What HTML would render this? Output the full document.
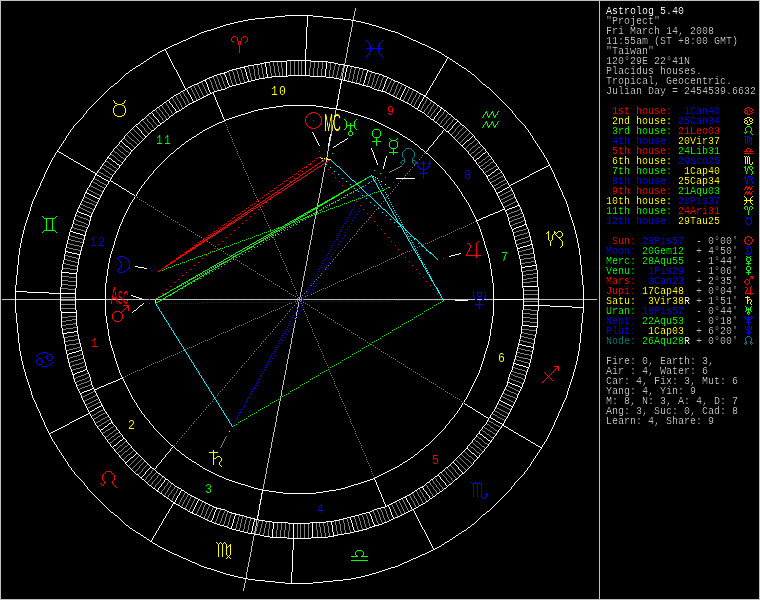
<!DOCTYPE html>
<html><head><meta charset="utf-8"><title>Astrolog 5.40</title>
<style>
html,body{margin:0;padding:0;background:#000;overflow:hidden}
svg{display:block}
text{font-family:"Liberation Mono",monospace;font-size:10px;white-space:pre}
.h{font-size:13.5px;text-anchor:middle;letter-spacing:1.3px}
.o{font-family:"Liberation Sans",sans-serif;font-size:24px;text-anchor:middle}
</style></head><body>
<svg width="760" height="600" viewBox="0 0 760 600">
<defs><filter id="t" x="0" y="0" width="760" height="600" filterUnits="userSpaceOnUse" color-interpolation-filters="sRGB"><feComponentTransfer><feFuncA type="gamma" amplitude="1.2" exponent="1.7" offset="0"/></feComponentTransfer></filter><filter id="t2" x="0" y="0" width="760" height="600" filterUnits="userSpaceOnUse" color-interpolation-filters="sRGB"><feComponentTransfer><feFuncA type="gamma" amplitude="1.4" exponent="2.2" offset="0"/></feComponentTransfer></filter></defs>
<rect width="760" height="600" fill="#000"/>
<g shape-rendering="crispEdges">
<path fill="#c0c0c0" d="m0 0h760v1h-760zm0 1h1v599h-1zm599 0h1v599h-1zm160 0h1v599h-1zm-404 7h1v3h-1zm-1 3h1v5h-1zm-1 5h1v4h-1zm-1 5h1v6h-1zm-1 6h1v5h-1zm-1 5h1v5h-1zm-1 5h1v5h-1zm-1 5h1v5h-1zm-1 5h1v6h-1zm-1 6h1v5h-1zm-1 5h1v5h-1zm-1 5h1v2h-1zm0 3h1v2h-1zm-1 2h1v5h-1zm-1 5h1v6h-1zm-1 10h1v1h-1zm-4 16h1v1h-1zm-1 6h1v1h-1zm-1 5h1v5h-1zm-1 5h1v5h-1zm-1 5h1v5h-1zm-1 5h1v6h-1zm-1 6h1v5h-1zm-1 6h1v4h-1zm-1 6h1v3h-1zm-1 4h1v4h-1zm-1 4h1v1h-1zm0 2h1v4h-1zm-1 4h1v1h-1zm0 2h1v3h-1zm-1 4h1v2h-1zm0 3h1v1h-1zm-1 1h1v5h-1zm-1 5h1v5h-1zm-1 5h1v6h-1zm-1 6h1v5h-1zm-1 5h1v5h-1zm-1 5h1v5h-1zm-1 5h1v5h-1zm-1 5h1v3h-1zm0 5h1v1h-1zm-1 1h1v5h-1zm-1 5h1v5h-1zm-1 5h1v5h-1zm-1 5h1v5h-1zm-1 5h1v6h-1zm-1 6h1v5h-1zm-1 5h1v5h-1zm-1 5h1v5h-1zm-1 5h1v5h-1zm-1 5h1v6h-1zm-1 6h1v5h-1zm-1 5h1v5h-1zm-1 5h1v5h-1zm-1 5h1v5h-1zm-1 5h1v6h-1zm-1 6h1v5h-1zm-1 5h1v5h-1zm-1 5h1v2h-1zm-297 2h13v1h-13zm14 0h44v1h-44zm45 0h14v1h-14zm45 0h36v1h-36zm38 0h5v1h-5zm6 0h5v1h-5zm6 0h5v1h-5zm7 0h136v1h-136zm137 0h2v1h-2zm3 0h139v1h-139zm140 0h32v1h-32zm34 0h5v1h-5zm7 0h9v1h-9zm40 0h14v1h-14zm15 0h44v1h-44zm45 0h13v1h-13zm-285 1h1v1h-1zm-1 2h1v5h-1zm-1 5h1v2h-1zm0 3h1v2h-1zm-1 2h1v4h-1zm0 5h1v1h-1zm-1 1h1v1h-1zm0 2h1v3h-1zm-1 3h1v5h-1zm-1 5h1v5h-1zm-1 5h1v5h-1zm-1 5h1v6h-1zm-1 6h1v5h-1zm-1 5h1v5h-1zm-1 5h1v5h-1zm-1 5h1v5h-1zm-1 5h1v6h-1zm-1 6h1v5h-1zm-1 5h1v5h-1zm-1 5h1v5h-1zm-1 5h1v5h-1zm-1 5h1v6h-1zm-1 6h1v1h-1zm0 2h1v3h-1zm-1 3h1v5h-1zm-1 5h1v5h-1zm-1 5h1v5h-1zm-1 5h1v6h-1zm-1 6h1v5h-1zm-1 5h1v5h-1zm-1 5h1v5h-1zm-1 5h1v5h-1zm-1 5h1v6h-1zm-1 6h1v5h-1zm-1 5h1v5h-1zm-1 5h1v5h-1zm-1 5h1v5h-1zm-1 5h1v6h-1zm-1 6h1v5h-1zm-1 5h1v5h-1zm-1 5h1v5h-1zm-1 9h1v1h-1zm-1 6h1v1h-1zm-1 5h1v1h-1zm-3 11h1v1h-1zm-1 5h1v6h-1zm-1 6h1v5h-1zm-1 5h1v3h-1zm0 4h1v1h-1zm-1 1h1v5h-1zm-1 5h1v5h-1zm-1 5h1v6h-1zm-1 6h1v5h-1zm-1 5h1v5h-1zm-1 5h1v5h-1zm-1 5h1v5h-1zm-1 5h1v6h-1zm-1 7h1v4h-1zm-1 4h1v5h-1zm-1 5h1v3h-1zm-242 11h598v1h-598zm599 0h159v1h-159z"/>
<path fill="#fff" d="m285 15h28v1h-28zm-10 1h10v1h-10zm32 0h1v11h-1zm6 0h10v1h-10zm-48 1h10v1h-10zm58 0h10v1h-10zm-68 1h10v1h-10zm78 0h10v1h-10zm-85 1h7v1h-7zm95 0h8v1h-8zm-100 1h5v1h-5zm108 0h5v1h-5zm-113 1h5v1h-5zm118 0h5v1h-5zm-122 1h4v1h-4zm127 0h4v1h-4zm-131 1h4v1h-4zm135 0h4v1h-4zm-139 1h4v1h-4zm143 0h3v1h-3zm-146 1h3v1h-3zm149 0h4v1h-4zm-152 1h3v1h-3zm156 0h3v1h-3zm-159 1h3v1h-3zm89 0h1v22h-1zm73 0h3v1h-3zm-165 1h3v1h-3zm168 0h3v1h-3zm-171 1h3v1h-3zm174 0h3v1h-3zm-178 1h4v1h-4zm181 0h3v1h-3zm-184 1h3v1h-3zm187 0h4v1h-4zm-190 1h3v1h-3zm194 0h3v1h-3zm-196 1h2v1h-2zm199 0h2v1h-2zm-201 1h2v1h-2zm203 0h2v1h-2zm-205 1h2v1h-2zm207 0h2v1h-2zm-210 1h3v1h-3zm212 0h3v1h-3zm-214 1h2v1h-2zm217 0h2v1h-2zm-219 1h2v1h-2zm221 0h2v1h-2zm-223 1h2v1h-2zm225 0h2v1h-2zm-228 1h3v1h-3zm230 0h3v1h-3zm-232 1h2v1h-2zm235 0h2v1h-2zm-237 1h2v1h-2zm239 0h2v1h-2zm-241 1h2v1h-2zm243 0h2v1h-2zm-246 1h3v1h-3zm248 0h3v1h-3zm-250 1h2v1h-2zm253 0h2v1h-2zm-255 1h2v1h-2zm257 0h2v1h-2zm-259 1h2v1h-2zm261 0h2v1h-2zm-263 1h2v1h-2zm265 0h2v1h-2zm-267 1h2v1h-2zm141 0h1v27h-1zm128 0h2v1h-2zm-271 1h2v1h-2zm3 0h1v1h-1zm270 0h2v1h-2zm-275 1h2v1h-2zm6 0h1v2h-1zm271 0h2v1h-2zm-279 1h2v1h-2zm281 0h2v1h-2zm-282 1h1v1h-1zm10 0h1v2h-1zm274 0h1v1h-1zm-286 1h2v1h-2zm287 0h2v1h-2zm-289 1h2v1h-2zm15 0h1v2h-1zm276 0h1v1h-1zm-292 1h1v1h-1zm293 0h2v1h-2zm-295 1h2v1h-2zm19 0h1v2h-1zm278 0h2v1h-2zm-298 1h1v1h-1zm298 0h1v1h-1zm2 0h1v1h-1zm-302 1h2v1h-2zm23 0h1v2h-1zm276 0h1v2h-1zm4 0h2v1h-2zm-304 1h1v1h-1zm141 0h18v1h-18zm19 0h5v1h-5zm146 0h1v1h-1zm-308 1h2v1h-2zm27 0h1v2h-1zm99 0h17v1h-17zm41 0h17v1h-17zm134 0h1v2h-1zm8 0h2v1h-2zm-310 1h1v1h-1zm121 0h6v1h-6zm22 0h1v15h-1zm40 0h1v7h-1zm2 0h6v1h-6zm127 0h1v1h-1zm-314 1h2v1h-2zm31 0h1v2h-1zm88 0h4v1h-4zm5 0h1v4h-1zm69 0h4v1h-4zm110 0h1v1h-1zm12 0h2v1h-2zm-316 1h1v1h-1zm114 0h6v1h-6zm84 0h6v1h-6zm105 0h1v2h-1zm15 0h1v1h-1zm-320 1h2v1h-2zm35 0h1v2h-1zm75 0h6v1h-6zm96 0h6v1h-6zm115 0h2v1h-2zm-323 1h2v1h-2zm108 0h4v1h-4zm103 0h1v2h-1zm3 0h4v1h-4zm92 0h1v2h-1zm19 0h1v1h-1zm-326 1h1v1h-1zm39 0h1v2h-1zm66 0h5v1h-5zm26 0h1v7h-1zm88 0h5v1h-5zm108 0h2v1h-2zm-329 1h2v1h-2zm103 0h4v1h-4zm8 0h1v1h-1zm102 0h1v4h-1zm13 0h4v1h-4zm82 0h1v1h-1zm23 0h2v1h-2zm-332 1h1v1h-1zm43 0h1v1h-1zm57 0h4v1h-4zm13 0h1v3h-1zm80 0h1v8h-1zm38 0h4v1h-4zm77 0h1v2h-1zm26 0h1v1h-1zm-336 1h2v1h-2zm46 0h1v2h-1zm53 0h3v1h-3zm138 0h1v3h-1zm1 0h1v1h-1zm99 0h1v1h-1zm-338 1h1v1h-1zm98 0h2v1h-2zm142 0h3v1h-3zm70 0h1v2h-1zm29 0h2v1h-2zm-340 1h1v1h-1zm49 0h1v2h-1zm47 0h3v1h-3zm22 0h1v4h-1zm99 0h1v5h-1zm27 0h3v1h-3zm98 0h1v1h-1zm-344 1h2v1h-2zm94 0h5v1h-5zm146 0h1v3h-1zm9 0h4v1h-4zm63 0h1v1h-1zm33 0h1v1h-1zm-346 1h1v1h-1zm53 0h1v2h-1zm39 0h3v1h-3zm7 0h1v1h-1zm43 0h1v4h-1zm112 0h3v1h-3zm58 0h1v2h-1zm35 0h2v1h-2zm-348 1h1v1h-1zm90 0h3v1h-3zm11 0h1v2h-1zm63 0h17v1h-17zm18 0h4v1h-4zm76 0h2v1h-2zm92 0h1v1h-1zm-351 1h1v1h-1zm56 0h1v2h-1zm33 0h2v1h-2zm35 0h1v3h-1zm25 0h14v1h-14zm15 0h1v1h-1zm23 0h15v1h-15zm55 0h1v4h-1zm19 0h3v1h-3zm52 0h1v2h-1zm39 0h1v1h-1zm-353 1h1v1h-1zm87 0h3v1h-3zm17 0h1v3h-1zm39 0h2v1h-2zm3 0h4v1h-4zm58 0h8v1h-8zm18 0h1v4h-1zm43 0h2v1h-2zm89 0h1v1h-1zm-355 1h1v1h-1zm59 0h1v2h-1zm27 0h2v1h-2zm52 0h6v1h-6zm75 0h5v1h-5zm53 0h1v1h-1zm2 0h2v1h-2zm46 0h1v2h-1zm42 0h1v1h-1zm-357 1h1v1h-1zm85 0h1v3h-1zm1 0h1v1h-1zm42 0h1v3h-1zm7 0h4v1h-4zm84 0h4v1h-4zm47 0h1v2h-1zm5 0h2v1h-2zm87 0h1v1h-1zm-359 1h1v1h-1zm62 0h1v2h-1zm22 0h2v1h-2zm24 0h1v3h-1zm24 0h4v1h-4zm90 0h1v3h-1zm2 0h1v1h-1zm2 0h2v1h-2zm19 0h1v3h-1zm29 0h2v1h-2zm41 0h1v1h-1zm45 0h1v1h-1zm-361 1h1v1h-1zm83 0h2v1h-2zm46 0h1v1h-1zm2 0h2v1h-2zm98 0h4v1h-4zm38 0h1v3h-1zm10 0h3v1h-3zm38 0h1v2h-1zm47 0h1v1h-1zm-363 1h1v1h-1zm65 0h1v2h-1zm17 0h2v1h-2zm7 0h1v2h-1zm38 0h3v1h-3zm107 0h4v1h-4zm47 0h2v1h-2zm83 0h1v1h-1zm-366 1h2v1h-2zm82 0h2v1h-2zm31 0h1v2h-1zm12 0h4v1h-4zm100 0h1v6h-1zm15 0h4v1h-4zm8 0h1v3h-1zm37 0h2v1h-2zm32 0h1v2h-1zm50 0h1v1h-1zm-368 1h1v1h-1zm69 0h1v2h-1zm11 0h3v1h-3zm13 0h1v3h-1zm29 0h4v1h-4zm123 0h3v1h-3zm25 0h1v3h-1zm18 0h2v1h-2zm81 0h2v1h-2zm-370 1h1v1h-1zm79 0h2v1h-2zm37 0h1v2h-1zm3 0h4v1h-4zm130 0h1v1h-1zm2 0h2v1h-2zm40 0h2v1h-2zm27 0h1v1h-1zm54 0h1v1h-1zm-374 1h2v1h-2zm73 0h1v2h-1zm6 0h2v1h-2zm40 0h2v1h-2zm136 0h4v1h-4zm40 0h2v1h-2zm24 0h1v2h-1zm56 0h1v1h-1zm-376 1h1v1h-1zm78 0h2v1h-2zm20 0h1v3h-1zm19 0h2v1h-2zm143 0h2v1h-2zm13 0h1v2h-1zm22 0h1v2h-1zm3 0h2v1h-2zm79 0h2v1h-2zm-378 1h1v1h-1zm76 0h1v2h-1zm2 0h1v1h-1zm38 0h2v1h-2zm147 0h2v1h-2zm38 0h2v1h-2zm19 0h1v2h-1zm60 0h1v1h-1zm-381 1h1v1h-1zm78 0h1v1h-1zm35 0h4v1h-4zm118 0h1v5h-1zm35 0h3v1h-3zm8 0h1v3h-1zm22 0h1v2h-1zm8 0h2v1h-2zm78 0h1v1h-1zm-383 1h1v1h-1zm76 0h2v1h-2zm4 0h1v2h-1zm22 0h1v2h-1zm8 0h4v1h-4zm160 0h4v1h-4zm37 0h2v1h-2zm14 0h1v1h-1zm63 0h1v1h-1zm-385 1h1v1h-1zm75 0h2v1h-2zm33 0h3v1h-3zm167 0h1v1h-1zm2 0h2v1h-2zm20 0h1v2h-1zm13 0h2v1h-2zm11 0h1v2h-1zm65 0h1v1h-1zm-387 1h1v1h-1zm75 0h1v1h-1zm8 0h1v2h-1zm22 0h1v2h-1zm2 0h2v1h-2zm173 0h2v1h-2zm33 0h1v1h-1zm75 0h1v1h-1zm-389 1h1v1h-1zm74 0h2v1h-2zm33 0h1v1h-1zm2 0h1v2h-1zm174 0h2v1h-2zm15 0h1v2h-1zm17 0h2v1h-2zm7 0h1v2h-1zm68 0h1v1h-1zm-391 1h1v1h-1zm73 0h2v1h-2zm13 0h1v1h-1zm19 0h2v1h-2zm130 0h1v6h-1zm51 0h2v1h-2zm32 0h2v1h-2zm74 0h1v1h-1zm-393 1h1v1h-1zm72 0h2v1h-2zm16 0h1v2h-1zm16 0h2v1h-2zm8 0h1v2h-1zm177 0h2v1h-2zm10 0h1v2h-1zm22 0h3v1h-3zm73 0h1v1h-1zm-395 1h1v1h-1zm72 0h1v1h-1zm31 0h2v1h-2zm189 0h2v1h-2zm31 0h2v1h-2zm73 0h1v1h-1zm-397 1h1v1h-1zm71 0h2v1h-2zm20 0h1v2h-1zm11 0h2v1h-2zm13 0h1v3h-1zm180 0h2v1h-2zm5 0h1v3h-1zm23 0h1v2h-1zm3 0h2v1h-2zm72 0h1v1h-1zm-399 1h1v1h-1zm71 0h1v1h-1zm30 0h2v1h-2zm197 0h2v1h-2zm31 0h1v1h-1zm71 0h1v1h-1zm-401 1h1v1h-1zm71 0h1v1h-1zm23 0h1v2h-1zm6 0h2v1h-2zm201 0h1v1h-1zm23 0h1v2h-1zm7 0h1v1h-1zm71 0h1v1h-1zm-403 1h1v1h-1zm70 0h2v1h-2zm29 0h2v1h-2zm20 0h1v2h-1zm121 0h1v6h-1zm64 0h2v1h-2zm29 0h2v1h-2zm71 0h1v1h-1zm-405 1h1v1h-1zm70 0h1v1h-1zm3 0h1v2h-1zm24 0h3v1h-3zm210 0h2v1h-2zm18 0h1v1h-1zm11 0h1v1h-1zm70 0h1v1h-1zm-407 1h1v1h-1zm69 0h2v1h-2zm28 0h2v1h-2zm25 0h1v3h-1zm188 0h2v1h-2zm15 0h1v2h-1zm13 0h2v1h-2zm70 0h1v1h-1zm-409 1h1v1h-1zm69 0h1v1h-1zm7 0h1v1h-1zm20 0h2v1h-2zm217 0h2v1h-2zm28 0h1v1h-1zm69 0h1v1h-1zm-411 1h1v1h-1zm69 0h1v1h-1zm9 0h1v1h-1zm17 0h2v1h-2zm221 0h2v1h-2zm10 0h1v2h-1zm17 0h1v1h-1zm69 0h1v1h-1zm-413 1h1v1h-1zm68 0h2v1h-2zm12 0h1v2h-1zm15 0h1v1h-1zm31 0h1v2h-1zm65 0h33v1h-33zm128 0h1v1h-1zm26 0h2v1h-2zm69 0h1v1h-1zm-415 1h1v1h-1zm68 0h1v1h-1zm26 0h2v1h-2zm91 0h7v1h-7zm40 0h7v1h-7zm20 0h1v4h-1zm76 0h2v1h-2zm6 0h1v2h-1zm21 0h1v1h-1zm68 0h1v1h-1zm-417 1h1v1h-1zm67 0h2v1h-2zm16 0h1v1h-1zm11 0h1v1h-1zm35 0h1v2h-1zm50 0h7v1h-7zm54 0h6v1h-6zm91 0h1v1h-1zm26 0h2v1h-2zm68 0h1v1h-1zm-419 1h1v1h-1zm67 0h1v1h-1zm18 0h1v1h-1zm8 0h2v1h-2zm81 0h6v1h-6zm66 0h7v1h-7zm86 0h3v1h-3zm26 0h2v1h-2zm68 0h1v1h-1zm-421 1h1v1h-1zm67 0h1v1h-1zm20 0h1v2h-1zm6 0h1v1h-1zm39 0h1v3h-1zm38 0h5v1h-5zm79 0h4v1h-4zm80 0h1v1h-1zm23 0h1v2h-1zm3 0h1v1h-1zm67 0h1v1h-1zm-423 1h1v1h-1zm66 0h2v1h-2zm26 0h2v1h-2zm75 0h4v1h-4zm87 0h4v1h-4zm77 0h2v1h-2zm26 0h2v1h-2zm67 0h1v1h-1zm-425 1h1v2h-1zm66 0h1v1h-1zm24 0h3v1h-3zm75 0h3v1h-3zm94 0h3v1h-3zm75 0h2v1h-2zm19 0h1v1h-1zm7 0h1v1h-1zm66 0h1v2h-1zm-361 1h1v1h-1zm24 0h2v1h-2zm46 0h1v2h-1zm27 0h3v1h-3zm100 0h3v1h-3zm74 0h2v1h-2zm16 0h1v1h-1zm9 0h1v1h-1zm-362 1h1v1h-1zm64 0h2v1h-2zm3 0h1v1h-1zm22 0h1v1h-1zm71 0h3v1h-3zm106 0h3v1h-3zm73 0h1v1h-1zm13 0h1v2h-1zm11 0h1v1h-1zm65 0h1v1h-1zm-429 1h1v1h-1zm64 0h1v1h-1zm5 0h1v2h-1zm20 0h1v1h-1zm49 0h1v3h-1zm19 0h4v1h-4zm113 0h4v1h-4zm71 0h1v1h-1zm24 0h2v1h-2zm65 0h1v1h-1zm-431 1h1v2h-1zm64 0h1v1h-1zm24 0h2v1h-2zm67 0h3v1h-3zm120 0h3v1h-3zm68 0h1v1h-1zm10 0h1v1h-1zm15 0h1v1h-1zm64 0h1v2h-1zm-369 1h1v1h-1zm8 0h1v1h-1zm16 0h1v1h-1zm65 0h3v1h-3zm126 0h3v1h-3zm66 0h2v1h-2zm8 0h1v1h-1zm17 0h1v1h-1zm-370 1h1v1h-1zm63 0h1v1h-1zm10 0h1v1h-1zm14 0h1v1h-1zm54 0h1v2h-1zm9 0h3v1h-3zm132 0h3v1h-3zm65 0h1v1h-1zm5 0h1v2h-1zm19 0h1v1h-1zm63 0h1v1h-1zm-435 1h1v1h-1zm63 0h1v1h-1zm12 0h1v1h-1zm12 0h1v1h-1zm61 0h3v1h-3zm138 0h3v1h-3zm63 0h1v1h-1zm24 0h1v1h-1zm63 0h1v1h-1zm-437 1h1v1h-1zm62 0h2v1h-2zm15 0h1v1h-1zm9 0h2v1h-2zm58 0h1v2h-1zm2 0h3v1h-3zm144 0h3v1h-3zm61 0h3v1h-3zm24 0h2v1h-2zm63 0h1v1h-1zm-439 1h1v1h-1zm62 0h1v1h-1zm17 0h1v2h-1zm7 0h1v1h-1zm60 0h1v1h-1zm148 0h2v1h-2zm60 0h1v1h-1zm24 0h1v2h-1zm62 0h1v1h-1zm-441 1h1v1h-1zm62 0h1v1h-1zm24 0h1v1h-1zm58 0h2v1h-2zm153 0h2v1h-2zm59 0h1v1h-1zm24 0h1v1h-1zm62 0h1v1h-1zm-443 1h1v1h-1zm62 0h1v1h-1zm20 0h1v1h-1zm3 0h2v1h-2zm57 0h3v1h-3zm158 0h2v1h-2zm58 0h2v1h-2zm21 0h1v1h-1zm3 0h1v1h-1zm62 0h1v1h-1zm-445 1h1v1h-1zm62 0h1v1h-1zm22 0h2v1h-2zm57 0h2v1h-2zm162 0h2v1h-2zm58 0h1v1h-1zm18 0h1v1h-1zm5 0h1v1h-1zm62 0h1v1h-1zm-447 1h1v1h-1zm61 0h2v1h-2zm24 0h1v1h-1zm55 0h2v1h-2zm166 0h2v1h-2zm57 0h1v1h-1zm16 0h1v1h-1zm7 0h1v1h-1zm62 0h1v1h-1zm-449 1h1v1h-1zm61 0h1v1h-1zm23 0h2v1h-2zm55 0h2v1h-2zm170 0h2v1h-2zm56 0h1v1h-1zm14 0h1v1h-1zm9 0h2v1h-2zm62 0h1v1h-1zm-451 1h1v2h-1zm61 0h1v1h-1zm2 0h1v1h-1zm21 0h1v1h-1zm54 0h2v1h-2zm174 0h2v1h-2zm55 0h2v1h-2zm12 0h1v2h-1zm12 0h1v1h-1zm61 0h1v2h-1zm-392 1h1v1h-1zm4 0h1v1h-1zm19 0h1v1h-1zm53 0h2v1h-2zm178 0h2v1h-2zm55 0h1v1h-1zm23 0h1v1h-1zm-393 1h1v1h-1zm60 0h1v1h-1zm6 0h1v1h-1zm17 0h1v1h-1zm52 0h2v1h-2zm182 0h2v1h-2zm54 0h1v1h-1zm8 0h1v1h-1zm15 0h1v1h-1zm60 0h1v1h-1zm-455 1h1v1h-1zm60 0h1v1h-1zm8 0h1v1h-1zm15 0h1v1h-1zm51 0h2v1h-2zm186 0h2v1h-2zm53 0h1v1h-1zm6 0h1v1h-1zm17 0h1v1h-1zm60 0h1v1h-1zm-457 1h1v2h-1zm60 0h1v1h-1zm10 0h1v1h-1zm12 0h2v1h-2zm51 0h2v1h-2zm190 0h2v1h-2zm50 0h1v1h-1zm2 0h1v1h-1zm4 0h1v1h-1zm19 0h1v1h-1zm60 0h1v2h-1zm-399 1h1v1h-1zm12 0h1v2h-1zm10 0h1v1h-1zm51 0h1v1h-1zm193 0h2v1h-2zm47 0h1v2h-1zm4 0h3v1h-3zm23 0h1v1h-1zm-400 1h1v1h-1zm59 0h1v1h-1zm22 0h1v1h-1zm50 0h2v1h-2zm112 0h1v1h-1zm85 0h2v1h-2zm51 0h1v1h-1zm22 0h1v1h-1zm59 0h1v1h-1zm-461 1h1v2h-1zm59 0h1v1h-1zm15 0h1v1h-1zm7 0h1v1h-1zm50 0h1v1h-1zm114 0h1v2h-1zm86 0h1v1h-1zm42 0h1v1h-1zm8 0h1v1h-1zm22 0h1v1h-1zm59 0h1v2h-1zm-404 1h1v1h-1zm17 0h1v1h-1zm5 0h1v1h-1zm49 0h2v1h-2zm133 0h1v3h-1zm70 0h2v1h-2zm40 0h1v1h-1zm10 0h1v1h-1zm22 0h1v1h-1zm-405 1h1v1h-1zm58 0h1v1h-1zm19 0h1v1h-1zm3 0h1v1h-1zm49 0h1v1h-1zm118 0h1v2h-1zm88 0h1v1h-1zm37 0h1v1h-1zm12 0h1v1h-1zm22 0h1v1h-1zm58 0h1v1h-1zm-465 1h1v2h-1zm58 0h1v2h-1zm21 0h2v1h-2zm49 0h2v1h-2zm209 0h2v1h-2zm35 0h1v1h-1zm14 0h1v1h-1zm20 0h1v1h-1zm2 0h1v2h-1zm58 0h1v2h-1zm-387 1h1v1h-1zm47 0h2v1h-2zm123 0h1v2h-1zm14 0h1v6h-1zm76 0h2v1h-2zm32 0h1v2h-1zm16 0h1v1h-1zm18 0h1v1h-1zm-406 1h1v2h-1zm58 0h1v1h-1zm21 0h1v1h-1zm47 0h1v1h-1zm156 0h1v1h-1zm60 0h1v1h-1zm47 0h1v1h-1zm16 0h1v1h-1zm5 0h1v1h-1zm58 0h1v2h-1zm-411 1h1v1h-1zm21 0h1v1h-1zm46 0h2v1h-2zm127 0h1v2h-1zm29 0h2v1h-2zm63 0h2v1h-2zm28 0h1v1h-1zm19 0h1v1h-1zm14 0h1v1h-1zm7 0h1v1h-1zm-412 1h1v1h-1zm57 0h1v2h-1zm21 0h1v1h-1zm46 0h1v1h-1zm156 0h1v1h-1zm66 0h1v1h-1zm25 0h1v1h-1zm21 0h1v1h-1zm11 0h2v1h-2zm10 0h1v1h-1zm57 0h1v1h-1zm-471 1h1v2h-1zm57 0h1v1h-1zm21 0h1v1h-1zm45 0h2v1h-2zm131 0h1v2h-1zm25 0h2v1h-2zm69 0h2v1h-2zm23 0h1v1h-1zm23 0h1v1h-1zm9 0h1v1h-1zm12 0h1v1h-1zm57 0h1v2h-1zm-416 1h1v2h-1zm3 0h1v1h-1zm18 0h1v1h-1zm45 0h1v1h-1zm155 0h2v1h-2zm73 0h1v1h-1zm20 0h1v2h-1zm25 0h1v1h-1zm7 0h1v1h-1zm14 0h1v2h-1zm-417 1h1v1h-1zm61 0h1v1h-1zm16 0h1v1h-1zm45 0h1v1h-1zm134 0h1v2h-1zm10 0h1v4h-1zm11 0h1v1h-1zm75 0h1v1h-1zm45 0h1v1h-1zm5 0h1v1h-1zm72 0h1v1h-1zm-475 1h1v2h-1zm57 0h1v1h-1zm6 0h1v1h-1zm14 0h1v1h-1zm44 0h2v1h-2zm155 0h2v1h-2zm78 0h2v1h-2zm17 0h1v1h-1zm28 0h1v1h-1zm3 0h1v1h-1zm17 0h1v1h-1zm57 0h1v2h-1zm-420 1h1v1h-1zm8 0h1v1h-1zm12 0h1v1h-1zm44 0h1v1h-1zm138 0h1v1h-1zm17 0h1v1h-1zm81 0h1v1h-1zm14 0h1v1h-1zm30 0h2v1h-2zm20 0h1v1h-1zm-421 1h1v1h-1zm56 0h1v1h-1zm10 0h2v1h-2zm10 0h1v1h-1zm44 0h1v1h-1zm154 0h2v1h-2zm84 0h1v1h-1zm12 0h1v1h-1zm32 0h1v1h-1zm20 0h1v1h-1zm56 0h1v1h-1zm-479 1h1v2h-1zm56 0h1v1h-1zm13 0h1v1h-1zm7 0h1v1h-1zm44 0h1v1h-1zm154 0h1v1h-1zm86 0h1v1h-1zm10 0h1v1h-1zm34 0h1v1h-1zm20 0h1v1h-1zm56 0h1v2h-1zm-425 1h1v1h-1zm15 0h1v1h-1zm5 0h1v1h-1zm43 0h2v1h-2zm194 0h1v2h-1zm49 0h1v1h-1zm8 0h1v2h-1zm36 0h1v1h-1zm20 0h1v1h-1zm-426 1h1v1h-1zm55 0h1v2h-1zm17 0h1v1h-1zm3 0h1v1h-1zm43 0h1v1h-1zm245 0h2v1h-2zm44 0h1v1h-1zm20 0h1v2h-1zm55 0h1v1h-1zm-483 1h1v2h-1zm74 0h2v1h-2zm44 0h1v1h-1zm197 0h1v2h-1zm51 0h1v1h-1zm4 0h1v1h-1zm39 0h1v1h-1zm75 0h1v2h-1zm-483 1h1v1h-1zm54 0h1v1h-1zm19 0h1v1h-1zm43 0h1v1h-1zm250 0h1v1h-1zm2 0h1v1h-1zm41 0h1v1h-1zm19 0h1v1h-1zm-430 1h1v1h-1zm3 0h2v1h-2zm52 0h1v1h-1zm19 0h1v2h-1zm43 0h1v1h-1zm200 0h1v3h-1zm52 0h1v1h-1zm43 0h1v2h-1zm17 0h1v1h-1zm2 0h1v1h-1zm55 0h1v1h-1zm-487 1h1v2h-1zm6 0h2v1h-2zm49 0h1v2h-1zm61 0h2v1h-2zm255 0h2v1h-2zm57 0h2v1h-2zm5 0h1v2h-1zm55 0h1v2h-1zm-480 1h1v1h-1zm66 0h1v1h-1zm41 0h1v1h-1zm258 0h1v1h-1zm41 0h1v1h-1zm13 0h1v1h-1zm-428 1h1v2h-1zm10 0h2v1h-2zm45 0h1v1h-1zm19 0h1v1h-1zm41 0h1v1h-1zm205 0h1v3h-1zm55 0h1v1h-1zm41 0h1v1h-1zm11 0h1v1h-1zm8 0h1v1h-1zm55 0h1v2h-1zm-478 1h2v1h-2zm42 0h1v2h-1zm19 0h1v1h-1zm41 0h1v1h-1zm218 0h1v2h-1zm44 0h1v1h-1zm41 0h1v1h-1zm9 0h1v1h-1zm10 0h1v1h-1zm-437 1h1v1h-1zm15 0h1v1h-1zm39 0h1v2h-1zm19 0h1v1h-1zm41 0h1v1h-1zm264 0h1v1h-1zm41 0h1v1h-1zm7 0h1v1h-1zm12 0h1v2h-1zm54 0h1v1h-1zm-493 1h1v2h-1zm17 0h2v1h-2zm40 0h2v1h-2zm16 0h1v2h-1zm41 0h1v1h-1zm209 0h1v2h-1zm10 0h1v4h-1zm47 0h1v1h-1zm41 0h1v2h-1zm4 0h2v1h-2zm69 0h1v2h-1zm-475 1h2v1h-2zm35 0h1v1h-1zm5 0h1v1h-1zm54 0h1v1h-1zm268 0h1v1h-1zm43 0h1v1h-1zm16 0h1v1h-1zm-441 1h1v2h-1zm22 0h1v1h-1zm32 0h1v2h-1zm7 0h1v1h-1zm12 0h1v1h-1zm40 0h1v1h-1zm212 0h1v3h-1zm58 0h1v1h-1zm40 0h2v1h-2zm19 0h1v2h-1zm54 0h1v2h-1zm-473 1h2v1h-2zm39 0h2v1h-2zm10 0h1v1h-1zm40 0h1v1h-1zm272 0h1v1h-1zm40 0h1v1h-1zm-425 1h1v2h-1zm26 0h2v1h-2zm28 0h1v1h-1zm11 0h1v1h-1zm7 0h1v2h-1zm40 0h1v1h-1zm222 0h1v4h-1zm52 0h1v1h-1zm40 0h1v2h-1zm18 0h1v1h-1zm54 0h1v2h-1zm-470 1h2v1h-2zm25 0h1v1h-1zm13 0h1v1h-1zm45 0h1v1h-1zm216 0h1v2h-1zm60 0h1v1h-1zm58 0h1v1h-1zm-446 1h1v2h-1zm31 0h1v1h-1zm22 0h1v2h-1zm15 0h2v1h-2zm4 0h1v1h-1zm39 0h1v1h-1zm278 0h1v1h-1zm39 0h1v1h-1zm19 0h1v2h-1zm53 0h1v2h-1zm-468 1h2v1h-2zm38 0h1v3h-1zm1 0h1v1h-1zm39 0h1v1h-1zm280 0h1v1h-1zm39 0h1v1h-1zm70 0h1v1h-1zm-500 1h1v2h-1zm35 0h2v1h-2zm18 0h1v1h-1zm57 0h1v1h-1zm225 0h1v3h-1zm57 0h1v1h-1zm39 0h1v2h-1zm18 0h1v1h-1zm49 0h2v1h-2zm4 0h1v2h-1zm-465 1h1v1h-1zm15 0h1v2h-1zm57 0h1v1h-1zm284 0h1v1h-1zm57 0h1v2h-1zm46 0h2v1h-2zm-497 1h1v2h-1zm39 0h2v1h-2zm32 0h1v1h-1zm38 0h1v1h-1zm286 0h1v1h-1zm38 0h1v1h-1zm62 0h2v1h-2zm9 0h1v2h-1zm-463 1h2v1h-2zm11 0h1v1h-1zm18 0h1v1h-1zm38 0h1v1h-1zm288 0h1v1h-1zm38 0h1v1h-1zm15 0h2v1h-2zm3 0h1v1h-1zm41 0h2v1h-2zm-494 1h1v2h-1zm44 0h1v1h-1zm8 0h1v1h-1zm18 0h1v1h-1zm38 0h1v1h-1zm290 0h1v1h-1zm38 0h1v1h-1zm13 0h1v1h-1zm5 0h1v1h-1zm38 0h2v1h-2zm14 0h1v2h-1zm-461 1h2v1h-2zm6 0h1v2h-1zm18 0h1v2h-1zm38 0h1v2h-1zm292 0h1v2h-1zm38 0h1v2h-1zm11 0h1v1h-1zm7 0h1v2h-1zm35 0h2v1h-2zm-491 1h1v2h-1zm48 0h2v1h-2zm399 0h2v1h-2zm42 0h2v1h-2zm19 0h1v2h-1zm-458 1h1v3h-1zm1 0h1v2h-1zm18 0h1v1h-1zm38 0h1v1h-1zm294 0h1v1h-1zm38 0h1v1h-1zm7 0h1v1h-1zm11 0h1v1h-1zm30 0h2v1h-2zm-488 1h1v3h-1zm69 0h1v1h-1zm38 0h1v1h-1zm296 0h1v1h-1zm38 0h1v1h-1zm5 0h1v1h-1zm13 0h1v2h-1zm27 0h2v1h-2zm24 0h1v3h-1zm-457 1h2v1h-2zm15 0h1v2h-1zm38 0h1v1h-1zm298 0h1v1h-1zm38 0h1v2h-1zm2 0h2v1h-2zm41 0h1v1h-1zm-435 1h1v2h-1zm5 0h2v1h-2zm50 0h1v1h-1zm300 0h1v1h-1zm38 0h1v3h-1zm17 0h1v2h-1zm23 0h2v1h-2zm-484 1h1v2h-1zm58 0h1v1h-1zm10 0h1v2h-1zm37 0h1v2h-1zm302 0h1v2h-1zm75 0h2v1h-2zm30 0h1v2h-1zm-462 1h1v2h-1zm9 0h2v1h-2zm294 0h19v1h-19zm109 0h1v2h-1zm18 0h2v1h-2zm-481 1h1v2h-1zm62 0h2v1h-2zm6 0h1v2h-1zm37 0h1v1h-1zm304 0h1v1h-1zm37 0h1v2h-1zm33 0h2v1h-2zm35 0h1v2h-1zm-464 1h1v1h-1zm14 0h2v1h-2zm40 0h1v1h-1zm306 0h1v1h-1zm54 0h1v1h-1zm13 0h2v1h-2zm-478 1h1v2h-1zm50 0h1v2h-1zm17 0h1v3h-1zm1 0h1v1h-1zm2 0h2v1h-2zm34 0h1v1h-1zm308 0h1v1h-1zm36 0h1v1h-1zm18 0h1v2h-1zm10 0h2v1h-2zm40 0h1v2h-1zm-444 1h1v1h-1zm31 0h1v2h-1zm310 0h1v2h-1zm36 0h1v2h-1zm25 0h2v1h-2zm-475 1h1v3h-1zm50 0h1v2h-1zm24 0h2v1h-2zm394 0h1v2h-1zm5 0h2v1h-2zm45 0h1v3h-1zm-451 1h1v1h-1zm9 0h2v1h-2zm27 0h1v1h-1zm312 0h1v1h-1zm36 0h1v1h-1zm20 0h2v1h-2zm-422 1h1v2h-1zm17 0h1v2h-1zm12 0h1v1h-1zm24 0h1v1h-1zm314 0h1v1h-1zm36 0h1v2h-1zm17 0h2v1h-2zm-470 1h1v2h-1zm80 0h2v1h-2zm22 0h1v2h-1zm316 0h1v2h-1zm52 0h1v1h-1zm50 0h1v2h-1zm-471 1h1v1h-1zm17 0h1v1h-1zm16 0h1v1h-1zm372 0h1v1h-1zm14 0h2v1h-2zm3 0h1v1h-1zm-472 1h1v2h-1zm49 0h1v2h-1zm17 0h1v2h-1zm18 0h2v1h-2zm18 0h1v1h-1zm318 0h1v1h-1zm36 0h1v2h-1zm11 0h2v1h-2zm6 0h1v2h-1zm49 0h1v2h-1zm-436 1h2v1h-2zm15 0h1v2h-1zm320 0h1v2h-1zm44 0h2v1h-2zm-466 1h1v2h-1zm49 0h1v3h-1zm17 0h1v2h-1zm23 0h1v1h-1zm369 0h1v2h-1zm7 0h1v1h-1zm10 0h1v2h-1zm49 0h1v2h-1zm-434 1h2v1h-2zm11 0h1v1h-1zm322 0h1v1h-1zm40 0h2v1h-2zm-464 1h1v3h-1zm49 0h1v2h-1zm17 0h1v2h-1zm27 0h1v1h-1zm8 0h1v2h-1zm324 0h1v2h-1zm35 0h1v2h-1zm2 0h2v1h-2zm15 0h1v2h-1zm49 0h1v3h-1zm-475 1h2v1h-2zm43 0h2v1h-2zm367 0h1v3h-1zm-413 1h1v3h-1zm5 0h2v1h-2zm12 0h1v2h-1zm31 0h2v1h-2zm4 0h1v2h-1zm326 0h1v2h-1zm52 0h1v3h-1zm-479 1h1v2h-1zm56 0h2v1h-2zm43 0h1v1h-1zm429 0h1v2h-1zm-470 1h2v1h-2zm7 0h1v2h-1zm363 0h1v1h-1zm35 0h1v2h-1zm-464 1h1v2h-1zm49 0h1v2h-1zm12 0h2v1h-2zm39 0h1v2h-1zm330 0h1v2h-1zm51 0h1v2h-1zm49 0h1v2h-1zm-467 1h3v1h-3zm402 0h1v2h-1zm-466 1h1v2h-1zm49 0h1v2h-1zm17 0h1v1h-1zm34 0h1v1h-1zm332 0h1v1h-1zm51 0h1v2h-1zm49 0h1v2h-1zm-467 1h1v2h-1zm34 0h1v2h-1zm334 0h1v2h-1zm34 0h1v2h-1zm-468 1h1v3h-1zm49 0h1v2h-1zm436 0h1v2h-1zm49 0h1v3h-1zm-469 1h1v2h-1zm34 0h1v1h-1zm336 0h1v1h-1zm34 0h1v2h-1zm-421 1h1v2h-1zm50 0h1v2h-1zm338 0h1v2h-1zm50 0h1v3h-1zm-487 1h1v3h-1zm65 0h1v2h-1zm406 0h1v2h-1zm65 0h1v3h-1zm-488 1h1v2h-1zm50 0h1v2h-1zm340 0h1v2h-1zm48 0h1v1h-1zm2 0h1v2h-1zm-424 1h1v2h-1zm408 0h1v2h-1zm12 0h2v1h-2zm-485 1h1v4h-1zm48 0h1v2h-1zm50 0h1v2h-1zm342 0h1v2h-1zm42 0h3v1h-3zm8 0h1v2h-1zm48 0h1v4h-1zm-474 1h1v2h-1zm410 0h1v2h-1zm5 0h3v1h-3zm-432 1h1v3h-1zm50 0h1v2h-1zm344 0h1v2h-1zm31 0h2v1h-2zm5 0h2v1h-2zm14 0h1v3h-1zm-428 1h1v2h-1zm407 0h2v1h-2zm5 0h2v1h-2zm-476 1h1v3h-1zm49 0h1v1h-1zm48 0h1v2h-1zm346 0h1v2h-1zm26 0h2v1h-2zm7 0h1v1h-1zm64 0h1v3h-1zm-493 1h1v2h-1zm3 0h2v1h-2zm13 0h1v2h-1zm403 0h3v1h-3zm11 0h1v2h-1zm16 0h1v2h-1zm-441 1h3v1h-3zm44 0h1v2h-1zm348 0h1v2h-1zm20 0h2v1h-2zm-465 1h1v3h-1zm47 0h1v3h-1zm9 0h3v1h-3zm7 0h1v3h-1zm399 0h3v1h-3zm17 0h1v3h-1zm16 0h1v3h-1zm47 0h1v3h-1zm-483 1h2v1h-2zm37 0h1v2h-1zm350 0h1v2h-1zm14 0h2v1h-2zm-399 1h2v1h-2zm397 0h2v1h-2zm-459 1h1v3h-1zm47 0h1v3h-1zm16 0h1v4h-1zm33 0h1v2h-1zm352 0h1v2h-1zm8 0h3v1h-3zm25 0h1v4h-1zm16 0h1v3h-1zm47 0h1v3h-1zm-90 1h2v1h-2zm-359 1h1v3h-1zm354 0h1v3h-1zm3 0h2v1h-2zm-453 1h1v3h-1zm47 0h1v4h-1zm404 0h2v1h-2zm48 0h1v5h-1zm47 0h1v3h-1zm-483 1h1v4h-1zm420 0h1v4h-1zm-388 1h1v2h-1zm356 0h1v2h-1zm-452 1h1v3h-1zm548 0h1v3h-1zm-501 1h1v3h-1zm48 0h1v2h-1zm358 0h1v2h-1zm46 0h1v1h-1zm2 0h1v3h-1zm-438 1h1v2h-1zm422 0h1v2h-1zm12 0h2v1h-2zm-498 1h1v4h-1zm95 0h1v3h-1zm360 0h1v3h-1zm40 0h3v1h-3zm55 0h1v4h-1zm-503 1h1v2h-1zm16 0h1v2h-1zm424 0h1v2h-1zm5 0h3v1h-3zm11 0h1v2h-1zm-13 1h2v1h-2zm-444 1h1v3h-1zm16 0h1v3h-1zm32 0h1v3h-1zm362 0h1v3h-1zm32 0h1v3h-1zm1 0h1v1h-1zm15 0h1v3h-1zm-505 1h1v4h-1zm552 0h1v4h-1zm-504 1h2v1h-2zm-2 1h1v4h-1zm4 0h3v1h-3zm12 0h1v4h-1zm32 0h1v3h-1zm364 0h1v3h-1zm32 0h1v4h-1zm16 0h1v4h-1zm-453 1h4v1h-4zm-54 1h1v4h-1zm58 0h3v1h-3zm496 0h1v4h-1zm-493 1h2v1h-2zm33 0h1v3h-1zm366 0h1v3h-1zm-414 1h1v4h-1zm16 0h1v4h-1zm430 0h1v4h-1zm16 0h1v4h-1zm-509 2h1v5h-1zm94 0h1v3h-1zm368 0h1v3h-1zm94 0h1v5h-1zm-510 2h1v4h-1zm16 0h1v4h-1zm432 0h1v4h-1zm16 0h1v5h-1zm-417 1h1v4h-1zm370 0h1v4h-1zm-464 2h1v5h-1zm558 0h1v5h-1zm-512 1h1v4h-1zm16 0h1v3h-1zm434 0h1v3h-1zm14 0h1v1h-1zm2 0h1v4h-1zm-419 1h1v3h-1zm372 0h1v3h-1zm42 0h3v1h-3zm-4 1h4v1h-4zm-442 1h1v4h-1zm436 0h1v4h-1zm3 0h3v1h-3zm-501 1h1v7h-1zm46 0h1v6h-1zm47 0h1v3h-1zm374 0h1v3h-1zm32 0h2v1h-2zm15 0h1v6h-1zm46 0h1v7h-1zm-513 3h2v1h-2zm14 0h1v4h-1zm31 0h1v3h-1zm376 0h1v3h-1zm31 0h1v4h-1zm-450 1h4v1h-4zm4 1h5v1h-5zm387 0h2v1h-2zm-395 1h1v6h-1zm13 0h3v1h-3zm33 0h1v4h-1zm345 0h4v1h-4zm33 0h1v4h-1zm46 0h1v6h-1zm-516 1h1v10h-1zm61 0h1v4h-1zm372 0h4v1h-4zm68 0h1v4h-1zm61 0h1v10h-1zm-131 1h2v1h-2zm-340 2h1v5h-1zm380 0h1v5h-1zm-411 1h1v6h-1zm442 0h1v6h-1zm-457 1h1v4h-1zm472 0h1v4h-1zm-427 3h1v6h-1zm382 0h1v6h-1zm-428 1h1v6h-1zm474 0h1v6h-1zm-519 1h1v10h-1zm60 0h1v7h-1zm444 0h1v7h-1zm11 0h4v1h-4zm49 0h1v10h-1zm-446 1h3v1h-3zm390 0h7v1h-7zm-387 1h6v1h-6zm384 0h3v1h-3zm-378 1h3v1h-3zm-37 1h1v7h-1zm384 0h1v7h-1zm-430 1h1v17h-1zm476 0h1v17h-1zm-475 2h7v1h-7zm14 0h1v16h-1zm446 0h1v16h-1zm-453 1h7v1h-7zm-53 2h1v10h-1zm566 0h1v10h-1zm-476 1h1v7h-1zm386 0h1v7h-1zm-387 7h1v33h-1zm388 0h1v33h-1zm-478 2h1v28h-1zm568 0h1v28h-1zm-60 1h14v1h-14zm-463 1h1v24h-1zm478 0h1v24h-1zm-463 1h1v22h-1zm448 0h1v22h-1zm-507 3h11v1h-11zm11 1h22v1h-22zm22 1h11v1h-11zm12 0h14v1h-14zm70 2h2v1h-2zm2 1h3v1h-3zm3 1h3v1h-3zm3 1h3v1h-3zm-63 1h29v1h-29zm66 0h2v1h-2zm352 0h29v1h-29zm-39 1h13v1h-13zm-312 3h1v1h-1zm-1 1h1v1h-1zm-2 1h2v1h-2zm384 0h14v1h-14zm15 0h11v1h-11zm-400 1h1v1h-1zm411 0h22v1h-22zm-412 1h1v1h-1zm434 0h11v1h-11zm-435 1h1v1h-1zm-1 1h1v1h-1zm-60 1h1v16h-1zm58 0h2v1h-2zm388 0h1v16h-1zm-461 1h1v17h-1zm72 0h1v1h-1zm404 0h1v17h-1zm-475 1h14v1h-14zm70 0h1v1h-1zm-116 1h1v10h-1zm566 0h1v10h-1zm-476 3h1v7h-1zm386 0h1v7h-1zm-475 7h1v10h-1zm90 0h1v6h-1zm384 0h1v6h-1zm90 0h1v10h-1zm-58 2h6v1h-6zm-446 1h1v8h-1zm444 0h1v8h-1zm8 0h8v1h-8zm-467 2h1v6h-1zm474 0h1v6h-1zm-428 1h1v7h-1zm382 0h1v7h-1zm-416 2h3v1h-3zm-7 1h7v1h-7zm-49 1h1v10h-1zm45 0h1v5h-1zm1 0h3v1h-3zm516 0h1v10h-1zm-502 1h1v5h-1zm442 0h1v5h-1zm15 0h1v4h-1zm-426 2h1v5h-1zm380 0h1v5h-1zm-425 2h1v6h-1zm470 0h1v6h-1zm-455 1h1v4h-1zm440 0h1v4h-1zm-409 2h1v4h-1zm378 0h1v4h-1zm-469 2h1v8h-1zm61 0h1v4h-1zm438 0h1v4h-1zm61 0h1v8h-1zm-514 1h1v6h-1zm454 0h3v1h-3zm14 0h1v6h-1zm-422 1h1v3h-1zm376 0h1v3h-1zm35 0h4v1h-4zm4 1h5v1h-5zm-445 1h1v4h-1zm436 0h1v4h-1zm14 0h2v1h-2zm-419 1h1v3h-1zm374 0h1v3h-1zm-420 2h1v4h-1zm13 0h2v1h-2zm453 0h1v4h-1zm-512 1h1v5h-1zm56 0h3v1h-3zm6 0h1v4h-1zm31 0h1v3h-1zm372 0h1v3h-1zm31 0h1v4h-1zm62 0h1v5h-1zm-506 1h4v1h-4zm-3 1h3v1h-3zm-2 1h1v5h-1zm1 0h1v1h-1zm46 0h1v4h-1zm370 0h1v4h-1zm47 0h1v5h-1zm-448 1h1v4h-1zm432 0h1v4h-1zm-494 1h1v5h-1zm556 0h1v5h-1zm-462 2h1v3h-1zm368 0h1v3h-1zm-415 1h1v4h-1zm16 0h1v3h-1zm430 0h1v3h-1zm16 0h1v4h-1zm-508 2h1v4h-1zm94 0h1v3h-1zm366 0h1v3h-1zm94 0h1v4h-1zm-491 1h1v4h-1zm428 0h1v4h-1zm-444 1h1v4h-1zm445 0h2v1h-2zm15 0h1v4h-1zm-412 1h1v3h-1zm364 0h1v3h-1zm35 0h3v1h-3zm-493 1h1v4h-1zm496 0h4v1h-4zm56 0h1v4h-1zm-489 1h1v4h-1zm426 0h1v4h-1zm11 0h3v1h-3zm-453 1h1v2h-1zm48 0h1v3h-1zm362 0h1v3h-1zm46 0h3v1h-3zm2 1h1v1h-1zm-504 1h1v3h-1zm47 0h1v3h-1zm14 0h1v1h-1zm442 0h1v3h-1zm47 0h1v3h-1zm-491 1h2v1h-2zm4 0h1v2h-1zm32 0h1v3h-1zm360 0h1v3h-1zm32 0h1v2h-1zm-431 1h3v1h-3zm-55 1h1v4h-1zm47 0h1v3h-1zm5 0h3v1h-3zm11 0h1v2h-1zm422 0h1v2h-1zm16 0h1v3h-1zm47 0h1v4h-1zm-498 1h2v1h-2zm45 0h1v2h-1zm358 0h1v2h-1zm-405 1h1v5h-1zm1 0h1v1h-1zm15 0h1v3h-1zm420 0h1v3h-1zm-388 1h1v2h-1zm356 0h1v2h-1zm48 0h1v4h-1zm-499 1h1v3h-1zm546 0h1v3h-1zm-482 1h1v4h-1zm32 0h1v2h-1zm354 0h1v2h-1zm32 0h1v4h-1zm-388 1h2v1h-2zm-93 1h1v3h-1zm47 0h1v3h-1zm44 0h2v1h-2zm5 0h1v2h-1zm352 0h1v2h-1zm49 0h1v3h-1zm47 0h1v3h-1zm-455 1h2v1h-2zm-25 1h1v4h-1zm22 0h3v1h-3zm11 0h1v2h-1zm350 0h1v2h-1zm33 0h1v4h-1zm-479 1h1v3h-1zm47 0h1v2h-1zm36 0h2v1h-2zm397 0h2v1h-2zm15 0h1v2h-1zm47 0h1v3h-1zm-462 1h3v1h-3zm17 0h1v2h-1zm348 0h1v2h-1zm37 0h2v1h-2zm-434 1h1v3h-1zm30 0h2v1h-2zm406 0h3v1h-3zm10 0h1v3h-1zm-493 1h1v3h-1zm63 0h1v2h-1zm12 0h2v1h-2zm22 0h1v2h-1zm346 0h1v2h-1zm34 0h1v2h-1zm9 0h3v1h-3zm54 0h1v3h-1zm-468 1h3v1h-3zm417 0h2v1h-2zm-441 1h1v2h-1zm16 0h1v2h-1zm6 0h2v1h-2zm28 0h1v2h-1zm344 0h1v2h-1zm34 0h1v2h-1zm15 0h2v1h-2zm-490 1h1v3h-1zm62 0h1v1h-1zm5 0h2v1h-2zm424 0h1v1h-1zm47 0h1v3h-1zm-490 1h1v2h-1zm12 0h2v1h-2zm4 0h3v1h-3zm34 0h1v2h-1zm342 0h1v2h-1zm34 0h1v2h-1zm16 0h1v2h-1zm-433 1h3v1h-3zm7 0h1v1h-1zm-63 1h1v4h-1zm48 0h1v2h-1zm5 0h3v1h-3zm11 0h1v2h-1zm34 0h1v2h-1zm340 0h1v2h-1zm34 0h1v2h-1zm16 0h1v2h-1zm48 0h1v4h-1zm-485 1h2v1h-2zm-2 1h2v1h-2zm16 0h1v2h-1zm34 0h1v2h-1zm338 0h1v2h-1zm34 0h1v2h-1zm16 0h1v2h-1zm-438 1h1v1h-1zm-48 1h1v3h-1zm49 0h1v3h-1zm16 0h1v2h-1zm34 0h1v2h-1zm336 0h1v2h-1zm34 0h1v2h-1zm16 0h1v3h-1zm49 0h1v3h-1zm-468 2h1v2h-1zm34 0h1v2h-1zm334 0h1v2h-1zm34 0h1v2h-1zm-467 1h1v2h-1zm49 0h1v2h-1zm434 0h1v2h-1zm49 0h1v2h-1zm-466 1h1v2h-1zm34 0h1v1h-1zm332 0h1v1h-1zm34 0h1v2h-1zm-465 1h1v2h-1zm49 0h1v2h-1zm51 0h1v2h-1zm330 0h1v2h-1zm36 0h1v1h-1zm15 0h1v2h-1zm49 0h1v2h-1zm-464 1h1v2h-1zm398 0h1v2h-1zm3 0h2v1h-2zm-466 1h1v2h-1zm49 0h1v2h-1zm51 0h1v1h-1zm368 0h2v1h-2zm11 0h1v2h-1zm49 0h1v2h-1zm-462 1h1v3h-1zm35 0h1v2h-1zm326 0h1v2h-1zm2 0h1v1h-1zm33 0h1v2h-1zm8 0h2v1h-2zm-469 1h1v3h-1zm49 0h1v2h-1zm380 0h2v1h-2zm42 0h2v1h-2zm6 0h1v2h-1zm49 0h1v3h-1zm-460 1h1v2h-1zm35 0h1v2h-1zm324 0h1v2h-1zm6 0h1v1h-1zm29 0h1v2h-1zm13 0h2v1h-2zm-423 1h1v2h-1zm13 0h2v1h-2zm369 0h2v1h-2zm43 0h2v1h-2zm-474 1h1v2h-1zm60 0h2v1h-2zm6 0h1v2h-1zm35 0h1v1h-1zm322 0h1v1h-1zm10 0h2v1h-2zm25 0h1v2h-1zm17 0h1v1h-1zm49 0h1v2h-1zm-474 1h1v2h-1zm8 0h2v1h-2zm44 0h1v2h-1zm320 0h1v2h-1zm13 0h1v1h-1zm39 0h1v2h-1zm-473 1h1v2h-1zm56 0h1v1h-1zm10 0h1v2h-1zm369 0h2v1h-2zm21 0h1v2h-1zm66 0h1v2h-1zm-472 1h1v2h-1zm4 0h2v1h-2zm48 0h1v1h-1zm318 0h1v1h-1zm17 0h1v1h-1zm35 0h1v2h-1zm-471 1h1v2h-1zm51 0h2v1h-2zm15 0h1v1h-1zm36 0h1v2h-1zm316 0h1v2h-1zm19 0h2v1h-2zm17 0h1v1h-1zm66 0h1v2h-1zm-470 1h1v2h-1zm17 0h1v2h-1zm372 0h2v1h-2zm14 0h1v2h-1zm17 0h1v2h-1zm-469 1h1v3h-1zm48 0h1v1h-1zm54 0h1v1h-1zm314 0h1v1h-1zm24 0h1v1h-1zm78 0h1v3h-1zm-472 1h2v1h-2zm4 0h1v2h-1zm17 0h1v1h-1zm36 0h1v1h-1zm312 0h1v1h-1zm26 0h2v1h-2zm10 0h1v1h-1zm17 0h1v2h-1zm-424 1h2v1h-2zm24 0h1v2h-1zm36 0h1v2h-1zm310 0h1v2h-1zm29 0h1v1h-1zm7 0h1v3h-1zm-449 1h1v2h-1zm41 0h2v1h-2zm9 0h1v2h-1zm393 0h2v1h-2zm23 0h1v2h-1zm50 0h1v2h-1zm-477 1h2v1h-2zm29 0h1v1h-1zm36 0h1v1h-1zm308 0h1v1h-1zm33 0h2v1h-2zm3 0h1v1h-1zm-447 1h1v2h-1zm36 0h2v1h-2zm14 0h1v1h-1zm18 0h1v2h-1zm36 0h1v1h-1zm306 0h1v1h-1zm36 0h1v2h-1zm3 0h2v1h-2zm15 0h1v1h-1zm50 0h1v2h-1zm-480 1h2v1h-2zm17 0h1v2h-1zm54 0h1v1h-1zm304 0h1v1h-1zm42 0h2v1h-2zm12 0h1v2h-1zm-462 1h1v2h-1zm31 0h2v1h-2zm37 0h1v3h-1zm37 0h1v1h-1zm302 0h1v1h-1zm37 0h1v2h-1zm8 0h1v1h-1zm60 0h1v2h-1zm-483 1h2v1h-2zm22 0h1v2h-1zm55 0h1v2h-1zm300 0h1v2h-1zm47 0h2v1h-2zm8 0h1v2h-1zm-460 1h1v3h-1zm26 0h2v1h-2zm42 0h1v2h-1zm374 0h1v2h-1zm12 0h2v1h-2zm56 0h1v3h-1zm-485 1h1v1h-1zm26 0h1v2h-1zm14 0h2v1h-2zm41 0h1v1h-1zm298 0h1v1h-1zm52 0h2v1h-2zm3 0h1v3h-1zm-436 1h2v1h-2zm41 0h1v1h-1zm5 0h1v1h-1zm38 0h1v1h-1zm296 0h1v1h-1zm38 0h1v1h-1zm17 0h1v2h-1zm-457 1h1v2h-1zm20 0h2v1h-2zm31 0h1v1h-1zm11 0h1v1h-1zm7 0h1v1h-1zm38 0h1v1h-1zm294 0h1v1h-1zm38 0h1v1h-1zm69 0h1v2h-1zm-490 1h2v1h-2zm34 0h1v2h-1zm8 0h2v1h-2zm10 0h1v1h-1zm38 0h1v2h-1zm292 0h1v2h-1zm38 0h1v1h-1zm18 0h1v2h-1zm3 0h2v1h-2zm-458 1h1v2h-1zm15 0h2v1h-2zm43 0h1v1h-1zm12 0h1v2h-1zm366 0h1v2h-1zm24 0h2v1h-2zm46 0h1v2h-1zm-493 1h2v1h-2zm39 0h1v1h-1zm5 0h1v1h-1zm51 0h1v1h-1zm290 0h1v1h-1zm56 0h1v1h-1zm8 0h1v1h-1zm-461 1h1v2h-1zm10 0h2v1h-2zm42 0h1v1h-1zm2 0h2v1h-2zm16 0h1v1h-1zm38 0h1v1h-1zm288 0h1v1h-1zm38 0h1v1h-1zm18 0h1v1h-1zm10 0h2v1h-2zm42 0h1v2h-1zm-496 1h2v1h-2zm45 0h1v2h-1zm18 0h1v1h-1zm38 0h1v1h-1zm286 0h1v1h-1zm38 0h1v1h-1zm18 0h1v2h-1zm13 0h2v1h-2zm-463 1h1v2h-1zm5 0h2v1h-2zm66 0h1v2h-1zm38 0h1v1h-1zm284 0h1v1h-1zm38 0h1v3h-1zm34 0h1v1h-1zm37 0h1v2h-1zm-499 1h2v1h-2zm50 0h1v1h-1zm57 0h1v1h-1zm282 0h1v1h-1zm57 0h1v1h-1zm17 0h2v1h-2zm-465 1h2v1h-2zm53 0h1v2h-1zm18 0h1v1h-1zm39 0h1v1h-1zm280 0h1v1h-1zm39 0h1v1h-1zm18 0h1v2h-1zm20 0h2v1h-2zm33 0h1v2h-1zm-500 1h1v1h-1zm72 0h1v1h-1zm39 0h1v1h-1zm278 0h1v1h-1zm39 0h1v1h-1zm3 0h2v1h-2zm38 0h1v1h-1zm-468 1h1v2h-1zm53 0h1v1h-1zm19 0h1v2h-1zm39 0h1v1h-1zm276 0h1v1h-1zm39 0h1v2h-1zm6 0h1v1h-1zm13 0h1v1h-1zm24 0h2v1h-2zm29 0h1v2h-1zm-444 1h1v1h-1zm58 0h1v1h-1zm274 0h1v1h-1zm47 0h1v1h-1zm11 0h1v1h-1zm27 0h2v1h-2zm-470 1h1v2h-1zm54 0h1v2h-1zm18 0h1v2h-1zm40 0h1v1h-1zm272 0h1v1h-1zm40 0h1v1h-1zm9 0h2v1h-2zm9 0h1v2h-1zm30 0h2v1h-2zm24 0h1v2h-1zm-423 1h1v1h-1zm40 0h1v1h-1zm270 0h1v1h-1zm40 0h1v1h-1zm12 0h1v1h-1zm39 0h1v1h-1zm-473 1h1v2h-1zm54 0h1v1h-1zm16 0h1v1h-1zm3 0h1v1h-1zm40 0h1v1h-1zm268 0h1v1h-1zm40 0h1v1h-1zm14 0h1v1h-1zm5 0h1v1h-1zm34 0h2v1h-2zm20 0h1v2h-1zm-439 1h1v2h-1zm13 0h2v1h-2zm6 0h1v2h-1zm40 0h1v1h-1zm266 0h1v1h-1zm40 0h1v2h-1zm16 0h2v1h-2zm3 0h1v2h-1zm37 0h2v1h-2zm-475 1h1v1h-1zm66 0h1v1h-1zm48 0h1v1h-1zm264 0h1v1h-1zm59 0h1v2h-1zm40 0h1v1h-1zm15 0h1v1h-1zm-491 1h1v2h-1zm54 0h1v1h-1zm10 0h1v1h-1zm9 0h1v1h-1zm41 0h1v1h-1zm262 0h1v1h-1zm41 0h1v1h-1zm60 0h2v1h-2zm13 0h1v2h-1zm-435 1h1v1h-1zm8 0h1v1h-1zm11 0h1v1h-1zm41 0h1v1h-1zm260 0h1v1h-1zm41 0h1v1h-1zm19 0h1v1h-1zm44 0h2v1h-2zm-478 1h1v1h-1zm55 0h1v2h-1zm6 0h1v1h-1zm13 0h1v1h-1zm41 0h1v1h-1zm258 0h1v1h-1zm41 0h1v1h-1zm19 0h1v2h-1zm47 0h1v1h-1zm8 0h1v1h-1zm-487 1h1v2h-1zm58 0h2v1h-2zm16 0h1v1h-1zm41 0h2v1h-2zm255 0h2v1h-2zm42 0h1v1h-1zm68 0h2v1h-2zm6 0h1v2h-1zm-431 1h1v1h-1zm2 0h1v1h-1zm18 0h1v2h-1zm42 0h1v1h-1zm252 0h1v1h-1zm42 0h1v3h-1zm20 0h1v1h-1zm51 0h2v1h-2zm-481 1h1v2h-1zm55 0h1v1h-1zm60 0h1v1h-1zm2 0h1v1h-1zm250 0h1v1h-1zm62 0h1v1h-1zm54 0h2v1h-2zm-427 1h1v1h-1zm19 0h1v1h-1zm39 0h1v1h-1zm4 0h1v1h-1zm248 0h1v1h-1zm43 0h1v1h-1zm19 0h1v1h-1zm56 0h1v1h-1zm-483 1h1v1h-1zm56 0h1v2h-1zm19 0h1v1h-1zm37 0h1v2h-1zm6 0h1v1h-1zm245 0h2v1h-2zm44 0h1v1h-1zm3 0h1v1h-1zm16 0h1v2h-1zm56 0h1v1h-1zm-481 1h1v2h-1zm75 0h1v1h-1zm43 0h2v1h-2zm243 0h1v1h-1zm44 0h1v1h-1zm5 0h1v1h-1zm70 0h1v2h-1zm-424 1h1v1h-1zm20 0h1v1h-1zm34 0h1v1h-1zm10 0h1v1h-1zm240 0h1v1h-1zm44 0h1v1h-1zm7 0h1v1h-1zm13 0h1v1h-1zm-423 1h1v1h-1zm56 0h1v1h-1zm20 0h1v2h-1zm32 0h1v1h-1zm12 0h1v1h-1zm238 0h1v1h-1zm44 0h1v1h-1zm9 0h1v1h-1zm11 0h1v1h-1zm56 0h1v1h-1zm-477 1h1v2h-1zm56 0h1v1h-1zm20 0h1v1h-1zm30 0h1v1h-1zm14 0h1v1h-1zm236 0h1v1h-1zm44 0h1v1h-1zm11 0h2v1h-2zm9 0h1v1h-1zm56 0h1v2h-1zm-419 1h1v1h-1zm17 0h1v1h-1zm3 0h1v1h-1zm28 0h1v1h-1zm16 0h2v1h-2zm233 0h2v1h-2zm45 0h1v1h-1zm14 0h1v1h-1zm6 0h1v1h-1zm-418 1h1v1h-1zm57 0h1v2h-1zm15 0h1v1h-1zm5 0h1v1h-1zm26 0h1v2h-1zm19 0h1v1h-1zm230 0h1v1h-1zm45 0h1v1h-1zm16 0h1v1h-1zm4 0h1v2h-1zm57 0h1v1h-1zm-473 1h1v2h-1zm70 0h1v1h-1zm7 0h1v1h-1zm45 0h1v1h-1zm228 0h1v1h-1zm45 0h1v1h-1zm18 0h1v1h-1zm59 0h1v2h-1zm-415 1h1v1h-1zm11 0h2v1h-2zm10 0h1v1h-1zm23 0h1v1h-1zm22 0h2v1h-2zm225 0h2v1h-2zm46 0h1v1h-1zm20 0h2v1h-2zm-413 1h1v1h-1zm57 0h1v1h-1zm9 0h1v1h-1zm12 0h1v1h-1zm21 0h1v1h-1zm25 0h1v1h-1zm222 0h1v1h-1zm46 0h1v1h-1zm21 0h1v1h-1zm57 0h1v1h-1zm-469 1h1v2h-1zm57 0h1v1h-1zm7 0h1v1h-1zm14 0h1v1h-1zm19 0h1v1h-1zm27 0h2v1h-2zm219 0h2v1h-2zm47 0h1v1h-1zm21 0h1v1h-1zm57 0h1v2h-1zm-410 1h1v1h-1zm5 0h1v1h-1zm16 0h1v1h-1zm17 0h1v2h-1zm30 0h1v1h-1zm216 0h1v1h-1zm47 0h1v1h-1zm21 0h1v1h-1zm-409 1h1v1h-1zm58 0h1v1h-1zm3 0h1v1h-1zm18 0h1v1h-1zm47 0h2v1h-2zm213 0h2v1h-2zm48 0h1v2h-1zm21 0h1v1h-1zm58 0h1v1h-1zm-465 1h1v2h-1zm58 0h2v1h-2zm21 0h1v1h-1zm14 0h1v1h-1zm34 0h2v1h-2zm209 0h2v1h-2zm49 0h1v1h-1zm21 0h1v2h-1zm58 0h1v2h-1zm-406 1h1v1h-1zm22 0h1v1h-1zm12 0h1v1h-1zm37 0h1v1h-1zm206 0h1v1h-1zm49 0h1v1h-1zm3 0h1v1h-1zm-386 1h1v2h-1zm58 0h1v1h-1zm22 0h1v1h-1zm10 0h1v1h-1zm39 0h2v1h-2zm203 0h2v1h-2zm50 0h1v1h-1zm5 0h1v1h-1zm17 0h1v1h-1zm58 0h1v2h-1zm-403 1h1v1h-1zm22 0h1v1h-1zm8 0h1v1h-1zm42 0h1v1h-1zm200 0h1v1h-1zm50 0h1v1h-1zm7 0h1v1h-1zm15 0h1v1h-1zm-402 1h1v1h-1zm59 0h1v1h-1zm22 0h1v2h-1zm6 0h1v2h-1zm44 0h2v1h-2zm197 0h2v1h-2zm51 0h1v1h-1zm9 0h1v1h-1zm13 0h1v1h-1zm59 0h1v1h-1zm-459 1h1v1h-1zm59 0h1v1h-1zm22 0h1v1h-1zm51 0h1v1h-1zm193 0h2v1h-2zm51 0h2v1h-2zm12 0h1v2h-1zm11 0h1v1h-1zm59 0h1v1h-1zm-457 1h1v2h-1zm59 0h1v1h-1zm19 0h1v1h-1zm3 0h2v1h-2zm3 0h1v1h-1zm48 0h2v1h-2zm190 0h2v1h-2zm52 0h1v1h-1zm23 0h1v1h-1zm59 0h1v2h-1zm-396 1h1v1h-1zm17 0h1v1h-1zm6 0h1v1h-1zm51 0h2v1h-2zm186 0h2v1h-2zm53 0h1v1h-1zm15 0h1v1h-1zm8 0h1v1h-1zm-395 1h1v1h-1zm60 0h1v1h-1zm15 0h1v1h-1zm8 0h1v1h-1zm52 0h2v1h-2zm182 0h2v1h-2zm54 0h1v1h-1zm17 0h1v1h-1zm6 0h1v1h-1zm60 0h1v1h-1zm-453 1h1v1h-1zm60 0h1v1h-1zm13 0h1v1h-1zm10 0h1v1h-1zm53 0h2v1h-2zm178 0h2v1h-2zm55 0h1v1h-1zm19 0h1v1h-1zm4 0h1v1h-1zm60 0h1v1h-1zm-451 1h1v2h-1zm60 0h1v1h-1zm11 0h1v2h-1zm12 0h1v1h-1zm54 0h2v1h-2zm174 0h2v1h-2zm55 0h2v1h-2zm22 0h1v2h-1zm2 0h1v1h-1zm60 0h1v2h-1zm-389 1h1v1h-1zm23 0h2v1h-2zm55 0h2v1h-2zm170 0h2v1h-2zm56 0h1v1h-1zm24 0h1v1h-1zm-388 1h1v1h-1zm61 0h2v1h-2zm8 0h1v1h-1zm16 0h1v1h-1zm55 0h2v1h-2zm166 0h2v1h-2zm57 0h1v2h-1zm23 0h1v1h-1zm62 0h1v1h-1zm-447 1h1v1h-1zm62 0h1v1h-1zm5 0h1v1h-1zm18 0h1v1h-1zm56 0h2v1h-2zm162 0h2v1h-2zm58 0h1v1h-1zm23 0h1v1h-1zm62 0h1v1h-1zm-445 1h1v1h-1zm62 0h1v1h-1zm3 0h1v1h-1zm20 0h2v1h-2zm57 0h3v1h-3zm158 0h2v1h-2zm58 0h2v1h-2zm4 0h1v1h-1zm20 0h1v1h-1zm62 0h1v1h-1zm-443 1h1v1h-1zm62 0h2v1h-2zm24 0h1v1h-1zm58 0h2v1h-2zm153 0h2v1h-2zm59 0h1v1h-1zm6 0h1v2h-1zm18 0h1v1h-1zm62 0h1v1h-1zm-441 1h1v1h-1zm62 0h1v1h-1zm24 0h1v2h-1zm59 0h2v1h-2zm149 0h2v1h-2zm60 0h1v1h-1zm24 0h1v1h-1zm62 0h1v1h-1zm-439 1h1v1h-1zm62 0h2v1h-2zm24 0h2v1h-2zm60 0h3v1h-3zm144 0h3v1h-3zm4 0h1v1h-1zm57 0h2v1h-2zm10 0h1v1h-1zm14 0h2v1h-2zm63 0h1v1h-1zm-437 1h1v1h-1zm63 0h1v1h-1zm20 0h1v2h-1zm4 0h1v1h-1zm61 0h3v1h-3zm138 0h3v1h-3zm8 0h1v2h-1zm55 0h1v1h-1zm12 0h1v1h-1zm12 0h1v1h-1zm63 0h1v1h-1zm-435 1h1v1h-1zm63 0h1v1h-1zm24 0h1v1h-1zm63 0h3v1h-3zm132 0h3v1h-3zm65 0h1v1h-1zm14 0h1v1h-1zm10 0h1v1h-1zm63 0h1v1h-1zm-433 1h1v1h-1zm63 0h1v1h-1zm17 0h1v1h-1zm7 0h1v1h-1zm65 0h3v1h-3zm126 0h3v1h-3zm15 0h1v3h-1zm51 0h2v1h-2zm17 0h1v1h-1zm8 0h1v1h-1zm63 0h1v1h-1zm-431 1h1v2h-1zm63 0h1v1h-1zm15 0h1v1h-1zm9 0h2v1h-2zm67 0h3v1h-3zm120 0h3v1h-3zm68 0h1v1h-1zm19 0h1v2h-1zm6 0h1v1h-1zm63 0h1v2h-1zm-366 1h1v1h-1zm13 0h1v2h-1zm12 0h1v1h-1zm68 0h4v1h-4zm113 0h4v1h-4zm71 0h1v1h-1zm24 0h2v1h-2zm-364 1h1v1h-1zm64 0h2v1h-2zm25 0h1v1h-1zm71 0h3v1h-3zm106 0h3v1h-3zm26 0h1v2h-1zm47 0h1v1h-1zm22 0h1v1h-1zm2 0h1v1h-1zm65 0h1v1h-1zm-427 1h1v1h-1zm65 0h1v1h-1zm9 0h1v1h-1zm15 0h2v1h-2zm73 0h3v1h-3zm100 0h3v1h-3zm74 0h2v1h-2zm25 0h1v1h-1zm65 0h1v1h-1zm-425 1h1v2h-1zm65 0h1v1h-1zm7 0h1v1h-1zm18 0h2v1h-2zm74 0h3v1h-3zm94 0h3v1h-3zm33 0h1v3h-1zm42 0h3v1h-3zm26 0h1v1h-1zm65 0h1v2h-1zm-358 1h2v1h-2zm5 0h1v2h-1zm21 0h2v1h-2zm75 0h4v1h-4zm87 0h4v1h-4zm77 0h2v1h-2zm5 0h1v2h-1zm21 0h2v1h-2zm-356 1h1v1h-1zm67 0h1v1h-1zm26 0h1v2h-1zm77 0h5v1h-5zm78 0h5v1h-5zm81 0h1v1h-1zm26 0h1v1h-1zm67 0h1v1h-1zm-421 1h1v1h-1zm67 0h2v1h-2zm26 0h2v1h-2zm80 0h7v1h-7zm67 0h7v1h-7zm50 0h1v2h-1zm36 0h2v1h-2zm9 0h1v1h-1zm18 0h1v1h-1zm67 0h1v1h-1zm-419 1h1v1h-1zm67 0h2v1h-2zm23 0h1v2h-1zm4 0h1v1h-1zm78 0h1v2h-1zm7 0h7v1h-7zm54 0h6v1h-6zm91 0h1v1h-1zm11 0h1v1h-1zm15 0h2v1h-2zm68 0h1v1h-1zm-417 1h1v1h-1zm68 0h1v1h-1zm26 0h2v1h-2zm91 0h7v1h-7zm40 0h7v1h-7zm64 0h1v2h-1zm32 0h2v1h-2zm14 0h1v2h-1zm13 0h1v1h-1zm68 0h1v1h-1zm-415 1h1v1h-1zm68 0h2v1h-2zm19 0h1v2h-1zm8 0h1v1h-1zm74 0h1v6h-1zm22 0h33v1h-33zm128 0h1v1h-1zm26 0h2v1h-2zm69 0h1v1h-1zm-413 1h1v1h-1zm69 0h1v1h-1zm26 0h2v1h-2zm193 0h1v3h-1zm28 0h2v1h-2zm18 0h1v1h-1zm9 0h1v1h-1zm69 0h1v1h-1zm-411 1h1v1h-1zm69 0h1v1h-1zm15 0h1v1h-1zm12 0h2v1h-2zm217 0h2v1h-2zm21 0h1v1h-1zm7 0h1v1h-1zm69 0h1v1h-1zm-409 1h1v1h-1zm69 0h2v1h-2zm13 0h1v2h-1zm15 0h2v1h-2zm213 0h2v1h-2zm24 0h1v2h-1zm4 0h2v1h-2zm70 0h1v1h-1zm-407 1h1v1h-1zm70 0h1v1h-1zm28 0h2v1h-2zm188 0h1v2h-1zm21 0h3v1h-3zm29 0h1v1h-1zm70 0h1v1h-1zm-405 1h1v1h-1zm70 0h2v1h-2zm9 0h1v2h-1zm20 0h2v1h-2zm205 0h2v1h-2zm5 0h1v2h-1zm24 0h2v1h-2zm71 0h1v1h-1zm-403 1h1v1h-1zm71 0h1v1h-1zm29 0h2v1h-2zm62 0h1v5h-1zm123 0h1v3h-1zm16 0h2v1h-2zm30 0h1v1h-1zm71 0h1v1h-1zm-401 1h1v1h-1zm71 0h1v1h-1zm5 0h1v2h-1zm23 0h1v1h-1zm2 0h2v1h-2zm197 0h2v1h-2zm10 0h1v2h-1zm21 0h1v1h-1zm71 0h1v1h-1zm-399 1h1v1h-1zm71 0h2v1h-2zm26 0h1v2h-1zm5 0h2v1h-2zm193 0h2v1h-2zm31 0h2v1h-2zm72 0h1v1h-1zm-397 1h1v1h-1zm72 0h2v1h-2zm31 0h2v1h-2zm180 0h1v2h-1zm9 0h2v1h-2zm15 0h1v1h-1zm17 0h1v1h-1zm72 0h1v1h-1zm-395 1h1v1h-1zm71 0h3v1h-3zm23 0h1v2h-1zm10 0h2v1h-2zm185 0h2v1h-2zm18 0h1v2h-1zm14 0h2v1h-2zm73 0h1v1h-1zm-393 1h1v1h-1zm69 0h1v2h-1zm4 0h2v1h-2zm32 0h2v1h-2zm51 0h1v6h-1zm126 0h1v3h-1zm4 0h2v1h-2zm32 0h2v1h-2zm74 0h1v1h-1zm-391 1h1v1h-1zm74 0h2v1h-2zm17 0h1v2h-1zm15 0h2v1h-2zm177 0h2v1h-2zm23 0h1v2h-1zm9 0h2v1h-2zm75 0h1v1h-1zm-389 1h1v1h-1zm66 0h1v2h-1zm9 0h1v1h-1zm32 0h2v1h-2zm174 0h1v1h-1zm2 0h1v1h-1zm30 0h1v1h-1zm75 0h1v1h-1zm-387 1h1v1h-1zm75 0h2v1h-2zm13 0h1v2h-1zm20 0h3v1h-3zm167 0h4v1h-4zm8 0h1v2h-1zm22 0h1v2h-1zm5 0h2v1h-2zm76 0h1v1h-1zm-385 1h1v1h-1zm63 0h1v1h-1zm13 0h2v1h-2zm33 0h5v1h-5zm161 0h4v1h-4zm37 0h2v1h-2zm77 0h1v1h-1zm-383 1h1v1h-1zm61 0h1v2h-1zm16 0h2v1h-2zm8 0h1v2h-1zm23 0h1v1h-1zm5 0h4v1h-4zm153 0h3v1h-3zm16 0h1v3h-1zm22 0h2v1h-2zm78 0h1v1h-1zm-381 1h1v1h-1zm78 0h1v1h-1zm28 0h1v2h-1zm10 0h2v1h-2zm33 0h1v6h-1zm114 0h2v1h-2zm38 0h2v1h-2zm3 0h1v1h-1zm76 0h1v1h-1zm-379 1h1v1h-1zm58 0h1v2h-1zm20 0h2v1h-2zm4 0h1v3h-1zm35 0h2v1h-2zm143 0h2v1h-2zm38 0h2v1h-2zm6 0h1v2h-1zm73 0h2v1h-2zm-376 1h2v1h-2zm79 0h2v1h-2zm24 0h1v3h-1zm15 0h3v1h-3zm137 0h4v1h-4zm25 0h1v3h-1zm15 0h2v1h-2zm80 0h1v1h-1zm-373 1h1v1h-1zm54 0h1v1h-1zm26 0h1v1h-1zm39 0h4v1h-4zm130 0h4v1h-4zm7 0h1v1h-1zm35 0h2v1h-2zm11 0h1v2h-1zm70 0h1v1h-1zm-371 1h1v1h-1zm52 0h1v2h-1zm28 0h3v1h-3zm41 0h5v1h-5zm124 0h3v1h-3zm11 0h1v2h-1zm32 0h2v1h-2zm81 0h2v1h-2zm-368 1h2v1h-2zm82 0h2v1h-2zm16 0h1v3h-1zm22 0h1v1h-1zm5 0h4v1h-4zm115 0h4v1h-4zm37 0h1v2h-1zm8 0h2v1h-2zm16 0h1v2h-1zm66 0h1v1h-1zm-365 1h1v1h-1zm48 0h1v2h-1zm34 0h2v1h-2zm35 0h1v3h-1zm10 0h3v1h-3zm13 0h1v4h-1zm94 0h4v1h-4zm20 0h1v3h-1zm27 0h2v1h-2zm83 0h1v1h-1zm-363 1h1v1h-1zm83 0h2v1h-2zm46 0h4v1h-4zm100 0h4v1h-4zm46 0h1v2h-1zm2 0h3v1h-3zm22 0h1v2h-1zm63 0h1v1h-1zm-361 1h1v1h-1zm45 0h1v1h-1zm39 0h2v1h-2zm9 0h1v2h-1zm39 0h4v1h-4zm92 0h4v1h-4zm7 0h1v2h-1zm44 0h1v1h-1zm85 0h1v1h-1zm-359 1h1v1h-1zm43 0h1v2h-1zm42 0h2v1h-2zm28 0h1v4h-1zm21 0h3v1h-3zm4 0h1v1h-1zm81 0h4v1h-4zm33 0h1v3h-1zm19 0h2v1h-2zm27 0h1v2h-1zm60 0h1v1h-1zm-357 1h1v1h-1zm86 0h2v1h-2zm4 0h1v2h-1zm43 0h1v2h-1zm5 0h6v1h-6zm75 0h5v1h-5zm17 0h1v3h-1zm38 0h2v1h-2zm88 0h1v1h-1zm-355 1h1v1h-1zm40 0h1v2h-1zm47 0h2v1h-2zm56 0h7v1h-7zm61 0h8v1h-8zm61 0h2v1h-2zm32 0h1v2h-1zm57 0h1v1h-1zm-353 1h1v1h-1zm89 0h2v1h-2zm41 0h1v4h-1zm19 0h16v1h-16zm38 0h16v1h-16zm21 0h1v3h-1zm42 0h1v2h-1zm11 0h3v1h-3zm91 0h1v1h-1zm-351 1h1v1h-1zm37 0h1v2h-1zm53 0h3v1h-3zm18 0h1v3h-1zm41 0h1v6h-1zm15 0h22v1h-22zm24 0h1v15h-1zm40 0h1v4h-1zm30 0h2v1h-2zm38 0h1v2h-1zm54 0h1v1h-1zm-349 1h1v1h-1zm92 0h3v1h-3zm76 0h1v26h-1zm81 0h1v3h-1zm5 0h3v1h-3zm93 0h2v1h-2zm-346 1h2v1h-2zm34 0h1v1h-1zm60 0h4v1h-4zm112 0h1v7h-1zm43 0h4v1h-4zm46 0h1v2h-1zm50 0h1v1h-1zm-343 1h1v1h-1zm31 0h1v2h-1zm65 0h3v1h-3zm7 0h1v3h-1zm21 0h1v5h-1zm120 0h2v1h-2zm98 0h1v1h-1zm-341 1h1v1h-1zm98 0h2v1h-2zm126 0h1v3h-1zm16 0h3v1h-3zm53 0h1v2h-1zm46 0h2v1h-2zm-338 1h2v1h-2zm28 0h1v2h-1zm71 0h2v1h-2zm138 0h2v1h-2zm100 0h1v1h-1zm-335 1h1v1h-1zm100 0h4v1h-4zm40 0h1v9h-1zm91 0h4v1h-4zm60 0h1v1h-1zm43 0h1v1h-1zm-333 1h2v1h-2zm24 0h1v1h-1zm79 0h4v1h-4zm118 0h1v2h-1zm5 0h4v1h-4zm65 0h1v2h-1zm40 0h2v1h-2zm-329 1h1v1h-1zm21 0h1v2h-1zm84 0h4v1h-4zm11 0h1v3h-1zm104 0h4v1h-4zm107 0h2v1h-2zm-326 1h2v1h-2zm108 0h4v1h-4zm89 0h1v5h-1zm17 0h4v1h-4zm75 0h1v2h-1zm36 0h1v1h-1zm-323 1h2v1h-2zm17 0h1v2h-1zm93 0h3v1h-3zm4 0h2v1h-2zm92 0h6v1h-6zm115 0h2v1h-2zm-319 1h1v1h-1zm114 0h6v1h-6zm84 0h6v1h-6zm88 0h1v2h-1zm32 0h1v1h-1zm-317 1h2v1h-2zm13 0h1v1h-1zm106 0h4v1h-4zm74 0h4v1h-4zm122 0h2v1h-2zm-313 1h1v1h-1zm10 0h1v2h-1zm111 0h6v1h-6zm64 0h5v1h-5zm99 0h1v2h-1zm28 0h1v1h-1zm-311 1h2v1h-2zm126 0h2v1h-2zm3 0h14v1h-14zm38 0h1v1h-1zm2 0h15v1h-15zm140 0h2v1h-2zm-307 1h1v1h-1zm6 0h1v2h-1zm135 0h6v1h-6zm7 0h17v1h-17zm134 0h1v2h-1zm24 0h1v1h-1zm-305 1h2v1h-2zm303 0h2v1h-2zm-301 1h1v1h-1zm2 0h1v2h-1zm278 0h1v2h-1zm20 0h1v1h-1zm-299 1h1v1h-1zm297 0h2v1h-2zm-295 1h1v1h-1zm278 0h1v2h-1zm15 0h2v1h-2zm-292 1h2v1h-2zm291 0h1v1h-1zm-289 1h2v1h-2zm276 0h1v2h-1zm11 0h2v1h-2zm-285 1h1v1h-1zm284 0h1v1h-1zm-283 1h2v1h-2zm274 0h1v2h-1zm7 0h2v1h-2zm-279 1h2v1h-2zm277 0h2v1h-2zm-275 1h2v1h-2zm271 0h1v2h-1zm2 0h2v1h-2zm-271 1h2v1h-2zm270 0h1v1h-1zm-268 1h2v1h-2zm126 0h1v22h-1zm139 0h2v1h-2zm-263 1h2v1h-2zm261 0h2v1h-2zm-259 1h2v1h-2zm257 0h2v1h-2zm-255 1h2v1h-2zm253 0h2v1h-2zm-251 1h3v1h-3zm248 0h3v1h-3zm-245 1h2v1h-2zm243 0h2v1h-2zm-241 1h2v1h-2zm239 0h2v1h-2zm-237 1h2v1h-2zm235 0h2v1h-2zm-233 1h3v1h-3zm230 0h3v1h-3zm-227 1h2v1h-2zm225 0h2v1h-2zm-223 1h2v1h-2zm221 0h2v1h-2zm-219 1h2v1h-2zm217 0h2v1h-2zm-215 1h3v1h-3zm212 0h3v1h-3zm-209 1h2v1h-2zm207 0h2v1h-2zm-205 1h2v1h-2zm203 0h2v1h-2zm-201 1h2v1h-2zm199 0h2v1h-2zm-197 1h3v1h-3zm194 0h3v1h-3zm-191 1h3v1h-3zm187 0h4v1h-4zm-184 1h4v1h-4zm181 0h3v1h-3zm-177 1h3v1h-3zm174 0h3v1h-3zm-171 1h3v1h-3zm168 0h3v1h-3zm-165 1h3v1h-3zm162 0h3v1h-3zm-159 1h3v1h-3zm71 0h1v12h-1zm85 0h3v1h-3zm-153 1h3v1h-3zm149 0h4v1h-4zm-146 1h4v1h-4zm143 0h3v1h-3zm-139 1h4v1h-4zm135 0h4v1h-4zm-131 1h4v1h-4zm127 0h4v1h-4zm-123 1h5v1h-5zm118 0h5v1h-5zm-113 1h5v1h-5zm108 0h5v1h-5zm-103 1h7v1h-7zm95 0h8v1h-8zm-88 1h10v1h-10zm78 0h10v1h-10zm-68 1h10v1h-10zm58 0h10v1h-10zm-48 1h10v1h-10zm38 0h10v1h-10zm-28 1h6v1h-6zm7 0h21v1h-21z"/>
<path fill="#f00" d="m233 36h3v1h-3zm10 0h3v1h-3zm-11 1h1v1h-1zm4 0h1v1h-1zm6 0h1v1h-1zm4 0h1v1h-1zm-15 1h1v3h-1zm6 0h1v3h-1zm4 0h1v3h-1zm6 0h1v3h-1zm-15 3h1v1h-1zm6 0h1v4h-1zm2 0h1v4h-1zm6 0h1v1h-1zm-13 1h1v1h-1zm12 0h1v1h-1zm-6 3h1v8h-1zm508 62h3v1h-3zm-2 1h2v1h-2zm5 0h2v1h-2zm-6 1h1v1h-1zm5 0h1v2h-1zm3 0h1v2h-1zm-7 1h2v1h-2zm-1 1h1v2h-1zm3 0h1v2h-1zm3 0h2v1h-2zm-439 1h5v1h-5zm441 0h1v1h-1zm-443 1h2v1h-2zm7 0h2v1h-2zm429 0h2v1h-2zm5 0h2v1h-2zm-442 1h1v1h-1zm10 0h1v1h-1zm429 0h3v1h-3zm-440 1h1v1h-1zm12 0h1v1h-1zm-13 1h1v2h-1zm14 0h1v2h-1zm-15 2h1v5h-1zm16 0h1v5h-1zm-8 2h1v1h-1zm-7 3h1v2h-1zm14 0h1v2h-1zm-13 2h1v1h-1zm12 0h1v1h-1zm-11 1h1v1h-1zm10 0h1v1h-1zm-9 1h2v1h-2zm7 0h2v1h-2zm-5 1h5v1h-5zm436 20h3v1h-3zm-1 1h1v3h-1zm4 0h1v3h-1zm-431 2h1v1h-1zm425 0h2v1h-2zm3 0h1v1h-1zm2 0h1v1h-1zm2 0h2v1h-2zm-7 2h9v1h-9zm-426 4h1v1h-1zm-2 1h1v1h-1zm8 1h2v1h-2zm-10 1h1v1h-1zm9 0h1v1h-1zm5 0h2v1h-2zm-16 1h1v1h-1zm9 0h2v1h-2zm6 0h1v1h-1zm-7 1h1v1h-1zm5 0h2v1h-2zm-15 1h1v2h-1zm8 0h2v1h-2zm6 0h1v1h-1zm-16 1h1v1h-1zm9 0h1v1h-1zm5 0h2v1h-2zm-7 1h2v1h-2zm6 0h1v1h-1zm4 0h1v1h-1zm-19 1h1v2h-1zm8 0h1v1h-1zm5 0h2v1h-2zm-15 1h1v1h-1zm8 0h2v1h-2zm5 0h2v1h-2zm-15 1h1v1h-1zm9 0h1v1h-1zm5 0h1v1h-1zm-7 1h2v1h-2zm5 0h2v1h-2zm14 0h1v1h-1zm-28 1h1v1h-1zm8 0h1v1h-1zm5 0h1v1h-1zm-15 1h1v1h-1zm4 0h1v1h-1zm4 0h2v1h-2zm5 0h2v1h-2zm-6 1h1v1h-1zm5 0h1v1h-1zm-14 1h1v1h-1zm7 0h2v1h-2zm5 0h2v1h-2zm24 0h1v1h-1zm-38 1h1v1h-1zm4 0h1v1h-1zm4 0h1v1h-1zm5 0h1v1h-1zm-7 1h2v1h-2zm5 0h2v1h-2zm-13 1h1v1h-1zm7 0h1v1h-1zm5 0h1v1h-1zm-14 1h1v1h-1zm8 0h1v1h-1zm4 0h2v1h-2zm33 0h1v1h-1zm-47 1h1v1h-1zm6 0h1v1h-1zm2 0h2v1h-2zm5 0h1v1h-1zm-6 1h1v1h-1zm4 0h2v1h-2zm-13 1h1v1h-1zm7 0h2v1h-2zm4 0h2v1h-2zm-13 1h1v1h-1zm6 0h1v2h-1zm2 0h1v1h-1zm4 0h1v1h-1zm43 0h1v1h-1zm-48 1h1v1h-1zm3 0h2v1h-2zm-12 1h1v1h-1zm7 0h1v1h-1zm4 0h1v1h-1zm-13 1h1v1h-1zm7 0h2v1h-2zm4 0h2v1h-2zm-13 1h1v1h-1zm8 0h1v1h-1zm4 0h1v1h-1zm52 0h1v1h-1zm-58 1h2v1h-2zm4 0h2v1h-2zm458 0h1v2h-1zm3 0h1v2h-1zm3 0h1v1h-1zm-476 1h1v1h-1zm7 0h1v1h-1zm4 0h1v1h-1zm458 0h1v2h-1zm3 0h1v2h-1zm3 0h1v2h-1zm-477 1h1v1h-1zm7 0h2v1h-2zm4 0h2v1h-2zm462 0h1v2h-1zm3 0h1v2h-1zm-470 1h1v1h-1zm4 0h1v1h-1zm62 0h1v1h-1zm398 0h1v1h-1zm-472 1h1v1h-1zm6 0h2v1h-2zm4 0h2v1h-2zm-12 1h1v1h-1zm7 0h1v1h-1zm4 0h1v1h-1zm465 0h1v2h-1zm3 0h1v2h-1zm3 0h1v1h-1zm-477 1h2v1h-2zm3 0h3v1h-3zm467 0h1v2h-1zm3 0h1v2h-1zm3 0h1v2h-1zm-483 1h1v1h-1zm6 0h1v1h-1zm4 0h1v1h-1zm71 0h1v1h-1zm398 0h1v2h-1zm3 0h1v2h-1zm-484 1h1v1h-1zm6 0h2v1h-2zm4 0h2v1h-2zm468 0h1v1h-1zm-480 1h1v1h-1zm7 0h1v1h-1zm3 0h2v1h-2zm-5 1h2v1h-2zm4 0h1v1h-1zm-11 1h1v1h-1zm6 0h1v1h-1zm3 0h2v1h-2zm82 0h1v1h-1zm-93 1h1v1h-1zm6 0h2v1h-2zm4 0h1v2h-1zm-5 1h1v1h-1zm3 0h2v1h-2zm-10 1h1v1h-1zm5 0h2v1h-2zm4 0h1v1h-1zm-11 1h1v1h-1zm6 0h1v1h-1zm3 0h2v1h-2zm91 0h1v1h-1zm-96 1h2v1h-2zm4 0h1v1h-1zm2 0h1v1h-1zm-12 1h1v1h-1zm5 0h1v1h-1zm3 0h2v1h-2zm-10 1h1v1h-1zm5 0h2v1h-2zm4 0h1v1h-1zm-11 1h1v1h-1zm6 0h1v1h-1zm3 0h2v1h-2zm101 0h1v1h-1zm-106 1h2v1h-2zm4 0h1v1h-1zm4 0h1v1h-1zm-14 1h1v1h-1zm5 0h1v1h-1zm3 0h2v1h-2zm-10 1h1v1h-1zm5 0h2v1h-2zm3 0h2v1h-2zm-4 1h1v1h-1zm3 0h1v1h-1zm5 0h1v1h-1zm105 0h1v1h-1zm-119 1h1v1h-1zm4 0h2v1h-2zm3 0h2v1h-2zm-9 1h1v1h-1zm5 0h1v1h-1zm3 0h1v1h-1zm-5 1h2v1h-2zm3 0h2v1h-2zm-8 1h1v1h-1zm4 0h1v1h-1zm3 0h1v1h-1zm7 0h1v1h-1zm113 0h1v1h-1zm-129 1h1v1h-1zm4 0h2v1h-2zm3 0h2v1h-2zm-9 1h1v1h-1zm5 0h1v1h-1zm3 0h1v1h-1zm-4 1h1v1h-1zm2 0h2v1h-2zm8 0h1v1h-1zm-16 1h1v1h-1zm4 0h2v1h-2zm3 0h1v1h-1zm129 0h1v1h-1zm-138 1h1v1h-1zm5 0h1v1h-1zm2 0h2v1h-2zm-4 1h2v1h-2zm3 0h1v1h-1zm-8 1h1v1h-1zm4 0h1v1h-1zm2 0h2v1h-2zm10 0h1v1h-1zm-18 1h1v1h-1zm4 0h2v1h-2zm3 0h1v1h-1zm139 0h1v1h-1zm-143 1h1v2h-1zm2 0h2v1h-2zm-7 1h1v1h-1zm3 0h2v1h-2zm3 0h1v1h-1zm10 0h1v1h-1zm-18 1h1v1h-1zm4 0h1v2h-1zm2 0h1v1h-1zm-8 1h1v1h-1zm4 0h2v1h-2zm3 0h1v1h-1zm148 0h1v1h-1zm-152 1h1v2h-1zm2 0h1v1h-1zm-7 1h1v1h-1zm3 0h2v1h-2zm3 0h1v1h-1zm12 0h1v1h-1zm-20 1h1v1h-1zm4 0h1v2h-1zm2 0h1v1h-1zm-4 1h2v1h-2zm3 0h1v1h-1zm158 0h1v1h-1zm-165 1h1v1h-1zm3 0h1v2h-1zm2 0h1v1h-1zm13 0h1v1h-1zm-20 1h1v1h-1zm3 0h2v1h-2zm3 0h1v1h-1zm-4 1h1v2h-1zm2 0h1v1h-1zm-6 1h1v1h-1zm2 0h2v1h-2zm3 0h1v1h-1zm167 0h1v1h-1zm-174 1h1v1h-1zm3 0h1v2h-1zm2 0h1v1h-1zm15 0h1v1h-1zm-22 1h1v1h-1zm3 0h2v1h-2zm3 0h1v1h-1zm-4 1h3v1h-3zm537 0h3v1h-3zm-541 1h1v1h-1zm2 0h3v1h-3zm18 0h1v1h-1zm162 0h1v1h-1zm357 0h2v1h-2zm5 0h2v1h-2zm-546 1h1v1h-1zm3 0h3v1h-3zm538 0h1v1h-1zm6 0h1v1h-1zm-546 1h3v1h-3zm539 0h1v3h-1zm8 0h1v3h-1zm-550 1h1v3h-1zm2 0h3v1h-3zm544 0h1v1h-1zm-548 1h1v1h-1zm3 0h2v1h-2zm19 0h1v1h-1zm169 0h1v1h-1zm87 0h1v1h-1zm-280 1h1v1h-1zm3 0h1v2h-1zm2 0h1v1h-1zm274 0h1v1h-1zm268 0h1v2h-1zm6 0h1v2h-1zm-552 1h2v1h-2zm268 0h2v1h-2zm9 0h1v15h-1zm270 0h1v1h-1zm4 0h1v1h-1zm-554 1h1v3h-1zm2 0h3v1h-3zm20 0h1v1h-1zm251 0h1v1h-1zm278 0h3v1h-3zm-553 1h1v1h-1zm3 0h2v1h-2zm198 0h1v1h-1zm75 0h1v3h-1zm-275 1h1v2h-1zm2 0h1v1h-1zm-5 1h3v1h-3zm-2 1h1v3h-1zm2 0h3v1h-3zm22 0h1v1h-1zm255 0h1v2h-1zm-278 1h2v1h-2zm207 0h1v1h-1zm-210 1h2v1h-2zm3 0h1v1h-1zm277 0h1v2h-1zm-282 1h4v1h-4zm24 0h1v1h-1zm-26 1h1v1h-1zm2 0h2v1h-2zm281 0h1v2h-1zm-282 1h2v1h-2zm217 0h1v1h-1zm-220 1h3v1h-3zm284 0h1v2h-1zm-286 1h1v3h-1zm2 0h2v1h-2zm24 0h1v1h-1zm261 0h9v1h-9zm10 0h4v1h-4zm-296 1h1v1h-1zm-3 1h2v1h-2zm227 0h1v1h-1zm-229 1h3v1h-3zm26 0h1v1h-1zm241 0h1v1h-1zm-267 1h2v1h-2zm-2 1h2v1h-2zm-2 1h3v1h-3zm237 0h1v1h-1zm-239 1h3v1h-3zm28 0h1v1h-1zm-28 1h2v1h-2zm-2 1h2v1h-2zm-2 1h2v1h-2zm28 0h1v1h-1zm218 0h1v1h-1zm-247 1h2v1h-2zm-1 1h1v1h-1zm-2 1h2v1h-2zm-1 1h1v1h-1zm29 0h1v1h-1zm226 0h1v1h-1zm-257 1h2v1h-2zm-1 1h1v1h-1zm28 1h1v1h-1zm233 1h1v1h-1zm-237 2h1v1h-1zm568 1h3v1h-3zm-327 1h1v1h-1zm328 0h2v1h-2zm-1 1h1v1h-1zm2 0h1v1h-1zm-574 1h1v1h-1zm568 0h2v1h-2zm3 0h1v1h-1zm-4 1h1v1h-1zm3 0h1v1h-1zm-322 1h1v1h-1zm318 0h1v2h-1zm5 0h1v2h-1zm-575 1h1v1h-1zm571 1h1v1h-1zm3 0h1v1h-1zm-2 1h2v1h-2zm-316 1h1v1h-1zm-260 1h1v1h-1zm581 0h1v1h-1zm-6 1h2v1h-2zm5 0h1v8h-1zm-3 1h1v2h-1zm-581 1h1v1h-1zm267 0h1v1h-1zm313 1h1v2h-1zm-1 2h1v2h-1zm-583 1h1v1h-1zm275 0h1v1h-1zm309 0h4v1h-4zm5 0h2v1h-2zm-593 3h1v1h-1zm282 1h1v1h-1zm-291 2h1v1h-1zm0 4h1v1h-1zm-26 2h6v1h-6zm4 1h2v1h-2zm-1 1h1v1h-1zm2 0h1v4h-1zm-3 1h1v1h-1zm-1 1h1v1h-1zm-1 1h1v1h-1zm-8 1h5v1h-5zm7 0h1v1h-1zm-8 1h1v1h-1zm6 0h2v1h-2zm-7 1h1v1h-1zm8 0h1v1h-1zm-9 1h1v5h-1zm10 0h1v5h-1zm-9 5h1v1h-1zm8 0h1v1h-1zm-7 1h1v1h-1zm6 0h1v1h-1zm-5 1h5v1h-5zm439 45h5v1h-5zm3 1h2v1h-2zm-1 1h1v1h-1zm2 0h1v3h-1zm-3 1h1v1h-1zm-1 1h1v1h-1zm-1 1h1v1h-1zm-9 1h1v1h-1zm8 0h1v1h-1zm-7 1h1v1h-1zm6 0h1v1h-1zm-5 1h1v1h-1zm4 0h1v1h-1zm-3 1h1v1h-1zm2 0h1v1h-1zm-1 1h1v1h-1zm-1 1h1v1h-1zm2 0h1v1h-1zm-3 1h1v1h-1zm4 0h1v1h-1zm-5 1h1v1h-1zm6 0h1v1h-1zm-7 1h1v1h-1zm8 0h1v1h-1zm-9 1h1v1h-1zm-1 1h1v1h-1zm-436 89h5v1h-5zm-1 1h1v1h-1zm6 0h1v1h-1zm-7 1h1v1h-1zm8 0h1v1h-1zm-9 1h1v1h-1zm10 0h1v1h-1zm-11 1h1v5h-1zm12 0h1v5h-1zm-11 5h1v1h-1zm10 0h1v1h-1zm-9 1h1v3h-1zm8 0h1v3h-1zm-12 2h1v1h-1zm1 1h1v1h-1zm2 0h1v1h-1zm10 0h1v1h-1zm-11 1h1v1h-1zm12 0h1v1h-1zm1 1h1v1h-1zm1 1h1v1h-1z"/>
<path fill="#0f0" d="m486 111h1v2h-1zm6 0h1v2h-1zm6 0h1v1h-1zm-13 1h1v2h-1zm6 0h1v2h-1zm6 0h1v2h-1zm-10 1h1v3h-1zm6 0h1v3h-1zm-9 1h1v1h-1zm6 0h1v1h-1zm6 0h1v1h-1zm-13 1h1v2h-1zm6 0h1v2h-1zm6 0h1v2h-1zm-7 1h1v2h-1zm6 0h1v2h-1zm-12 1h1v1h-1zm-138 2h1v1h-1zm12 0h1v1h-1zm-11 1h1v1h-1zm10 0h1v1h-1zm-9 1h1v7h-1zm8 0h1v7h-1zm132 0h1v2h-1zm6 0h1v2h-1zm6 0h1v1h-1zm-13 1h1v2h-1zm6 0h1v2h-1zm6 0h1v2h-1zm-147 1h1v9h-1zm137 0h1v3h-1zm6 0h1v3h-1zm-9 1h1v1h-1zm6 0h1v1h-1zm6 0h1v1h-1zm-149 1h3v1h-3zm4 0h3v1h-3zm132 0h1v2h-1zm6 0h1v2h-1zm6 0h1v2h-1zm-7 1h1v2h-1zm6 0h1v2h-1zm253 0h3v1h-3zm-265 1h1v1h-1zm264 0h1v1h-1zm4 0h1v1h-1zm-405 1h1v1h-1zm10 0h1v1h-1zm390 0h1v3h-1zm6 0h1v3h-1zm-407 1h1v1h-1zm12 0h1v1h-1zm18 0h5v1h-5zm-1 1h1v1h-1zm6 0h1v1h-1zm-30 1h1v1h-1zm2 0h1v1h-1zm21 0h1v5h-1zm8 0h1v5h-1zm366 0h1v2h-1zm4 0h1v2h-1zm-402 1h1v3h-1zm4 0h1v3h-1zm392 0h1v1h-1zm1 1h1v1h-1zm6 0h1v1h-1zm1 1h1v1h-1zm-403 1h3v1h-3zm24 1h1v1h-1zm6 0h1v1h-1zm-5 1h5v1h-5zm2 1h1v8h-1zm13 0h1v1h-1zm8 0h1v1h-1zm-7 1h1v1h-1zm6 0h1v1h-1zm-5 1h5v1h-5zm-19 1h4v1h-4zm5 0h4v1h-4zm13 0h1v1h-1zm6 0h1v1h-1zm-7 1h1v5h-1zm8 0h1v5h-1zm-7 5h1v1h-1zm6 0h1v1h-1zm-5 1h5v1h-5zm2 1h1v6h-1zm-4 3h4v1h-4zm5 0h4v1h-4zm-62 1h1v1h-1zm413 13h1v5h-1zm3 0h1v2h-1zm2 0h2v1h-2zm-6 1h1v1h-1zm5 0h1v2h-1zm3 0h1v2h-1zm-5 1h1v3h-1zm3 1h2v1h-2zm-376 1h1v1h-1zm377 0h1v1h-1zm-5 1h1v3h-1zm6 0h1v3h-1zm-372 2h1v1h-1zm371 1h1v1h-1zm-382 2h2v1h-2zm-2 1h2v1h-2zm-2 1h2v1h-2zm-1 1h2v1h-2zm11 0h1v1h-1zm-13 1h2v1h-2zm11 0h2v1h-2zm-13 1h2v1h-2zm11 0h1v1h-1zm-13 1h3v1h-3zm11 0h1v1h-1zm-12 1h2v1h-2zm11 0h1v1h-1zm-13 1h2v1h-2zm-2 1h2v1h-2zm12 0h1v1h-1zm-14 1h3v1h-3zm11 0h2v1h-2zm-12 1h2v1h-2zm11 0h1v1h-1zm27 0h1v1h-1zm-40 1h2v1h-2zm11 0h1v1h-1zm27 0h1v1h-1zm-39 1h2v1h-2zm10 0h1v1h-1zm27 0h1v1h-1zm-40 1h3v1h-3zm11 0h2v1h-2zm25 0h1v1h-1zm2 0h1v1h-1zm-39 1h2v1h-2zm10 0h1v2h-1zm25 0h1v1h-1zm-37 1h3v1h-3zm10 0h1v1h-1zm23 0h1v1h-1zm2 0h1v1h-1zm-37 1h3v1h-3zm11 0h1v1h-1zm22 0h1v1h-1zm-34 1h2v1h-2zm9 0h1v2h-1zm23 0h1v1h-1zm-34 1h3v1h-3zm9 0h1v1h-1zm21 0h1v1h-1zm-32 1h3v1h-3zm30 0h1v1h-1zm-32 1h3v1h-3zm11 0h2v1h-2zm19 0h1v1h-1zm-31 1h3v1h-3zm10 0h1v1h-1zm17 0h1v1h-1zm2 0h1v1h-1zm-31 1h3v1h-3zm10 0h1v1h-1zm17 0h1v1h-1zm-29 1h3v1h-3zm10 0h2v1h-2zm15 0h1v1h-1zm2 0h1v1h-1zm-29 1h3v1h-3zm10 0h1v2h-1zm15 0h1v1h-1zm-26 1h3v1h-3zm9 0h1v1h-1zm15 0h1v1h-1zm-26 1h3v1h-3zm9 0h2v1h-2zm13 0h1v1h-1zm2 0h1v1h-1zm-26 1h3v1h-3zm9 0h1v2h-1zm13 0h1v1h-1zm-24 1h4v1h-4zm9 0h1v1h-1zm13 0h1v1h-1zm-23 1h3v1h-3zm8 0h1v1h-1zm11 0h1v1h-1zm2 0h1v1h-1zm407 0h2v1h-2zm5 0h2v1h-2zm-435 1h3v1h-3zm8 0h1v2h-1zm3 0h1v1h-1zm8 0h1v1h-1zm410 0h1v2h-1zm3 0h1v3h-1zm2 0h1v3h-1zm3 0h1v2h-1zm-439 1h4v1h-4zm17 0h1v1h-1zm2 0h1v1h-1zm-21 1h4v1h-4zm10 0h1v1h-1zm7 0h1v1h-1zm417 0h1v1h-1zm6 0h1v1h-1zm-441 1h1v2h-1zm2 0h1v1h-1zm7 0h2v1h-2zm7 0h1v1h-1zm422 0h1v5h-1zm-440 1h2v1h-2zm3 0h1v1h-1zm6 0h1v2h-1zm5 0h1v1h-1zm2 0h1v1h-1zm-18 1h4v1h-4zm9 0h1v1h-1zm5 0h1v1h-1zm-16 1h2v1h-2zm3 0h1v1h-1zm6 0h2v1h-2zm5 0h1v1h-1zm-15 1h1v2h-1zm2 0h2v1h-2zm6 0h1v2h-1zm3 0h1v1h-1zm2 0h1v1h-1zm-15 1h2v1h-2zm3 0h1v1h-1zm5 0h1v1h-1zm3 0h1v1h-1zm-270 1h1v1h-1zm14 0h1v1h-1zm243 0h4v1h-4zm8 0h2v1h-2zm3 0h1v1h-1zm-267 1h1v1h-1zm12 0h1v1h-1zm242 0h2v1h-2zm3 0h1v1h-1zm5 0h2v1h-2zm3 0h1v1h-1zm-264 1h11v1h-11zm252 0h1v2h-1zm2 0h2v1h-2zm5 0h2v1h-2zm-257 1h1v12h-1zm6 0h1v12h-1zm242 0h2v1h-2zm3 0h1v1h-1zm3 0h3v1h-3zm5 0h1v1h-1zm-13 1h2v1h-2zm3 0h1v1h-1zm3 0h1v1h-1zm4 0h1v1h-1zm-12 1h2v1h-2zm3 0h2v1h-2zm3 0h1v1h-1zm3 0h1v2h-1zm-10 1h1v1h-1zm2 0h2v1h-2zm3 0h1v1h-1zm3 0h1v1h-1zm-10 1h2v1h-2zm3 0h1v1h-1zm5 0h1v1h-1zm-10 1h2v1h-2zm3 0h2v1h-2zm5 0h1v2h-1zm3 0h1v1h-1zm-12 1h1v1h-1zm2 0h2v1h-2zm5 0h1v1h-1zm-9 1h2v1h-2zm3 0h1v1h-1zm4 0h1v1h-1zm-11 1h1v2h-1zm2 0h2v1h-2zm3 0h2v1h-2zm4 0h1v1h-1zm3 0h1v1h-1zm-14 1h1v1h-1zm3 0h1v1h-1zm2 0h2v1h-2zm4 0h1v1h-1zm-11 1h1v1h-1zm3 0h1v1h-1zm3 0h1v1h-1zm3 0h1v1h-1zm4 0h1v1h-1zm-243 1h2v1h-2zm3 0h5v1h-5zm6 0h2v1h-2zm217 0h1v1h-1zm2 0h1v1h-1zm3 0h2v1h-2zm3 0h2v1h-2zm3 0h1v1h-1zm3 0h1v1h-1zm-241 1h1v1h-1zm12 0h1v1h-1zm213 0h1v1h-1zm5 0h2v1h-2zm3 0h2v1h-2zm3 0h1v1h-1zm-237 1h1v1h-1zm14 0h1v1h-1zm208 0h1v1h-1zm2 0h1v1h-1zm5 0h2v1h-2zm3 0h2v1h-2zm7 0h1v1h-1zm-19 1h1v1h-1zm8 0h1v1h-1zm3 0h1v1h-1zm4 0h1v1h-1zm-17 1h1v1h-1zm8 0h2v1h-2zm3 0h2v1h-2zm4 0h1v2h-1zm3 0h1v1h-1zm-22 1h1v1h-1zm2 0h1v1h-1zm8 0h2v1h-2zm3 0h2v1h-2zm4 0h1v1h-1zm-19 1h1v1h-1zm10 0h2v1h-2zm4 0h1v1h-1zm3 0h1v1h-1zm-19 1h1v1h-1zm11 0h1v1h-1zm3 0h2v1h-2zm3 0h1v1h-1zm3 0h1v1h-1zm-24 1h1v1h-1zm2 0h1v1h-1zm11 0h2v1h-2zm3 0h2v1h-2zm3 0h1v1h-1zm-21 1h1v1h-1zm13 0h2v1h-2zm4 0h1v2h-1zm2 0h1v1h-1zm4 0h1v1h-1zm-27 1h1v1h-1zm2 0h1v1h-1zm13 0h2v1h-2zm4 0h2v1h-2zm5 0h1v1h-1zm-26 1h1v1h-1zm16 0h1v1h-1zm3 0h3v1h-3zm-21 1h1v1h-1zm16 0h2v1h-2zm4 0h2v1h-2zm5 0h1v1h-1zm-29 1h1v1h-1zm2 0h1v1h-1zm16 0h2v1h-2zm4 0h2v1h-2zm-24 1h1v1h-1zm18 0h2v1h-2zm4 0h2v1h-2zm6 0h1v1h-1zm-30 1h1v1h-1zm19 0h1v1h-1zm4 0h1v2h-1zm-27 1h1v1h-1zm2 0h1v1h-1zm19 0h2v1h-2zm4 0h2v1h-2zm6 0h1v1h-1zm-33 1h1v1h-1zm21 0h2v1h-2zm4 0h3v1h-3zm5 0h1v1h-1zm-34 1h1v1h-1zm2 0h1v1h-1zm21 0h2v1h-2zm4 0h3v1h-3zm-29 1h1v1h-1zm24 0h1v1h-1zm4 0h2v1h-2zm5 0h1v1h-1zm-35 1h1v1h-1zm24 0h2v1h-2zm4 0h2v1h-2zm-32 1h1v1h-1zm2 0h1v1h-1zm24 0h2v1h-2zm4 0h2v1h-2zm6 0h1v1h-1zm-38 1h1v1h-1zm26 0h2v1h-2zm5 0h1v1h-1zm4 0h1v1h-1zm-37 1h1v1h-1zm27 0h1v1h-1zm4 0h2v1h-2zm-35 1h1v1h-1zm2 0h1v1h-1zm27 0h2v1h-2zm4 0h2v1h-2zm5 0h1v1h-1zm-40 1h1v1h-1zm29 0h2v1h-2zm4 0h2v1h-2zm-37 1h1v1h-1zm2 0h1v1h-1zm30 0h1v1h-1zm3 0h3v1h-3zm6 0h1v1h-1zm507 0h1v1h-1zm4 0h1v1h-1zm-554 1h1v1h-1zm32 0h2v1h-2zm4 0h2v1h-2zm4 0h1v1h-1zm511 0h3v1h-3zm-553 1h1v1h-1zm32 0h2v1h-2zm5 0h1v1h-1zm515 0h1v3h-1zm4 0h1v3h-1zm-560 1h1v1h-1zm2 0h1v1h-1zm32 0h2v1h-2zm5 0h2v1h-2zm4 0h1v1h-1zm-45 1h1v1h-1zm35 0h1v1h-1zm4 0h2v1h-2zm-41 1h1v1h-1zm35 0h2v1h-2zm4 0h2v1h-2zm5 0h1v1h-1zm517 0h3v1h-3zm-565 1h1v1h-1zm2 0h1v1h-1zm35 0h2v1h-2zm4 0h3v1h-3zm4 0h1v1h-1zm521 0h1v3h-1zm-568 1h1v1h-1zm37 0h2v1h-2zm4 0h3v1h-3zm525 0h2v1h-2zm3 0h2v1h-2zm-573 1h1v1h-1zm2 0h1v1h-1zm38 0h1v1h-1zm3 0h3v1h-3zm5 0h1v1h-1zm-50 1h1v1h-1zm40 0h2v1h-2zm3 0h1v2h-1zm2 0h1v1h-1zm-47 1h1v1h-1zm40 0h2v1h-2zm3 0h1v2h-1zm3 0h1v1h-1zm3 0h1v1h-1zm526 0h3v1h-3zm-579 1h1v1h-1zm2 0h1v1h-1zm40 0h2v1h-2zm3 0h1v1h-1zm3 0h1v1h-1zm530 0h1v3h-1zm4 0h1v3h-1zm-584 1h1v1h-1zm43 0h1v1h-1zm2 0h1v1h-1zm3 0h1v1h-1zm4 0h1v1h-1zm-54 1h1v1h-1zm43 0h2v1h-2zm5 0h2v1h-2zm3 0h1v1h-1zm-53 1h1v1h-1zm43 0h2v1h-2zm4 0h3v1h-3zm538 0h3v1h-3zm-544 1h2v1h-2zm4 0h1v2h-1zm2 0h1v1h-1zm3 0h1v1h-1zm536 0h1v4h-1zm-546 1h1v1h-1zm3 0h1v2h-1zm3 0h1v1h-1zm538 0h2v1h-2zm3 0h2v1h-2zm-549 1h2v1h-2zm3 0h1v1h-1zm3 0h1v2h-1zm3 0h1v1h-1zm-11 1h2v1h-2zm3 0h1v1h-1zm3 0h1v1h-1zm-8 1h2v1h-2zm3 0h1v1h-1zm3 0h2v1h-2zm-7 1h1v2h-1zm2 0h1v1h-1zm3 0h2v1h-2zm3 0h1v1h-1zm-10 1h2v1h-2zm6 0h1v1h-1zm-8 1h3v1h-3zm6 0h2v1h-2zm3 0h1v1h-1zm-11 1h3v1h-3zm6 0h3v1h-3zm-7 1h2v1h-2zm5 0h2v1h-2zm-7 1h2v1h-2zm6 0h1v1h-1zm2 0h1v1h-1zm-10 1h2v1h-2zm3 0h1v1h-1zm3 0h2v1h-2zm-8 1h2v1h-2zm3 0h1v1h-1zm3 0h2v1h-2zm3 0h1v1h-1zm-10 1h1v2h-1zm2 0h1v1h-1zm4 0h2v1h-2zm-8 1h2v1h-2zm6 0h2v1h-2zm-8 1h3v1h-3zm6 0h3v1h-3zm-7 1h2v1h-2zm6 0h1v2h-1zm-8 1h2v1h-2zm6 0h2v1h-2zm-8 1h2v1h-2zm6 0h2v1h-2zm-8 1h2v1h-2zm7 0h1v1h-1zm-8 1h1v1h-1zm6 0h2v1h-2zm-8 1h2v1h-2zm6 0h2v1h-2zm-8 1h2v1h-2zm7 0h2v1h-2zm-9 1h3v1h-3zm7 0h2v1h-2zm-8 1h2v1h-2zm6 0h3v1h-3zm-8 1h2v1h-2zm6 0h2v1h-2zm-8 1h2v1h-2zm7 0h1v1h-1zm-9 1h2v1h-2zm7 0h2v1h-2zm-8 1h1v1h-1zm6 0h2v1h-2zm-1 1h2v1h-2zm-2 1h2v1h-2zm284 0h1v1h-1zm-286 1h2v1h-2zm284 0h1v1h-1zm-285 1h1v1h-1zm283 0h1v1h-1zm-2 1h1v1h-1zm-2 1h1v1h-1zm311 1h1v1h-1zm6 0h1v1h-1zm-319 1h1v1h-1zm314 0h1v4h-1zm4 0h1v4h-1zm-320 1h1v1h-1zm318 0h1v5h-1zm-320 1h1v1h-1zm319 0h1v1h-1zm2 0h1v1h-1zm-323 1h1v1h-1zm-2 1h1v1h-1zm321 0h1v1h-1zm6 0h1v1h-1zm-4 1h1v2h-1zm2 0h1v2h-1zm-327 1h1v1h-1zm-2 1h1v1h-1zm328 0h1v1h-1zm-330 1h1v1h-1zm-2 1h1v1h-1zm-2 1h1v1h-1zm-2 2h1v1h-1zm-2 1h1v1h-1zm-2 1h1v1h-1zm-2 1h1v1h-1zm-2 1h1v1h-1zm-2 1h1v1h-1zm-2 2h1v1h-1zm-2 1h1v1h-1zm-2 1h1v1h-1zm-2 1h1v1h-1zm-2 1h1v1h-1zm-2 2h1v1h-1zm-2 1h1v1h-1zm-2 1h1v1h-1zm-2 1h1v1h-1zm-2 1h1v1h-1zm-2 2h1v1h-1zm-2 1h1v1h-1zm-2 1h1v1h-1zm-2 1h1v1h-1zm-2 1h1v1h-1zm-2 2h1v1h-1zm-2 1h1v1h-1zm-2 1h1v1h-1zm-2 1h1v1h-1zm-2 1h1v1h-1zm-2 2h1v1h-1zm-2 1h1v1h-1zm-2 1h1v1h-1zm-2 1h1v1h-1zm-2 1h1v1h-1zm-2 2h1v1h-1zm-2 1h1v1h-1zm-2 1h1v1h-1zm-2 1h1v1h-1zm-2 1h1v1h-1zm-2 2h1v1h-1zm-2 1h1v1h-1zm-2 1h1v1h-1zm-2 1h1v1h-1zm-2 1h1v1h-1zm-2 1h1v1h-1zm-2 2h1v1h-1zm-2 1h1v1h-1zm-2 1h1v1h-1zm-2 1h1v1h-1zm-2 1h1v1h-1zm-2 2h1v1h-1zm-2 1h1v1h-1zm-2 1h1v1h-1zm-2 1h1v1h-1zm-2 1h1v1h-1zm-2 2h1v1h-1zm-2 1h1v1h-1zm-2 1h1v1h-1zm-2 1h1v1h-1zm-2 1h1v1h-1zm-2 2h1v1h-1zm-2 1h1v1h-1zm-2 1h1v1h-1zm-2 1h1v1h-1zm-2 1h1v1h-1zm-2 2h1v1h-1zm-2 1h1v1h-1zm-2 1h1v1h-1zm-2 1h1v1h-1zm-2 1h1v1h-1zm-2 2h1v1h-1zm-2 1h1v1h-1zm-2 1h1v1h-1zm-2 1h1v1h-1zm-2 1h1v1h-1zm-2 2h1v1h-1zm-2 1h1v1h-1zm-2 1h1v1h-1zm-2 1h1v1h-1zm-2 1h1v1h-1zm-2 1h1v1h-1zm-2 2h1v1h-1zm-2 1h1v1h-1zm-2 1h1v1h-1zm-2 1h1v1h-1zm-2 1h1v1h-1zm-2 2h1v1h-1zm-2 1h1v1h-1zm-2 1h1v1h-1zm-2 1h1v1h-1zm-2 1h1v1h-1zm-2 2h1v1h-1zm-2 1h1v1h-1zm123 125h5v1h-5zm-1 1h1v1h-1zm6 0h1v1h-1zm-7 1h1v3h-1zm8 0h1v3h-1zm-7 3h1v2h-1zm6 0h1v2h-1zm-11 1h5v1h-5zm6 0h1v1h-1zm4 0h1v1h-1zm2 0h5v1h-5zm-12 4h17v1h-17z"/>
<path fill="#808080" d="m290 61h1v14h-1zm4 0h1v14h-1zm4 0h1v14h-1zm3 0h1v14h-1zm9 0h1v7h-1zm-37 1h1v4h-1zm4 0h1v4h-1zm4 0h1v6h-1zm33 0h1v6h-1zm4 0h1v6h-1zm4 0h1v7h-1zm-53 1h1v3h-1zm61 0h1v7h-1zm-69 1h1v4h-1zm74 0h1v2h-1zm-78 1h1v3h-1zm82 0h1v2h-1zm4 0h1v3h-1zm-95 1h1v3h-1zm5 0h1v3h-1zm17 0h1v7h-1zm4 0h1v7h-1zm4 0h1v6h-1zm56 0h1v4h-1zm4 1h1v4h-1zm13 0h1v2h-1zm-111 1h1v2h-1zm18 0h1v7h-1zm4 0h1v6h-1zm20 0h1v8h-1zm27 0h1v7h-1zm4 0h1v8h-1zm4 0h1v8h-1zm25 0h1v4h-1zm13 0h1v2h-1zm-119 1h1v2h-1zm13 0h1v4h-1zm5 0h1v7h-1zm67 0h1v7h-1zm29 0h1v4h-1zm9 0h1v2h-1zm-127 1h1v2h-1zm9 0h1v3h-1zm88 0h1v7h-1zm4 0h1v5h-1zm21 0h1v4h-1zm9 0h1v1h-1zm-126 1h1v3h-1zm100 0h1v4h-1zm21 0h1v4h-1zm4 0h1v4h-1zm-134 1h1v1h-1zm5 0h1v3h-1zm46 0h1v4h-1zm62 0h1v4h-1zm30 0h1v2h-1zm-142 1h1v3h-1zm13 0h1v4h-1zm8 0h1v4h-1zm21 0h1v4h-1zm4 0h1v3h-1zm74 0h1v5h-1zm-129 1h1v2h-1zm18 0h1v4h-1zm25 0h1v4h-1zm90 0h1v5h-1zm17 0h1v3h-1zm5 0h1v1h-1zm-141 1h1v4h-1zm25 0h1v3h-1zm73 0h1v2h-1zm4 0h1v3h-1zm21 0h1v5h-1zm4 0h1v3h-1zm13 0h1v3h-1zm5 0h1v1h-1zm-163 1h1v1h-1zm5 0h1v2h-1zm9 0h1v4h-1zm25 0h1v3h-1zm85 0h1v3h-1zm38 0h1v2h-1zm5 0h1v2h-1zm-170 1h1v2h-1zm4 0h1v2h-1zm26 0h1v3h-1zm8 0h1v3h-1zm118 0h1v4h-1zm-160 1h1v2h-1zm13 0h1v3h-1zm17 0h1v3h-1zm109 0h1v3h-1zm12 0h1v4h-1zm13 0h1v4h-1zm4 0h1v3h-1zm5 0h1v2h-1zm-168 1h1v2h-1zm4 0h1v3h-1zm17 0h1v3h-1zm117 0h1v3h-1zm-142 1h1v2h-1zm21 0h1v3h-1zm13 0h1v2h-1zm112 0h1v3h-1zm25 0h1v3h-1zm10 0h1v1h-1zm-176 1h1v3h-1zm8 0h1v3h-1zm17 0h1v2h-1zm128 0h1v3h-1zm8 0h1v3h-1zm14 0h1v2h-1zm4 0h1v2h-1zm-193 1h1v1h-1zm10 0h1v3h-1zm8 0h1v3h-1zm17 0h1v2h-1zm123 0h1v2h-1zm13 0h1v3h-1zm-170 1h1v2h-1zm30 0h1v2h-1zm148 0h1v3h-1zm9 0h1v2h-1zm4 0h1v2h-1zm5 0h1v1h-1zm-201 1h1v1h-1zm19 0h1v3h-1zm8 0h1v2h-1zm143 0h1v2h-1zm8 0h1v2h-1zm22 0h1v2h-1zm-199 1h1v2h-1zm5 0h1v2h-1zm9 0h1v3h-1zm8 0h1v2h-1zm151 0h1v2h-1zm17 0h1v2h-1zm4 0h1v2h-1zm9 0h1v2h-1zm-207 1h1v2h-1zm31 0h1v2h-1zm149 0h1v2h-1zm5 0h1v2h-1zm17 0h1v3h-1zm-206 1h1v1h-1zm9 0h1v2h-1zm5 0h1v2h-1zm13 0h1v2h-1zm4 0h1v2h-1zm166 0h1v2h-1zm4 0h1v3h-1zm9 0h1v2h-1zm-209 1h1v2h-1zm4 0h1v2h-1zm18 0h1v2h-1zm165 0h1v2h-1zm31 0h1v1h-1zm-209 1h1v2h-1zm5 0h1v2h-1zm13 0h1v1h-1zm168 0h1v2h-1zm9 0h1v3h-1zm4 0h1v2h-1zm9 0h1v2h-1zm-216 1h1v2h-1zm4 0h1v2h-1zm18 0h1v1h-1zm176 0h1v2h-1zm23 0h1v1h-1zm-212 1h1v2h-1zm5 0h1v2h-1zm179 0h1v1h-1zm13 0h1v2h-1zm9 0h1v2h-1zm5 0h1v2h-1zm-229 1h1v2h-1zm10 0h1v2h-1zm4 0h1v2h-1zm192 0h1v2h-1zm5 0h1v2h-1zm23 0h1v1h-1zm-215 1h1v2h-1zm5 0h1v2h-1zm190 0h1v2h-1zm9 0h1v2h-1zm5 0h1v2h-1zm5 0h1v2h-1zm-236 1h1v2h-1zm4 0h1v2h-1zm10 0h1v2h-1zm4 0h1v2h-1zm195 0h1v2h-1zm27 0h1v1h-1zm-217 1h1v2h-1zm193 0h1v2h-1zm9 0h1v2h-1zm5 0h1v2h-1zm5 0h1v2h-1zm4 0h1v2h-1zm-243 1h1v2h-1zm5 0h1v2h-1zm4 0h1v1h-1zm10 0h1v2h-1zm4 0h1v2h-1zm-13 1h1v2h-1zm218 0h1v2h-1zm5 0h1v2h-1zm5 0h1v1h-1zm4 0h1v2h-1zm-246 1h1v1h-1zm5 0h1v2h-1zm5 0h1v1h-1zm14 0h1v2h-1zm217 0h1v2h-1zm14 0h1v1h-1zm-254 1h1v2h-1zm10 0h1v2h-1zm4 0h1v2h-1zm216 0h1v2h-1zm5 0h1v2h-1zm9 0h1v1h-1zm9 0h1v2h-1zm-248 1h1v1h-1zm234 0h1v2h-1zm4 0h1v2h-1zm-242 1h1v1h-1zm5 0h1v2h-1zm5 0h1v2h-1zm4 0h1v2h-1zm219 0h1v2h-1zm18 0h1v2h-1zm6 0h1v1h-1zm-256 1h1v2h-1zm236 0h1v2h-1zm4 0h1v2h-1zm15 0h1v2h-1zm-264 1h1v2h-1zm14 0h1v2h-1zm5 0h1v2h-1zm4 0h1v1h-1zm235 0h1v1h-1zm10 0h1v1h-1zm-258 1h1v2h-1zm238 0h1v2h-1zm9 0h1v2h-1zm6 0h1v1h-1zm4 0h1v2h-1zm-266 1h1v1h-1zm14 0h1v2h-1zm5 0h1v1h-1zm242 0h1v1h-1zm-266 1h1v2h-1zm6 0h1v2h-1zm9 0h1v1h-1zm245 0h1v2h-1zm5 0h1v2h-1zm5 0h1v1h-1zm5 0h1v2h-1zm-259 1h1v2h-1zm4 0h1v1h-1zm249 0h1v2h-1zm-272 1h1v2h-1zm4 0h1v1h-1zm6 0h1v2h-1zm252 0h1v2h-1zm5 0h1v1h-1zm10 0h1v1h-1zm-272 1h1v1h-1zm15 0h1v1h-1zm246 0h1v1h-1zm5 0h1v2h-1zm5 0h1v1h-1zm-279 1h1v2h-1zm4 0h1v1h-1zm5 0h1v2h-1zm5 0h1v1h-1zm250 0h1v1h-1zm4 0h1v2h-1zm10 0h1v2h-1zm-273 1h1v1h-1zm10 0h1v2h-1zm258 0h1v1h-1zm15 0h1v1h-1zm-287 1h1v1h-1zm5 0h1v2h-1zm4 0h1v1h-1zm262 0h1v2h-1zm5 0h1v1h-1zm10 0h1v2h-1zm-285 1h1v1h-1zm9 0h1v1h-1zm5 0h1v1h-1zm260 0h1v1h-1zm-273 1h1v2h-1zm4 0h1v1h-1zm5 0h1v2h-1zm259 0h1v1h-1zm4 0h1v2h-1zm11 0h1v1h-1zm5 0h1v1h-1zm-299 1h1v1h-1zm16 0h1v1h-1zm277 0h1v1h-1zm5 0h1v2h-1zm-297 1h1v1h-1zm11 0h1v1h-1zm5 0h1v2h-1zm4 0h1v1h-1zm261 0h1v1h-1zm10 0h1v1h-1zm11 0h1v1h-1zm-301 1h1v1h-1zm11 0h1v1h-1zm278 0h1v1h-1zm6 0h1v1h-1zm5 0h1v1h-1zm-304 1h1v1h-1zm5 0h1v1h-1zm11 0h1v2h-1zm4 0h1v1h-1zm272 0h1v2h-1zm6 0h1v1h-1zm5 0h1v1h-1zm-302 1h1v2h-1zm5 0h1v1h-1zm291 0h1v1h-1zm5 0h1v1h-1zm5 0h1v1h-1zm-311 1h1v1h-1zm11 0h1v2h-1zm10 0h1v1h-1zm274 0h1v1h-1zm5 0h1v1h-1zm5 0h1v1h-1zm5 0h1v2h-1zm-309 1h1v1h-1zm5 0h1v1h-1zm76 0h1v1h-1zm212 0h1v1h-1zm5 0h1v2h-1zm5 0h1v2h-1zm-302 1h1v1h-1zm5 0h1v1h-1zm5 0h1v1h-1zm297 0h1v1h-1zm-312 1h1v1h-1zm6 0h1v1h-1zm5 0h1v1h-1zm5 0h1v1h-1zm70 0h1v1h-1zm215 0h1v1h-1zm5 0h1v1h-1zm5 0h1v1h-1zm-310 1h1v1h-1zm6 0h1v1h-1zm5 0h1v1h-1zm5 0h1v1h-1zm283 0h1v1h-1zm5 0h1v1h-1zm5 0h1v1h-1zm11 0h1v1h-1zm-319 1h1v1h-1zm6 0h1v2h-1zm5 0h1v2h-1zm5 0h1v1h-1zm69 0h1v1h-1zm217 0h1v1h-1zm5 0h1v1h-1zm11 0h1v1h-1zm-317 1h1v1h-1zm300 0h1v1h-1zm5 0h1v2h-1zm11 0h1v1h-1zm-315 1h1v1h-1zm5 0h1v1h-1zm5 0h1v1h-1zm74 0h1v1h-1zm230 0h1v1h-1zm6 0h1v1h-1zm-319 1h1v2h-1zm5 0h1v1h-1zm5 0h1v1h-1zm292 0h1v1h-1zm10 0h1v1h-1zm6 0h1v1h-1zm-329 1h1v1h-1zm17 0h1v1h-1zm77 0h1v1h-1zm218 0h1v1h-1zm10 0h1v2h-1zm6 0h1v1h-1zm-327 1h1v1h-1zm11 0h1v1h-1zm6 0h1v1h-1zm309 0h1v1h-1zm6 0h1v1h-1zm-331 1h1v1h-1zm11 0h1v1h-1zm82 0h1v1h-1zm226 0h1v1h-1zm5 0h1v1h-1zm6 0h1v1h-1zm-335 1h1v1h-1zm6 0h1v1h-1zm11 0h1v1h-1zm306 0h1v1h-1zm5 0h1v2h-1zm6 0h1v1h-1zm-333 1h1v1h-1zm6 0h1v1h-1zm11 0h1v1h-1zm81 0h1v1h-1zm223 0h1v1h-1zm11 0h1v1h-1zm6 0h1v1h-1zm-337 1h1v1h-1zm6 0h1v1h-1zm313 0h1v1h-1zm6 0h1v1h-1zm5 0h1v1h-1zm6 0h1v1h-1zm-341 1h1v1h-1zm6 0h1v1h-1zm6 0h1v1h-1zm91 0h1v1h-1zm226 0h1v1h-1zm5 0h1v1h-1zm6 0h1v1h-1zm-339 1h1v1h-1zm6 0h1v1h-1zm6 0h1v1h-1zm315 0h1v1h-1zm5 0h1v1h-1zm6 0h1v1h-1zm-337 1h1v1h-1zm6 0h1v1h-1zm6 0h1v1h-1zm90 0h1v1h-1zm223 0h1v1h-1zm5 0h1v1h-1zm6 0h1v1h-1zm-341 1h1v1h-1zm6 0h1v1h-1zm6 0h1v1h-1zm6 0h1v1h-1zm316 0h1v1h-1zm6 0h1v1h-1zm-339 1h1v1h-1zm6 0h1v1h-1zm6 0h1v1h-1zm95 0h1v1h-1zm225 0h1v1h-1zm6 0h1v1h-1zm12 0h1v1h-1zm-349 1h1v1h-1zm6 0h2v1h-2zm6 0h1v1h-1zm324 0h1v1h-1zm12 0h1v1h-1zm-347 1h1v1h-1zm7 0h1v1h-1zm5 0h1v1h-1zm93 0h1v1h-1zm229 0h1v1h-1zm12 0h1v1h-1zm-345 1h1v1h-1zm7 0h1v1h-1zm325 0h1v1h-1zm12 0h1v1h-1zm6 0h1v1h-1zm-349 1h2v1h-2zm7 0h1v1h-1zm97 0h1v1h-1zm237 0h2v1h-2zm7 0h1v1h-1zm-346 1h1v1h-1zm6 0h1v1h-1zm332 0h1v1h-1zm7 0h1v1h-1zm-357 1h1v1h-1zm13 0h1v1h-1zm102 0h1v1h-1zm234 0h1v1h-1zm7 0h1v1h-1zm-355 1h2v1h-2zm13 0h1v1h-1zm334 0h1v1h-1zm6 0h2v1h-2zm7 0h1v1h-1zm-364 1h1v1h-1zm6 0h1v1h-1zm12 0h1v1h-1zm101 0h1v1h-1zm231 0h1v1h-1zm6 0h1v1h-1zm6 0h2v1h-2zm-361 1h1v1h-1zm6 0h1v1h-1zm342 0h1v1h-1zm6 0h1v1h-1zm6 0h1v1h-1zm6 0h1v1h-1zm-365 1h1v1h-1zm6 0h1v1h-1zm112 0h1v1h-1zm234 0h1v1h-1zm6 0h1v1h-1zm6 0h1v1h-1zm-363 1h1v1h-1zm6 0h1v1h-1zm344 0h1v1h-1zm6 0h1v1h-1zm6 0h1v1h-1zm-367 1h1v1h-1zm6 0h1v1h-1zm6 0h2v1h-2zm111 0h1v1h-1zm231 0h1v1h-1zm6 0h1v1h-1zm6 0h1v1h-1zm-365 1h2v1h-2zm6 0h2v1h-2zm7 0h1v1h-1zm344 0h2v1h-2zm6 0h2v1h-2zm-361 1h1v1h-1zm6 0h1v1h-1zm6 0h1v1h-1zm108 0h1v1h-1zm187 0h1v1h-1zm47 0h1v1h-1zm6 0h1v1h-1zm-366 1h1v1h-1zm7 0h1v1h-1zm6 0h1v1h-1zm346 0h1v1h-1zm6 0h1v1h-1zm-364 1h2v1h-2zm7 0h1v1h-1zm6 0h1v1h-1zm113 0h1v1h-1zm184 0h1v1h-1zm53 0h1v1h-1zm-361 1h1v1h-1zm6 0h1v1h-1zm6 0h1v1h-1zm348 0h1v1h-1zm13 0h2v1h-2zm-372 1h1v1h-1zm6 0h2v1h-2zm118 0h1v1h-1zm182 0h1v1h-1zm52 0h1v1h-1zm13 0h1v1h-1zm-370 1h1v1h-1zm7 0h1v1h-1zm362 0h1v1h-1zm-368 1h1v1h-1zm7 0h1v1h-1zm116 0h1v1h-1zm179 0h1v1h-1zm64 0h2v1h-2zm6 0h2v1h-2zm-371 1h2v1h-2zm364 0h1v1h-1zm6 0h1v1h-1zm-382 1h2v1h-2zm14 0h1v1h-1zm121 0h1v1h-1zm240 0h1v1h-1zm6 0h1v1h-1zm-379 1h1v1h-1zm13 0h1v1h-1zm358 0h2v1h-2zm6 0h2v1h-2zm6 0h2v1h-2zm-382 1h1v1h-1zm133 0h1v1h-1zm236 0h1v1h-1zm6 0h1v1h-1zm6 0h1v1h-1zm-387 1h1v1h-1zm7 0h2v1h-2zm373 0h1v1h-1zm6 0h1v1h-1zm-385 1h2v1h-2zm8 0h1v1h-1zm131 0h1v1h-1zm171 0h1v1h-1zm67 0h2v1h-2zm6 0h2v1h-2zm-381 1h1v1h-1zm7 0h1v1h-1zm287 0h2v1h-2zm80 0h1v1h-1zm6 0h1v1h-1zm8 0h2v1h-2zm-393 1h1v1h-1zm6 0h2v1h-2zm7 0h2v1h-2zm129 0h1v1h-1zm155 0h2v1h-2zm14 0h1v1h-1zm73 0h1v1h-1zm8 0h1v1h-1zm-391 1h2v1h-2zm7 0h2v1h-2zm7 0h1v1h-1zm280 0h2v1h-2zm87 0h2v1h-2zm8 0h2v1h-2zm-387 1h1v1h-1zm7 0h1v1h-1zm133 0h1v1h-1zm150 0h2v1h-2zm16 0h1v1h-1zm72 0h1v1h-1zm7 0h2v1h-2zm-384 1h1v1h-1zm7 0h2v1h-2zm280 0h2v1h-2zm96 0h1v1h-1zm-390 1h1v1h-1zm8 0h2v1h-2zm8 0h1v1h-1zm131 0h1v1h-1zm145 0h2v1h-2zm19 0h1v1h-1zm77 0h2v1h-2zm-387 1h2v1h-2zm9 0h1v1h-1zm281 0h1v1h-1zm96 0h1v1h-1zm15 0h1v1h-1zm-399 1h2v1h-2zm8 0h1v1h-1zm137 0h1v1h-1zm161 0h1v1h-1zm91 0h2v1h-2zm-395 1h1v1h-1zm7 0h2v1h-2zm387 0h1v1h-1zm-393 1h2v1h-2zm143 0h1v1h-1zm158 0h1v1h-1zm90 0h2v1h-2zm-389 1h2v1h-2zm387 0h2v1h-2zm8 0h2v1h-2zm-393 1h2v1h-2zm140 0h1v1h-1zm156 0h1v1h-1zm88 0h1v1h-1zm7 0h2v1h-2zm-405 1h1v1h-1zm16 0h1v1h-1zm380 0h2v1h-2zm7 0h2v1h-2zm-402 1h2v1h-2zm153 0h1v1h-1zm154 0h1v1h-1zm87 0h1v1h-1zm7 0h1v1h-1zm-399 1h2v1h-2zm397 0h2v1h-2zm9 0h2v1h-2zm-411 1h1v1h-1zm7 0h1v1h-1zm150 0h1v1h-1zm151 0h1v1h-1zm92 0h2v1h-2zm9 0h2v1h-2zm-408 1h2v1h-2zm7 0h2v1h-2zm391 0h1v1h-1zm8 0h2v1h-2zm-404 1h2v1h-2zm7 0h2v1h-2zm148 0h1v1h-1zm148 0h1v1h-1zm100 0h1v1h-1zm7 0h2v1h-2zm-408 1h1v1h-1zm7 0h2v1h-2zm392 0h2v1h-2zm7 0h2v1h-2zm-413 1h1v1h-1zm8 0h2v1h-2zm153 0h1v1h-1zm146 0h1v1h-1zm97 0h2v1h-2zm7 0h2v1h-2zm-410 1h2v1h-2zm9 0h2v1h-2zm393 0h1v1h-1zm7 0h1v1h-1zm-407 1h2v1h-2zm9 0h2v1h-2zm150 0h1v1h-1zm143 0h1v1h-1zm103 0h2v1h-2zm-403 1h2v1h-2zm401 0h2v1h-2zm-408 1h1v1h-1zm9 0h2v1h-2zm156 0h1v1h-1zm140 0h1v1h-1zm102 0h1v1h-1zm-406 1h2v1h-2zm10 0h2v1h-2zm411 0h2v1h-2zm-419 1h2v1h-2zm10 0h2v1h-2zm152 0h1v1h-1zm139 0h1v1h-1zm116 0h2v1h-2zm-415 1h2v1h-2zm413 0h2v1h-2zm-411 1h2v1h-2zm159 0h1v1h-1zm136 0h1v1h-1zm114 0h2v1h-2zm-407 1h2v1h-2zm405 0h2v1h-2zm9 0h2v1h-2zm-412 1h2v1h-2zm156 0h1v1h-1zm133 0h1v1h-1zm112 0h2v1h-2zm9 0h2v1h-2zm-374 1h1v1h-1zm364 0h1v1h-1zm8 0h2v1h-2zm-422 1h2v1h-2zm52 0h1v1h-1zm119 0h1v1h-1zm130 0h1v1h-1zm119 0h2v1h-2zm8 0h2v1h-2zm-426 1h2v1h-2zm416 0h2v1h-2zm8 0h2v1h-2zm-422 1h2v1h-2zm50 0h1v1h-1zm118 0h1v1h-1zm244 0h2v1h-2zm8 0h2v1h-2zm-426 1h1v1h-1zm8 0h2v1h-2zm50 0h1v1h-1zm366 0h2v1h-2zm-423 1h2v1h-2zm9 0h2v1h-2zm50 0h1v1h-1zm115 0h1v1h-1zm125 0h1v1h-1zm122 0h2v1h-2zm10 0h2v1h-2zm-429 1h3v1h-3zm9 0h2v1h-2zm50 0h1v1h-1zm358 0h2v1h-2zm10 0h2v1h-2zm-424 1h3v1h-3zm292 0h1v1h-1zm121 0h1v1h-1zm9 0h2v1h-2zm-430 1h2v1h-2zm11 0h2v1h-2zm55 0h1v1h-1zm362 0h2v1h-2zm-426 1h2v1h-2zm11 0h2v1h-2zm55 0h1v1h-1zm231 0h1v1h-1zm127 0h2v1h-2zm-422 1h2v1h-2zm66 0h1v1h-1zm354 0h2v1h-2zm-426 1h2v1h-2zm8 0h3v1h-3zm66 0h1v1h-1zm107 0h1v1h-1zm118 0h1v1h-1zm126 0h1v1h-1zm-423 1h2v1h-2zm9 0h2v1h-2zm-7 1h2v1h-2zm9 0h2v1h-2zm63 0h1v1h-1zm106 0h1v1h-1zm115 0h1v1h-1zm143 0h2v1h-2zm-434 1h2v1h-2zm72 0h1v1h-1zm360 0h2v1h-2zm-430 1h2v1h-2zm72 0h1v1h-1zm103 0h1v1h-1zm112 0h1v1h-1zm140 0h3v1h-3zm-425 1h2v1h-2zm72 0h1v1h-1zm350 0h3v1h-3zm-420 1h1v1h-1zm172 0h1v1h-1zm110 0h1v1h-1zm136 0h2v1h-2zm11 0h2v1h-2zm-357 1h1v1h-1zm345 0h1v1h-1zm10 0h2v1h-2zm-442 1h2v1h-2zm89 0h1v1h-1zm99 0h1v1h-1zm107 0h1v1h-1zm144 0h3v1h-3zm-437 1h2v1h-2zm89 0h1v1h-1zm345 0h3v1h-3zm10 0h1v1h-1zm-442 1h3v1h-3zm89 0h1v1h-1zm95 0h1v1h-1zm105 0h1v1h-1zm141 0h2v1h-2zm10 0h2v1h-2zm-437 1h3v1h-3zm426 0h1v1h-1zm8 0h3v1h-3zm-442 1h1v1h-1zm11 0h2v1h-2zm85 0h1v1h-1zm94 0h1v1h-1zm103 0h1v1h-1zm146 0h3v1h-3zm-438 1h2v1h-2zm12 0h2v1h-2zm85 0h1v1h-1zm339 0h2v1h-2zm11 0h2v1h-2zm-445 1h3v1h-3zm97 0h1v1h-1zm91 0h1v1h-1zm100 0h1v1h-1zm109 0h1v1h-1zm35 0h2v1h-2zm11 0h2v1h-2zm-440 1h3v1h-3zm96 0h1v1h-1zm296 0h1v1h-1zm45 0h3v1h-3zm-444 1h1v1h-1zm10 0h2v1h-2zm183 0h1v1h-1zm97 0h1v1h-1zm107 0h1v1h-1zm44 0h3v1h-3zm-440 1h3v1h-3zm11 0h2v1h-2zm93 0h1v1h-1zm290 0h1v1h-1zm44 0h2v1h-2zm-435 1h4v1h-4zm103 0h1v1h-1zm87 0h1v1h-1zm94 0h1v1h-1zm105 0h1v1h-1zm44 0h2v1h-2zm-429 1h3v1h-3zm101 0h1v1h-1zm282 0h1v1h-1zm-393 1h2v1h-2zm13 0h2v1h-2zm100 0h1v1h-1zm84 0h1v1h-1zm92 0h1v1h-1zm102 0h1v1h-1zm-389 1h3v1h-3zm385 0h1v1h-1zm2 0h1v1h-1zm65 0h1v1h-1zm-449 1h4v1h-4zm110 0h1v1h-1zm83 0h1v1h-1zm89 0h1v1h-1zm98 0h1v1h-1zm66 0h3v1h-3zm-442 1h3v1h-3zm108 0h1v1h-1zm266 0h1v1h-1zm64 0h4v1h-4zm-435 1h2v1h-2zm107 0h1v1h-1zm79 0h1v1h-1zm87 0h1v1h-1zm96 0h1v1h-1zm63 0h3v1h-3zm-323 1h1v1h-1zm258 0h1v1h-1zm63 0h2v1h-2zm13 0h2v1h-2zm-256 1h1v1h-1zm85 0h1v1h-1zm93 0h1v1h-1zm75 0h3v1h-3zm-329 1h1v1h-1zm252 0h1v1h-1zm73 0h4v1h-4zm-450 1h1v1h-1zm127 0h1v1h-1zm75 0h1v1h-1zm82 0h1v1h-1zm91 0h1v1h-1zm72 0h3v1h-3zm-446 1h4v1h-4zm128 0h1v1h-1zm242 0h1v1h-1zm2 0h1v1h-1zm72 0h2v1h-2zm13 0h2v1h-2zm-453 1h3v1h-3zm126 0h1v1h-1zm72 0h1v1h-1zm79 0h1v1h-1zm87 0h1v1h-1zm86 0h3v1h-3zm-447 1h4v1h-4zm359 0h1v1h-1zm84 0h4v1h-4zm-452 1h2v1h-2zm13 0h2v1h-2zm121 0h1v1h-1zm71 0h1v1h-1zm76 0h1v1h-1zm85 0h1v1h-1zm83 0h3v1h-3zm-447 1h4v1h-4zm362 0h1v1h-1zm83 0h2v1h-2zm13 0h2v1h-2zm-454 1h5v1h-5zm132 0h1v1h-1zm68 0h1v1h-1zm74 0h1v1h-1zm82 0h1v1h-1zm95 0h3v1h-3zm-446 1h3v1h-3zm129 0h1v1h-1zm220 0h1v1h-1zm93 0h4v1h-4zm-454 1h2v1h-2zm207 0h1v1h-1zm72 0h1v1h-1zm78 0h1v1h-1zm2 0h1v1h-1zm92 0h3v1h-3zm-449 1h4v1h-4zm141 0h1v1h-1zm212 0h1v1h-1zm94 0h2v1h-2zm-443 1h5v1h-5zm139 0h1v1h-1zm63 0h1v1h-1zm69 0h1v1h-1zm76 0h1v1h-1zm-342 1h3v1h-3zm136 0h1v1h-1zm204 0h1v1h-1zm-352 1h2v1h-2zm210 0h1v1h-1zm67 0h1v1h-1zm73 0h1v1h-1zm-348 1h4v1h-4zm148 0h1v1h-1zm313 0h3v1h-3zm-457 1h5v1h-5zm146 0h1v1h-1zm59 0h1v1h-1zm64 0h1v1h-1zm71 0h1v1h-1zm113 0h4v1h-4zm-448 1h3v1h-3zm143 0h1v1h-1zm190 0h1v1h-1zm111 0h4v1h-4zm-299 1h1v1h-1zm56 0h1v1h-1zm61 0h1v1h-1zm67 0h1v1h-1zm2 0h1v1h-1zm110 0h3v1h-3zm-114 1h1v1h-1zm-180 1h1v1h-1zm55 0h1v1h-1zm58 0h1v1h-1zm65 0h1v1h-1zm127 0h3v1h-3zm-303 1h1v1h-1zm174 0h1v1h-1zm122 0h7v1h-7zm-458 1h3v1h-3zm164 0h1v1h-1zm51 0h1v1h-1zm57 0h1v1h-1zm62 0h1v1h-1zm121 0h3v1h-3zm-452 1h4v1h-4zm163 0h1v1h-1zm166 0h1v1h-1zm-325 1h4v1h-4zm209 0h1v1h-1zm54 0h1v1h-1zm60 0h1v1h-1zm136 0h3v1h-3zm-455 1h3v1h-3zm157 0h1v1h-1zm158 0h1v1h-1zm2 0h1v1h-1zm131 0h7v1h-7zm-459 1h2v1h-2zm170 0h1v1h-1zm47 0h1v1h-1zm51 0h1v1h-1zm56 0h1v1h-1zm132 0h3v1h-3zm-454 1h4v1h-4zm170 0h1v1h-1zm150 0h1v1h-1zm-316 1h4v1h-4zm168 0h1v1h-1zm44 0h1v1h-1zm49 0h1v1h-1zm53 0h1v1h-1zm146 0h4v1h-4zm-456 1h3v1h-3zm308 0h1v1h-1zm142 0h6v1h-6zm-461 1h2v1h-2zm177 0h1v1h-1zm43 0h1v1h-1zm46 0h1v1h-1zm51 0h1v1h-1zm140 0h4v1h-4zm-455 1h4v1h-4zm177 0h1v1h-1zm136 0h1v1h-1zm-309 1h5v1h-5zm175 0h1v1h-1zm40 0h1v1h-1zm43 0h1v1h-1zm49 0h1v1h-1zm-302 1h2v1h-2zm172 0h1v1h-1zm126 0h1v1h-1zm2 0h1v1h-1zm-89 1h1v1h-1zm40 0h1v1h-1zm45 0h1v1h-1zm-308 1h7v1h-7zm186 0h1v1h-1zm120 0h1v1h-1zm-299 1h7v1h-7zm181 0h1v1h-1zm35 0h1v1h-1zm39 0h1v1h-1zm42 0h1v1h-1zm166 0h3v1h-3zm-280 1h1v1h-1zm112 0h1v1h-1zm161 0h7v1h-7zm-271 1h1v1h-1zm32 0h1v1h-1zm76 0h1v1h-1zm159 0h4v1h-4zm-161 1h1v1h-1zm-104 1h1v1h-1zm31 0h1v1h-1zm33 0h1v1h-1zm36 0h1v1h-1zm2 0h1v1h-1zm174 0h4v1h-4zm-274 1h1v1h-1zm96 0h1v1h-1zm171 0h7v1h-7zm-265 1h1v1h-1zm28 0h1v1h-1zm31 0h1v1h-1zm33 0h1v1h-1zm170 0h3v1h-3zm-461 1h7v1h-7zm201 0h1v1h-1zm88 0h1v1h-1zm-282 1h7v1h-7zm221 0h1v1h-1zm28 0h1v1h-1zm31 0h1v1h-1zm184 0h4v1h-4zm-268 1h1v1h-1zm82 0h1v1h-1zm180 0h6v1h-6zm-260 1h1v1h-1zm24 0h1v1h-1zm25 0h1v1h-1zm29 0h1v1h-1zm178 0h4v1h-4zm-461 1h6v1h-6zm207 0h1v1h-1zm72 0h1v1h-1zm2 0h1v1h-1zm-275 1h8v1h-8zm203 0h1v1h-1zm20 0h1v1h-1zm23 0h1v1h-1zm25 0h1v1h-1zm191 0h7v1h-7zm-193 1h1v1h-1zm186 0h7v1h-7zm-250 1h1v1h-1zm19 0h1v1h-1zm21 0h1v1h-1zm22 0h1v1h-1zm-273 1h6v1h-6zm213 0h1v1h-1zm58 0h1v1h-1zm-265 1h8v1h-8zm209 0h1v1h-1zm16 0h1v1h-1zm18 0h1v1h-1zm20 0h1v1h-1zm-52 1h1v1h-1zm50 0h1v1h-1zm-35 1h1v1h-1zm33 0h1v1h-1zm-266 1h7v1h-7zm220 0h1v1h-1zm42 0h1v1h-1zm2 0h1v1h-1zm-257 1h7v1h-7zm215 0h1v1h-1zm12 0h1v1h-1zm26 0h1v1h-1zm-36 1h1v1h-1zm34 0h1v1h-1zm205 0h14v1h-14zm-237 1h1v1h-1zm9 0h1v1h-1zm10 0h1v1h-1zm11 0h1v1h-1zm-2 1h1v1h-1zm-26 1h1v1h-1zm7 0h1v1h-1zm8 0h1v1h-1zm9 0h1v1h-1zm-22 1h1v1h-1zm20 0h1v1h-1zm213 0h14v1h-14zm-231 1h1v1h-1zm4 0h1v1h-1zm5 0h1v1h-1zm5 0h1v1h-1zm-12 1h1v1h-1zm10 0h1v1h-1zm-244 1h14v1h-14zm237 0h1v1h-1zm3 0h1v2h-1zm-4 1h1v1h-1zm227 0h14v1h-14zm-225 1h1v1h-1zm-238 1h14v1h-14zm236 0h1v2h-1zm4 0h1v1h-1zm-6 1h1v1h-1zm5 0h1v1h-1zm224 0h14v1h-14zm-221 1h1v1h-1zm-14 1h1v1h-1zm2 0h1v1h-1zm5 0h1v1h-1zm5 0h1v1h-1zm4 0h1v1h-1zm-244 1h14v1h-14zm226 0h1v1h-1zm20 0h1v1h-1zm-22 1h1v1h-1zm9 0h1v1h-1zm8 0h1v1h-1zm7 0h1v1h-1zm-26 1h1v1h-1zm-2 1h1v1h-1zm11 0h1v1h-1zm19 0h1v1h-1zm-250 1h14v1h-14zm218 0h1v1h-1zm34 0h1v1h-1zm-36 1h1v1h-1zm13 0h1v1h-1zm13 0h1v1h-1zm12 0h1v1h-1zm209 0h7v1h-7zm-251 1h1v1h-1zm2 0h1v1h-1zm42 0h1v1h-1zm214 0h7v1h-7zm-260 1h1v1h-1zm18 0h1v1h-1zm15 0h1v1h-1zm-35 1h1v1h-1zm50 0h1v1h-1zm-52 1h1v1h-1zm20 0h1v1h-1zm18 0h1v1h-1zm16 0h1v1h-1zm202 0h7v1h-7zm-258 1h1v1h-1zm58 0h1v1h-1zm207 0h7v1h-7zm-267 1h1v1h-1zm22 0h1v1h-1zm21 0h1v1h-1zm19 0h1v1h-1zm-257 1h8v1h-8zm193 0h1v1h-1zm-199 1h6v1h-6zm197 0h1v1h-1zm25 0h1v1h-1zm23 0h1v1h-1zm20 0h1v1h-1zm196 0h7v1h-7zm-268 1h1v1h-1zm2 0h1v1h-1zm72 0h1v1h-1zm201 0h7v1h-7zm-458 1h4v1h-4zm181 0h1v1h-1zm29 0h1v1h-1zm25 0h1v1h-1zm24 0h1v1h-1zm-265 1h6v1h-6zm185 0h1v1h-1zm82 0h1v1h-1zm-271 1h4v1h-4zm187 0h1v1h-1zm31 0h1v1h-1zm28 0h1v1h-1zm215 0h7v1h-7zm-276 1h1v1h-1zm88 0h1v1h-1zm195 0h7v1h-7zm-457 1h3v1h-3zm172 0h1v1h-1zm33 0h1v1h-1zm31 0h1v1h-1zm28 0h1v1h-1zm-271 1h7v1h-7zm177 0h1v1h-1zm96 0h1v1h-1zm-277 1h4v1h-4zm177 0h1v1h-1zm2 0h1v1h-1zm36 0h1v1h-1zm33 0h1v1h-1zm31 0h1v1h-1zm-104 1h1v1h-1zm-164 1h4v1h-4zm162 0h1v1h-1zm40 0h1v1h-1zm36 0h1v1h-1zm32 0h1v1h-1zm-277 1h7v1h-7zm167 0h1v1h-1zm112 0h1v1h-1zm-282 1h3v1h-3zm168 0h1v1h-1zm42 0h1v1h-1zm39 0h1v1h-1zm35 0h1v1h-1zm175 0h7v1h-7zm-293 1h1v1h-1zm120 0h1v1h-1zm180 0h7v1h-7zm-302 1h1v1h-1zm45 0h1v1h-1zm40 0h1v1h-1zm-89 1h1v1h-1zm2 0h1v1h-1zm126 0h1v1h-1zm171 0h2v1h-2zm-301 1h1v1h-1zm49 0h1v1h-1zm43 0h1v1h-1zm40 0h1v1h-1zm171 0h4v1h-4zm-305 1h1v1h-1zm136 0h1v1h-1zm173 0h5v1h-5zm-454 1h4v1h-4zm143 0h1v1h-1zm51 0h1v1h-1zm46 0h1v1h-1zm43 0h1v1h-1zm176 0h2v1h-2zm-465 1h6v1h-6zm147 0h1v1h-1zm306 0h3v1h-3zm-457 1h4v1h-4zm149 0h1v1h-1zm53 0h1v1h-1zm49 0h1v1h-1zm44 0h1v1h-1zm165 0h4v1h-4zm-313 1h1v1h-1zm150 0h1v1h-1zm167 0h4v1h-4zm-453 1h4v1h-4zm134 0h1v1h-1zm56 0h1v1h-1zm51 0h1v1h-1zm47 0h1v1h-1zm169 0h2v1h-2zm-464 1h7v1h-7zm137 0h1v1h-1zm2 0h1v1h-1zm158 0h1v1h-1zm155 0h3v1h-3zm-455 1h3v1h-3zm138 0h1v1h-1zm60 0h1v1h-1zm54 0h1v1h-1zm206 0h4v1h-4zm-322 1h1v1h-1zm166 0h1v1h-1zm160 0h4v1h-4zm-451 1h4v1h-4zm123 0h1v1h-1zm62 0h1v1h-1zm57 0h1v1h-1zm51 0h1v1h-1zm162 0h3v1h-3zm-462 1h7v1h-7zm128 0h1v1h-1zm174 0h1v1h-1zm-305 1h3v1h-3zm129 0h1v1h-1zm65 0h1v1h-1zm58 0h1v1h-1zm55 0h1v1h-1zm-180 1h1v1h-1zm-116 1h3v1h-3zm112 0h1v1h-1zm2 0h1v1h-1zm67 0h1v1h-1zm61 0h1v1h-1zm56 0h1v1h-1zm-302 1h4v1h-4zm114 0h1v1h-1zm190 0h1v1h-1zm141 0h3v1h-3zm-449 1h4v1h-4zm116 0h1v1h-1zm71 0h1v1h-1zm64 0h1v1h-1zm59 0h1v1h-1zm142 0h4v1h-4zm-454 1h2v1h-2zm116 0h1v1h-1zm342 0h5v1h-5zm-344 1h1v1h-1zm73 0h1v1h-1zm67 0h1v1h-1zm60 0h1v1h-1zm149 0h2v1h-2zm-351 1h1v1h-1zm204 0h1v1h-1zm134 0h3v1h-3zm-340 1h1v1h-1zm76 0h1v1h-1zm69 0h1v1h-1zm63 0h1v1h-1zm135 0h4v1h-4zm-440 1h2v1h-2zm95 0h1v1h-1zm212 0h1v1h-1zm137 0h5v1h-5zm-447 1h3v1h-3zm94 0h1v1h-1zm2 0h1v1h-1zm78 0h1v1h-1zm72 0h1v1h-1zm206 0h2v1h-2zm-456 1h4v1h-4zm96 0h1v1h-1zm220 0h1v1h-1zm127 0h3v1h-3zm-446 1h3v1h-3zm97 0h1v1h-1zm82 0h1v1h-1zm74 0h1v1h-1zm68 0h1v1h-1zm128 0h4v1h-4zm-451 1h2v1h-2zm13 0h2v1h-2zm84 0h1v1h-1zm228 0h1v1h-1zm130 0h5v1h-5zm-445 1h3v1h-3zm85 0h1v1h-1zm85 0h1v1h-1zm76 0h1v1h-1zm71 0h1v1h-1zm120 0h2v1h-2zm13 0h2v1h-2zm-454 1h4v1h-4zm87 0h1v1h-1zm356 0h4v1h-4zm-446 1h3v1h-3zm88 0h1v1h-1zm87 0h1v1h-1zm79 0h1v1h-1zm72 0h1v1h-1zm124 0h3v1h-3zm-452 1h2v1h-2zm13 0h2v1h-2zm73 0h1v1h-1zm2 0h1v1h-1zm242 0h1v1h-1zm125 0h4v1h-4zm-445 1h3v1h-3zm74 0h1v1h-1zm91 0h1v1h-1zm82 0h1v1h-1zm75 0h1v1h-1zm127 0h1v1h-1zm-453 1h4v1h-4zm76 0h1v1h-1zm252 0h1v1h-1zm-331 1h3v1h-3zm77 0h1v1h-1zm93 0h1v1h-1zm85 0h1v1h-1zm-257 1h2v1h-2zm13 0h2v1h-2zm64 0h1v1h-1zm258 0h1v1h-1zm-325 1h3v1h-3zm65 0h1v1h-1zm96 0h1v1h-1zm87 0h1v1h-1zm79 0h1v1h-1zm106 0h2v1h-2zm-437 1h4v1h-4zm67 0h1v1h-1zm266 0h1v1h-1zm106 0h3v1h-3zm-442 1h3v1h-3zm68 0h1v1h-1zm98 0h1v1h-1zm172 0h1v1h-1zm107 0h4v1h-4zm-446 1h1v1h-1zm65 0h1v1h-1zm2 0h1v1h-1zm383 0h3v1h-3zm-387 1h1v1h-1zm102 0h1v1h-1zm92 0h1v1h-1zm84 0h1v1h-1zm99 0h2v1h-2zm13 0h2v1h-2zm-392 1h1v1h-1zm282 0h1v1h-1zm99 0h3v1h-3zm-428 1h2v1h-2zm45 0h1v1h-1zm105 0h1v1h-1zm94 0h1v1h-1zm87 0h1v1h-1zm100 0h4v1h-4zm-433 1h2v1h-2zm45 0h1v1h-1zm290 0h1v1h-1zm92 0h2v1h-2zm10 0h3v1h-3zm-440 1h3v1h-3zm46 0h1v1h-1zm107 0h1v1h-1zm97 0h1v1h-1zm182 0h2v1h-2zm11 0h1v1h-1zm-446 1h3v1h-3zm47 0h1v1h-1zm296 0h1v1h-1zm94 0h3v1h-3zm-439 1h2v1h-2zm11 0h2v1h-2zm36 0h1v1h-1zm109 0h1v1h-1zm100 0h1v1h-1zm91 0h1v1h-1zm95 0h3v1h-3zm-444 1h2v1h-2zm11 0h2v1h-2zm340 0h1v1h-1zm84 0h2v1h-2zm12 0h2v1h-2zm-439 1h3v1h-3zm148 0h1v1h-1zm103 0h1v1h-1zm94 0h1v1h-1zm84 0h2v1h-2zm12 0h1v1h-1zm-444 1h3v1h-3zm10 0h1v1h-1zm424 0h3v1h-3zm-436 1h2v1h-2zm10 0h2v1h-2zm142 0h1v1h-1zm105 0h1v1h-1zm95 0h1v1h-1zm87 0h3v1h-3zm-440 1h1v1h-1zm8 0h3v1h-3zm347 0h1v1h-1zm88 0h2v1h-2zm-438 1h3v1h-3zm146 0h1v1h-1zm107 0h1v1h-1zm99 0h1v1h-1zm88 0h2v1h-2zm-442 1h2v1h-2zm11 0h1v1h-1zm345 0h1v1h-1zm-358 1h2v1h-2zm11 0h2v1h-2zm137 0h1v1h-1zm110 0h1v1h-1zm172 0h1v1h-1zm-422 1h3v1h-3zm352 0h1v1h-1zm71 0h2v1h-2zm-426 1h3v1h-3zm142 0h1v1h-1zm112 0h1v1h-1zm103 0h1v1h-1zm71 0h2v1h-2zm-430 1h2v1h-2zm361 0h1v1h-1zm71 0h2v1h-2zm-433 1h1v1h-1zm143 0h1v1h-1zm115 0h1v1h-1zm106 0h1v1h-1zm62 0h2v1h-2zm9 0h2v1h-2zm-7 1h2v1h-2zm9 0h2v1h-2zm-423 1h2v1h-2zm127 0h1v1h-1zm118 0h1v1h-1zm107 0h1v1h-1zm64 0h2v1h-2zm9 0h1v1h-1zm-427 1h2v1h-2zm356 0h1v1h-1zm64 0h3v1h-3zm-422 1h2v1h-2zm129 0h1v1h-1zm121 0h1v1h-1zm110 0h1v1h-1zm54 0h2v1h-2zm11 0h2v1h-2zm-427 1h2v1h-2zm364 0h1v1h-1zm54 0h2v1h-2zm11 0h2v1h-2zm-431 1h2v1h-2zm10 0h2v1h-2zm122 0h1v1h-1zm122 0h1v1h-1zm168 0h3v1h-3zm-424 1h2v1h-2zm10 0h2v1h-2zm360 0h1v1h-1zm49 0h1v1h-1zm8 0h3v1h-3zm-428 1h1v1h-1zm9 0h2v1h-2zm124 0h1v1h-1zm125 0h1v1h-1zm115 0h1v1h-1zm48 0h2v1h-2zm10 0h2v1h-2zm-424 1h2v1h-2zm368 0h1v1h-1zm48 0h2v1h-2zm10 0h1v1h-1zm-428 1h2v1h-2zm9 0h2v1h-2zm117 0h1v1h-1zm128 0h1v1h-1zm118 0h1v1h-1zm48 0h2v1h-2zm-422 1h2v1h-2zm9 0h2v1h-2zm415 0h2v1h-2zm-425 1h1v1h-1zm8 0h2v1h-2zm120 0h1v1h-1zm130 0h1v1h-1zm119 0h1v1h-1zm50 0h2v1h-2zm-421 1h2v1h-2zm8 0h2v1h-2zm365 0h1v1h-1zm50 0h1v1h-1zm-425 1h2v1h-2zm8 0h2v1h-2zm114 0h1v1h-1zm133 0h1v1h-1zm155 0h1v1h-1zm-412 1h2v1h-2zm8 0h2v1h-2zm405 0h2v1h-2zm-407 1h2v1h-2zm116 0h1v1h-1zm136 0h1v1h-1zm157 0h2v1h-2zm-411 1h2v1h-2zm413 0h2v1h-2zm-415 1h2v1h-2zm118 0h1v1h-1zm139 0h1v1h-1zm151 0h1v1h-1zm9 0h2v1h-2zm-8 1h2v1h-2zm10 0h2v1h-2zm-404 1h1v1h-1zm102 0h1v1h-1zm140 0h1v1h-1zm154 0h2v1h-2zm10 0h2v1h-2zm-408 1h2v1h-2zm400 0h2v1h-2zm-402 1h2v1h-2zm104 0h1v1h-1zm143 0h1v1h-1zm149 0h2v1h-2zm8 0h2v1h-2zm-406 1h2v1h-2zm8 0h1v1h-1zm392 0h2v1h-2zm8 0h2v1h-2zm-409 1h1v1h-1zm7 0h2v1h-2zm98 0h1v1h-1zm146 0h1v1h-1zm152 0h1v1h-1zm8 0h2v1h-2zm-413 1h2v1h-2zm7 0h2v1h-2zm392 0h2v1h-2zm7 0h2v1h-2zm-408 1h2v1h-2zm7 0h2v1h-2zm101 0h1v1h-1zm148 0h1v1h-1zm147 0h2v1h-2zm7 0h2v1h-2zm-404 1h1v1h-1zm9 0h1v1h-1zm390 0h1v1h-1zm7 0h2v1h-2zm-408 1h2v1h-2zm9 0h2v1h-2zm93 0h1v1h-1zm151 0h1v1h-1zm149 0h2v1h-2zm8 0h1v1h-1zm-412 1h2v1h-2zm9 0h2v1h-2zm397 0h2v1h-2zm-399 1h2v1h-2zm8 0h1v1h-1zm87 0h1v1h-1zm154 0h1v1h-1zm152 0h2v1h-2zm-402 1h1v1h-1zm7 0h2v1h-2zm381 0h1v1h-1zm16 0h1v1h-1zm-406 1h2v1h-2zm8 0h1v1h-1zm88 0h1v1h-1zm156 0h1v1h-1zm139 0h2v1h-2zm-393 1h2v1h-2zm8 0h2v1h-2zm387 0h2v1h-2zm-389 1h2v1h-2zm91 0h1v1h-1zm158 0h1v1h-1zm142 0h1v1h-1zm-392 1h1v1h-1zm386 0h2v1h-2zm7 0h2v1h-2zm-395 1h2v1h-2zm92 0h1v1h-1zm161 0h1v1h-1zm137 0h1v1h-1zm7 0h2v1h-2zm-398 1h1v1h-1zm15 0h1v1h-1zm377 0h1v1h-1zm8 0h2v1h-2zm-387 1h2v1h-2zm78 0h1v1h-1zm164 0h1v1h-1zm131 0h1v1h-1zm7 0h2v1h-2zm9 0h1v1h-1zm-390 1h1v1h-1zm375 0h2v1h-2zm8 0h1v1h-1zm-385 1h2v1h-2zm8 0h1v1h-1zm72 0h1v1h-1zm166 0h1v1h-1zm133 0h1v1h-1zm7 0h1v1h-1zm-388 1h2v1h-2zm8 0h2v1h-2zm368 0h1v1h-1zm6 0h2v1h-2zm7 0h2v1h-2zm-390 1h1v1h-1zm8 0h1v1h-1zm73 0h1v1h-1zm169 0h1v1h-1zm128 0h2v1h-2zm7 0h2v1h-2zm7 0h1v1h-1zm-394 1h2v1h-2zm9 0h1v1h-1zm6 0h1v1h-1zm367 0h1v1h-1zm7 0h1v1h-1zm-382 1h2v1h-2zm6 0h2v1h-2zm68 0h1v1h-1zm171 0h1v1h-1zm131 0h1v1h-1zm7 0h2v1h-2zm-384 1h1v1h-1zm6 0h1v1h-1zm372 0h2v1h-2zm8 0h1v1h-1zm-387 1h1v1h-1zm6 0h1v1h-1zm6 0h1v1h-1zm62 0h1v1h-1zm174 0h1v1h-1zm133 0h1v1h-1zm-383 1h2v1h-2zm6 0h2v1h-2zm6 0h2v1h-2zm108 0h1v1h-1zm251 0h1v1h-1zm13 0h1v1h-1zm-379 1h1v1h-1zm6 0h1v1h-1zm64 0h1v1h-1zm44 0h1v2h-1zm132 0h1v1h-1zm121 0h1v1h-1zm13 0h2v1h-2zm-381 1h1v1h-1zm6 0h1v1h-1zm363 0h2v1h-2zm-371 1h2v1h-2zm6 0h2v1h-2zm65 0h1v1h-1zm45 0h1v2h-1zm134 0h1v1h-1zm116 0h1v1h-1zm7 0h1v1h-1zm-368 1h1v1h-1zm362 0h1v1h-1zm7 0h1v1h-1zm-370 1h1v1h-1zm13 0h1v1h-1zm52 0h1v1h-1zm46 0h1v2h-1zm136 0h1v1h-1zm117 0h2v1h-2zm7 0h1v1h-1zm-373 1h2v1h-2zm14 0h1v1h-1zm348 0h1v1h-1zm6 0h1v1h-1zm6 0h1v1h-1zm-361 1h1v1h-1zm53 0h1v1h-1zm46 0h1v2h-1zm138 0h1v1h-1zm113 0h1v1h-1zm6 0h1v1h-1zm6 0h2v1h-2zm-363 1h1v1h-1zm6 0h1v1h-1zm346 0h1v1h-1zm6 0h1v1h-1zm7 0h1v1h-1zm-367 1h2v1h-2zm7 0h1v1h-1zm47 0h1v1h-1zm47 0h1v2h-1zm140 0h1v1h-1zm108 0h1v1h-1zm6 0h1v1h-1zm6 0h1v1h-1zm-362 1h1v1h-1zm6 0h2v1h-2zm345 0h1v1h-1zm6 0h1v1h-1zm6 0h2v1h-2zm-364 1h1v1h-1zm6 0h1v1h-1zm6 0h1v1h-1zm90 0h1v1h-1zm141 0h1v1h-1zm110 0h2v1h-2zm6 0h2v1h-2zm7 0h1v1h-1zm-367 1h1v1h-1zm6 0h1v1h-1zm6 0h1v1h-1zm344 0h1v1h-1zm6 0h1v1h-1zm-363 1h1v1h-1zm6 0h1v1h-1zm6 0h1v1h-1zm234 0h1v1h-1zm112 0h1v1h-1zm6 0h1v1h-1zm-365 1h1v1h-1zm6 0h1v1h-1zm6 0h1v1h-1zm6 0h1v1h-1zm342 0h1v1h-1zm6 0h1v1h-1zm-362 1h2v1h-2zm6 0h2v1h-2zm7 0h1v1h-1zm231 0h1v1h-1zm101 0h1v1h-1zm12 0h1v1h-1zm6 0h1v1h-1zm-364 1h1v1h-1zm6 0h1v1h-1zm7 0h1v1h-1zm334 0h1v1h-1zm12 0h2v1h-2zm-354 1h1v1h-1zm7 0h1v1h-1zm234 0h1v1h-1zm102 0h1v1h-1zm13 0h1v1h-1zm-357 1h1v1h-1zm6 0h2v1h-2zm333 0h1v1h-1zm6 0h1v1h-1zm-346 1h1v1h-1zm6 0h1v1h-1zm238 0h1v1h-1zm97 0h1v1h-1zm6 0h1v1h-1zm-348 1h1v1h-1zm6 0h1v1h-1zm12 0h1v1h-1zm325 0h1v1h-1zm6 0h2v1h-2zm-344 1h1v1h-1zm12 0h1v1h-1zm229 0h1v1h-1zm93 0h1v1h-1zm5 0h1v1h-1zm7 0h1v1h-1zm-347 1h1v1h-1zm12 0h1v1h-1zm324 0h1v1h-1zm5 0h1v1h-1zm7 0h1v1h-1zm-349 1h1v1h-1zm12 0h1v1h-1zm6 0h1v1h-1zm225 0h1v1h-1zm95 0h1v1h-1zm5 0h2v1h-2zm7 0h1v1h-1zm-339 1h1v1h-1zm6 0h1v1h-1zm316 0h1v1h-1zm6 0h1v1h-1zm6 0h1v1h-1zm6 0h1v1h-1zm-341 1h1v1h-1zm6 0h1v1h-1zm5 0h1v1h-1zm223 0h1v1h-1zm90 0h1v1h-1zm6 0h1v1h-1zm6 0h1v1h-1zm-337 1h1v1h-1zm6 0h1v1h-1zm5 0h1v1h-1zm315 0h1v1h-1zm6 0h1v1h-1zm6 0h1v1h-1zm-339 1h1v1h-1zm6 0h1v1h-1zm5 0h1v1h-1zm226 0h1v1h-1zm91 0h1v1h-1zm6 0h1v1h-1zm6 0h1v1h-1zm-341 1h1v1h-1zm6 0h1v1h-1zm5 0h1v1h-1zm6 0h1v1h-1zm313 0h1v1h-1zm6 0h1v1h-1zm-337 1h1v1h-1zm6 0h1v1h-1zm5 0h1v1h-1zm6 0h1v1h-1zm223 0h1v1h-1zm81 0h1v1h-1zm11 0h1v1h-1zm6 0h1v1h-1zm-333 1h1v1h-1zm5 0h1v2h-1zm6 0h1v1h-1zm306 0h1v1h-1zm11 0h1v1h-1zm6 0h1v1h-1zm-335 1h1v1h-1zm11 0h1v1h-1zm226 0h1v1h-1zm82 0h1v1h-1zm11 0h1v1h-1zm-331 1h1v1h-1zm6 0h1v1h-1zm5 0h1v1h-1zm304 0h1v1h-1zm6 0h1v1h-1zm11 0h1v1h-1zm-327 1h1v1h-1zm5 0h1v2h-1zm11 0h1v1h-1zm218 0h1v1h-1zm77 0h1v1h-1zm6 0h1v1h-1zm11 0h1v1h-1zm-329 1h1v1h-1zm16 0h1v1h-1zm292 0h1v1h-1zm5 0h1v1h-1zm6 0h1v2h-1zm-320 1h1v1h-1zm6 0h1v1h-1zm10 0h1v2h-1zm220 0h1v1h-1zm74 0h1v1h-1zm5 0h1v1h-1zm-310 1h1v1h-1zm16 0h1v1h-1zm290 0h1v2h-1zm5 0h1v1h-1zm5 0h1v1h-1zm-317 1h1v1h-1zm11 0h1v1h-1zm5 0h1v1h-1zm217 0h1v1h-1zm69 0h1v1h-1zm11 0h1v2h-1zm5 0h1v1h-1zm-319 1h1v1h-1zm11 0h1v1h-1zm5 0h1v1h-1zm5 0h1v1h-1zm283 0h1v1h-1zm5 0h1v1h-1zm11 0h1v1h-1zm-310 1h1v1h-1zm5 0h1v1h-1zm5 0h1v1h-1zm215 0h1v1h-1zm70 0h1v1h-1zm5 0h1v1h-1zm5 0h1v1h-1zm6 0h1v1h-1zm-312 1h1v1h-1zm5 0h1v1h-1zm5 0h1v2h-1zm287 0h1v1h-1zm5 0h1v1h-1zm5 0h1v1h-1zm-308 1h1v2h-1zm5 0h1v2h-1zm11 0h1v1h-1zm212 0h1v1h-1zm71 0h1v1h-1zm5 0h1v1h-1zm5 0h1v1h-1zm-299 1h1v1h-1zm5 0h1v1h-1zm274 0h1v1h-1zm11 0h1v2h-1zm5 0h1v2h-1zm5 0h1v1h-1zm-311 1h1v1h-1zm5 0h1v1h-1zm5 0h1v1h-1zm5 0h1v2h-1zm276 0h1v2h-1zm-287 1h1v1h-1zm5 0h1v1h-1zm278 0h1v1h-1zm15 0h1v1h-1zm5 0h1v1h-1zm-304 1h1v1h-1zm5 0h1v1h-1zm6 0h1v1h-1zm274 0h1v2h-1zm4 0h1v1h-1zm11 0h1v1h-1zm-301 1h1v1h-1zm5 0h1v2h-1zm6 0h1v1h-1zm10 0h1v1h-1zm261 0h1v1h-1zm9 0h1v1h-1zm11 0h1v1h-1zm-292 1h1v1h-1zm10 0h1v2h-1zm263 0h1v2h-1zm4 0h1v1h-1zm5 0h1v2h-1zm11 0h1v1h-1zm-299 1h1v1h-1zm5 0h1v1h-1zm15 0h1v1h-1zm264 0h1v1h-1zm-280 1h1v2h-1zm11 0h1v1h-1zm4 0h1v2h-1zm256 0h1v1h-1zm5 0h1v1h-1zm5 0h1v2h-1zm4 0h1v1h-1zm-275 1h1v1h-1zm262 0h1v2h-1zm5 0h1v1h-1zm9 0h1v1h-1zm-287 1h1v1h-1zm10 0h1v2h-1zm5 0h1v1h-1zm5 0h1v2h-1zm259 0h1v2h-1zm4 0h1v1h-1zm5 0h1v2h-1zm-274 1h1v2h-1zm10 0h1v1h-1zm250 0h1v1h-1zm10 0h1v1h-1zm-275 1h1v1h-1zm10 0h1v1h-1zm4 0h1v2h-1zm242 0h1v1h-1zm10 0h1v2h-1zm5 0h1v1h-1zm5 0h1v2h-1zm-277 1h1v1h-1zm5 0h1v2h-1zm5 0h1v1h-1zm248 0h1v2h-1zm15 0h1v1h-1zm-274 1h1v2h-1zm10 0h1v2h-1zm5 0h1v2h-1zm240 0h1v1h-1zm14 0h1v2h-1zm6 0h1v2h-1zm-270 1h1v1h-1zm251 0h1v2h-1zm4 0h1v1h-1zm-256 1h1v2h-1zm5 0h1v1h-1zm5 0h1v1h-1zm9 0h1v2h-1zm228 0h1v1h-1zm10 0h1v2h-1zm9 0h1v1h-1zm-262 1h1v1h-1zm5 0h1v2h-1zm239 0h1v2h-1zm5 0h1v2h-1zm14 0h1v2h-1zm-268 1h1v1h-1zm4 0h1v2h-1zm15 0h1v2h-1zm4 0h1v2h-1zm222 0h1v1h-1zm14 0h1v2h-1zm-250 1h1v2h-1zm18 0h1v1h-1zm219 0h1v2h-1zm4 0h1v2h-1zm5 0h1v1h-1zm-252 1h1v1h-1zm15 0h1v1h-1zm4 0h1v2h-1zm4 0h1v2h-1zm230 0h1v2h-1zm4 0h1v1h-1zm-252 1h1v2h-1zm9 0h1v2h-1zm14 0h1v1h-1zm216 0h1v2h-1zm4 0h1v1h-1zm10 0h1v2h-1zm-240 1h1v1h-1zm4 0h1v2h-1zm5 0h1v2h-1zm208 0h1v1h-1zm14 0h1v2h-1zm5 0h1v2h-1zm-250 1h1v1h-1zm9 0h1v2h-1zm4 0h1v2h-1zm219 0h1v2h-1zm9 0h1v1h-1zm14 0h1v1h-1zm-238 1h1v2h-1zm5 0h1v2h-1zm206 0h1v2h-1zm14 0h1v2h-1zm4 0h1v2h-1zm5 0h1v2h-1zm-243 1h1v2h-1zm4 0h1v2h-1zm19 0h1v1h-1zm193 0h1v1h-1zm9 0h1v2h-1zm-217 1h1v2h-1zm5 0h1v2h-1zm9 0h1v2h-1zm4 0h1v2h-1zm191 0h1v2h-1zm4 0h1v2h-1zm14 0h1v2h-1zm4 0h1v2h-1zm-240 1h1v1h-1zm4 0h1v2h-1zm209 0h1v1h-1zm14 0h1v2h-1zm-219 1h1v2h-1zm5 0h1v2h-1zm9 0h1v2h-1zm4 0h1v2h-1zm5 0h1v2h-1zm183 0h1v2h-1zm5 0h1v2h-1zm4 0h1v2h-1zm14 0h1v2h-1zm-234 1h1v1h-1zm225 0h1v2h-1zm-221 1h1v2h-1zm5 0h1v2h-1zm9 0h1v2h-1zm4 0h1v3h-1zm5 0h1v2h-1zm5 0h1v1h-1zm180 0h1v2h-1zm5 0h1v2h-1zm4 0h1v2h-1zm-190 1h1v2h-1zm172 0h1v1h-1zm23 0h1v2h-1zm-218 1h1v2h-1zm9 0h1v2h-1zm9 0h1v2h-1zm13 0h1v2h-1zm160 0h1v1h-1zm5 0h1v2h-1zm9 0h1v2h-1zm5 0h1v2h-1zm4 0h1v2h-1zm-201 1h1v3h-1zm9 0h1v2h-1zm166 0h1v2h-1zm4 0h1v2h-1zm27 0h1v1h-1zm-211 1h1v2h-1zm9 0h1v3h-1zm13 0h1v2h-1zm5 0h1v2h-1zm149 0h1v2h-1zm13 0h1v3h-1zm9 0h1v2h-1zm5 0h1v2h-1zm4 0h1v2h-1zm-194 1h1v2h-1zm17 0h1v2h-1zm151 0h1v2h-1zm4 0h1v3h-1zm-186 1h1v1h-1zm5 0h1v2h-1zm17 0h1v3h-1zm5 0h1v2h-1zm8 0h1v2h-1zm143 0h1v2h-1zm22 0h1v2h-1zm5 0h1v2h-1zm-196 1h1v2h-1zm4 0h1v2h-1zm17 0h1v3h-1zm140 0h1v2h-1zm13 0h1v3h-1zm8 0h1v3h-1zm-187 1h1v1h-1zm22 0h1v3h-1zm8 0h1v3h-1zm9 0h1v2h-1zm123 0h1v2h-1zm13 0h1v3h-1zm8 0h1v3h-1zm14 0h1v2h-1zm-193 1h1v2h-1zm4 0h1v2h-1zm9 0h1v3h-1zm25 0h1v3h-1zm116 0h1v2h-1zm9 0h1v3h-1zm-142 1h1v4h-1zm13 0h1v4h-1zm8 0h1v3h-1zm108 0h1v2h-1zm9 0h1v3h-1zm17 0h1v3h-1zm8 0h1v2h-1zm-181 1h1v2h-1zm14 0h1v3h-1zm8 0h1v4h-1zm21 0h1v3h-1zm109 0h1v3h-1zm17 0h1v3h-1zm8 0h1v2h-1zm-168 1h1v2h-1zm25 0h1v4h-1zm102 0h1v4h-1zm4 0h1v3h-1zm8 0h1v3h-1zm13 0h1v4h-1zm21 0h1v1h-1zm-144 1h1v4h-1zm13 0h1v3h-1zm81 0h1v4h-1zm25 0h1v4h-1zm17 0h1v2h-1zm4 0h1v2h-1zm-170 1h1v2h-1zm5 0h1v2h-1zm4 0h1v3h-1zm13 0h1v3h-1zm12 0h1v4h-1zm13 0h1v3h-1zm73 0h1v4h-1zm25 0h1v4h-1zm17 0h1v2h-1zm-149 1h1v3h-1zm38 0h1v2h-1zm3 0h1v7h-1zm58 0h1v4h-1zm21 0h1v4h-1zm8 0h1v4h-1zm26 0h1v1h-1zm-163 1h1v1h-1zm21 0h1v5h-1zm17 0h1v4h-1zm20 0h1v7h-1zm4 0h1v7h-1zm4 0h1v7h-1zm31 0h1v7h-1zm3 0h1v4h-1zm4 0h1v3h-1zm21 0h1v7h-1zm25 0h1v3h-1zm9 0h1v2h-1zm-155 1h1v1h-1zm13 0h1v4h-1zm8 0h1v5h-1zm17 0h1v4h-1zm4 0h1v4h-1zm24 0h1v7h-1zm8 0h1v14h-1zm3 0h1v14h-1zm4 0h1v14h-1zm4 0h1v14h-1zm32 0h1v7h-1zm25 0h1v3h-1zm-138 1h1v2h-1zm21 0h1v5h-1zm88 0h1v6h-1zm25 0h1v3h-1zm-37 1h1v7h-1zm4 0h1v7h-1zm21 0h1v4h-1zm8 0h1v3h-1zm13 0h1v1h-1zm-114 1h1v4h-1zm64 0h1v6h-1zm46 0h1v2h-1zm-131 1h1v1h-1zm4 0h1v2h-1zm21 0h1v4h-1zm4 0h1v5h-1zm98 0h1v2h-1zm-119 1h1v2h-1zm25 0h1v7h-1zm90 0h1v2h-1zm-111 1h1v2h-1zm29 0h1v7h-1zm4 0h1v7h-1zm4 0h1v7h-1zm33 0h1v7h-1zm28 0h1v3h-1zm5 0h1v2h-1zm-95 1h1v3h-1zm33 0h1v7h-1zm49 0h1v4h-1zm4 0h1v3h-1zm-82 1h1v2h-1zm4 1h1v2h-1zm58 0h1v4h-1zm4 0h1v4h-1zm4 0h1v3h-1z"/>
<path fill="#00f" d="m366 40h1v1h-1zm16 0h1v1h-1zm-15 1h1v1h-1zm14 0h1v1h-1zm-13 1h1v1h-1zm12 0h1v1h-1zm-11 1h1v2h-1zm10 0h1v2h-1zm-9 2h1v7h-1zm8 0h1v7h-1zm-12 3h4v1h-4zm5 0h7v1h-7zm8 0h4v1h-4zm-10 4h1v2h-1zm10 0h1v2h-1zm-11 2h1v1h-1zm12 0h1v1h-1zm-13 1h1v1h-1zm14 0h1v1h-1zm-15 1h1v1h-1zm16 0h1v1h-1zm362 80h1v1h-1zm2 0h1v1h-1zm2 0h1v1h-1zm-3 1h1v7h-1zm2 0h1v7h-1zm2 0h1v6h-1zm2 0h1v6h-1zm-1 1h1v1h-1zm0 5h1v1h-1zm-1 1h1v1h-1zm2 0h1v1h-1zm-334 17h1v5h-1zm6 0h1v17h-1zm6 0h1v5h-1zm-13 2h1v1h-1zm2 0h1v1h-1zm3 0h2v1h-2zm3 0h2v1h-2zm4 0h1v1h-1zm2 0h1v1h-1zm-12 3h1v2h-1zm10 0h1v2h-1zm-9 2h2v1h-2zm7 0h2v1h-2zm-5 1h2v1h-2zm3 0h2v1h-2zm-5 4h4v1h-4zm5 0h4v1h-4zm321 3h1v5h-1zm3 0h1v2h-1zm2 0h2v1h-2zm-380 1h1v1h-1zm374 0h1v1h-1zm5 0h1v2h-1zm3 0h1v2h-1zm-5 1h1v3h-1zm-378 1h1v1h-1zm381 0h2v1h-2zm1 1h1v1h-1zm-383 1h1v1h-1zm7 0h1v1h-1zm371 0h1v3h-1zm6 0h1v3h-1zm-359 1h1v1h-1zm-26 1h1v1h-1zm6 1h1v1h-1zm378 0h1v1h-1zm-387 3h1v1h-1zm8 0h1v1h-1zm-9 2h1v1h-1zm7 1h1v1h-1zm-8 1h1v1h-1zm-1 2h1v1h-1zm7 0h1v1h-1zm-8 2h1v1h-1zm6 1h1v1h-1zm-7 1h1v1h-1zm-1 2h1v1h-1zm7 0h1v1h-1zm-8 2h1v1h-1zm6 1h1v1h-1zm-8 1h1v1h-1zm-1 2h1v1h-1zm7 0h1v1h-1zm-8 2h1v1h-1zm6 1h1v1h-1zm-7 1h1v1h-1zm-1 2h1v1h-1zm7 0h1v1h-1zm-8 2h1v1h-1zm6 1h1v1h-1zm-7 1h1v1h-1zm396 1h1v1h-1zm6 0h1v1h-1zm-403 1h1v1h-1zm6 0h1v1h-1zm392 0h1v1h-1zm4 0h1v1h-1zm-3 1h3v1h-3zm-400 1h1v1h-1zm399 0h1v1h-1zm4 0h1v1h-1zm-398 1h1v1h-1zm393 0h1v3h-1zm6 0h1v3h-1zm-405 1h1v1h-1zm-2 2h1v1h-1zm7 0h1v1h-1zm395 0h1v1h-1zm4 0h1v1h-1zm-3 1h3v1h-3zm-404 1h1v1h-1zm6 1h1v1h-1zm-7 1h1v1h-1zm-1 2h1v1h-1zm6 0h1v1h-1zm-7 2h1v1h-1zm5 1h1v1h-1zm-6 1h1v1h-1zm-1 2h1v1h-1zm6 0h1v1h-1zm-7 2h1v1h-1zm5 1h1v1h-1zm-6 1h1v1h-1zm-2 2h1v1h-1zm6 0h1v1h-1zm-7 2h1v1h-1zm5 1h1v1h-1zm-6 1h1v1h-1zm414 1h3v1h-3zm-415 1h1v1h-1zm6 0h1v1h-1zm408 0h1v1h-1zm4 0h2v1h-2zm-3 1h1v1h-1zm4 0h1v1h-1zm-420 1h1v1h-1zm417 0h1v3h-1zm4 0h1v3h-1zm-416 1h1v1h-1zm-6 1h1v1h-1zm417 1h1v1h-1zm4 0h1v2h-1zm-422 1h1v1h-1zm5 0h1v1h-1zm412 0h1v1h-1zm4 0h1v1h-1zm-3 1h3v1h-3zm-419 1h1v1h-1zm-208 1h5v1h-5zm212 0h1v1h-1zm-213 1h1v1h-1zm6 0h2v1h-2zm202 0h1v1h-1zm-209 1h1v1h-1zm9 0h1v1h-1zm-8 1h1v1h-1zm9 0h1v1h-1zm197 0h1v1h-1zm6 0h1v1h-1zm-211 1h1v1h-1zm9 0h1v2h-1zm-8 1h1v2h-1zm203 0h1v1h-1zm-194 1h1v5h-1zm199 0h1v1h-1zm-207 1h1v3h-1zm201 0h1v1h-1zm-1 2h1v1h-1zm5 0h1v1h-1zm-206 1h1v2h-1zm8 1h1v2h-1zm192 0h1v1h-1zm-201 1h1v1h-1zm205 0h1v1h-1zm-206 1h1v1h-1zm9 0h1v1h-1zm192 0h1v1h-1zm-202 1h1v1h-1zm9 0h1v1h-1zm26 0h1v1h-1zm-34 1h1v1h-1zm6 0h2v1h-2zm194 0h1v1h-1zm5 0h1v1h-1zm-204 1h5v1h-5zm198 1h1v1h-1zm4 1h1v1h-1zm-5 1h1v1h-1zm-1 2h1v1h-1zm4 0h1v1h-1zm-6 2h1v1h-1zm4 1h1v1h-1zm-5 1h1v1h-1zm-1 2h1v1h-1zm5 0h1v1h-1zm-6 2h1v1h-1zm4 1h1v1h-1zm-5 1h1v1h-1zm-1 2h1v1h-1zm4 0h1v1h-1zm-5 2h1v1h-1zm3 1h1v1h-1zm163 0h1v5h-1zm5 0h3v1h-3zm7 0h1v5h-1zm-179 1h1v1h-1zm171 0h1v3h-1zm4 0h1v3h-1zm-176 2h1v1h-1zm4 0h1v1h-1zm169 1h3v1h-3zm-175 1h1v1h-1zm171 0h1v2h-1zm10 0h1v2h-1zm-177 1h1v1h-1zm-5 1h1v1h-1zm173 0h2v1h-2zm7 0h2v1h-2zm-87 1h1v1h-1zm2 0h1v1h-1zm2 0h1v1h-1zm2 0h1v1h-1zm2 0h1v1h-1zm2 0h1v1h-1zm2 0h1v1h-1zm2 0h1v1h-1zm2 0h1v1h-1zm2 0h1v1h-1zm2 0h1v1h-1zm2 0h1v1h-1zm2 0h1v1h-1zm2 0h1v1h-1zm2 0h1v1h-1zm2 0h1v1h-1zm2 0h1v1h-1zm2 0h1v1h-1zm2 0h1v1h-1zm2 0h1v1h-1zm2 0h1v1h-1zm2 0h1v1h-1zm2 0h1v1h-1zm2 0h1v1h-1zm8 0h1v1h-1zm28 0h5v1h-5zm-178 1h1v1h-1zm2 0h1v1h-1zm2 0h1v1h-1zm2 0h1v1h-1zm2 0h1v1h-1zm2 0h1v1h-1zm2 0h1v1h-1zm2 0h1v1h-1zm2 0h1v1h-1zm2 0h1v1h-1zm2 0h1v1h-1zm2 0h1v1h-1zm2 0h1v1h-1zm2 0h1v1h-1zm2 0h1v1h-1zm2 0h1v1h-1zm2 0h1v1h-1zm2 0h1v1h-1zm2 0h1v1h-1zm2 0h1v1h-1zm2 0h1v1h-1zm2 0h1v1h-1zm2 0h1v1h-1zm2 0h1v1h-1zm2 0h1v1h-1zm2 0h1v1h-1zm2 0h1v1h-1zm2 0h1v1h-1zm2 0h1v1h-1zm2 0h1v1h-1zm2 0h1v1h-1zm2 0h1v1h-1zm2 0h1v1h-1zm2 0h1v1h-1zm2 0h1v1h-1zm2 0h1v1h-1zm2 0h1v1h-1zm2 0h1v1h-1zm2 0h1v1h-1zm2 0h1v1h-1zm2 0h1v1h-1zm2 0h1v1h-1zm2 0h1v1h-1zm2 0h1v1h-1zm2 0h1v1h-1zm2 0h1v1h-1zm2 0h1v1h-1zm2 0h1v1h-1zm86 0h1v8h-1zm-276 1h1v1h-1zm2 0h1v1h-1zm2 0h1v1h-1zm2 0h1v1h-1zm2 0h1v1h-1zm2 0h1v1h-1zm2 0h1v1h-1zm2 0h1v1h-1zm2 0h1v1h-1zm2 0h1v1h-1zm2 0h1v1h-1zm2 0h1v1h-1zm2 0h1v1h-1zm2 0h1v1h-1zm2 0h1v1h-1zm2 0h1v1h-1zm2 0h1v1h-1zm2 0h1v1h-1zm2 0h1v1h-1zm2 0h1v1h-1zm2 0h1v1h-1zm2 0h1v1h-1zm2 0h1v1h-1zm2 0h1v1h-1zm2 0h1v1h-1zm2 0h1v1h-1zm2 0h1v1h-1zm2 0h1v1h-1zm2 0h1v1h-1zm2 0h1v1h-1zm2 0h1v1h-1zm2 0h1v1h-1zm2 0h1v1h-1zm2 0h1v1h-1zm2 0h1v1h-1zm2 0h1v1h-1zm2 0h1v1h-1zm2 0h1v1h-1zm2 0h1v1h-1zm2 0h1v1h-1zm2 0h1v1h-1zm2 0h1v1h-1zm2 0h1v1h-1zm2 0h1v1h-1zm2 0h1v1h-1zm2 0h1v1h-1zm2 0h1v1h-1zm2 0h1v1h-1zm-140 1h1v1h-1zm2 0h1v1h-1zm2 0h1v1h-1zm2 0h1v1h-1zm2 0h1v1h-1zm2 0h1v1h-1zm2 0h1v1h-1zm2 0h1v1h-1zm2 0h1v1h-1zm2 0h1v1h-1zm2 0h1v1h-1zm2 0h1v1h-1zm2 0h1v1h-1zm2 0h1v1h-1zm2 0h1v1h-1zm2 0h1v1h-1zm2 0h1v1h-1zm2 0h1v1h-1zm2 0h1v1h-1zm2 0h1v1h-1zm2 0h1v1h-1zm2 0h1v1h-1zm2 0h1v1h-1zm99 0h1v1h-1zm3 1h1v1h-1zm172 0h4v1h-4zm5 0h4v1h-4zm-181 1h1v1h-1zm-1 2h1v1h-1zm4 0h1v1h-1zm-5 2h1v1h-1zm3 1h1v1h-1zm-4 1h1v1h-1zm-1 2h1v1h-1zm3 0h1v1h-1zm-5 2h1v1h-1zm3 1h1v1h-1zm449 0h1v3h-1zm3 0h1v9h-1zm3 0h1v3h-1zm-459 1h1v1h-1zm452 0h1v1h-1zm3 0h1v1h-1zm2 0h1v1h-1zm3 0h1v1h-1zm-461 2h1v1h-1zm4 0h1v1h-1zm451 0h1v1h-1zm4 0h1v1h-1zm-3 1h1v1h-1zm2 0h1v1h-1zm-459 1h1v1h-1zm3 1h1v1h-1zm453 0h2v1h-2zm3 0h2v1h-2zm-460 1h1v1h-1zm-1 2h1v1h-1zm3 0h1v1h-1zm454 1h1v3h-1zm3 0h1v1h-1zm3 0h1v3h-1zm-464 1h1v1h-1zm460 0h1v1h-1zm2 0h1v1h-1zm-460 1h1v1h-1zm459 0h1v1h-1zm-462 1h1v1h-1zm460 0h1v1h-1zm4 0h1v1h-1zm-3 1h3v1h-3zm-462 1h1v1h-1zm3 0h1v1h-1zm460 0h1v4h-1zm-2 1h2v1h-2zm3 0h2v1h-2zm-465 1h1v1h-1zm2 1h1v1h-1zm-4 1h1v1h-1zm-1 2h1v1h-1zm3 0h1v1h-1zm-4 2h1v1h-1zm2 1h1v1h-1zm-3 1h1v1h-1zm-1 2h1v1h-1zm3 0h1v1h-1zm-4 2h1v1h-1zm2 1h1v1h-1zm-3 1h1v1h-1zm-1 2h1v1h-1zm2 0h1v1h-1zm-3 2h1v1h-1zm-232 1h5v1h-5zm233 0h1v1h-1zm-236 1h3v1h-3zm8 0h1v1h-1zm225 0h1v1h-1zm-234 1h1v1h-1zm10 0h3v1h-3zm-11 1h1v1h-1zm10 0h1v1h-1zm4 0h1v1h-1zm220 0h1v1h-1zm3 0h1v1h-1zm-238 1h1v1h-1zm10 0h1v3h-1zm6 0h1v3h-1zm218 1h1v1h-1zm-232 1h3v1h-3zm234 0h1v1h-1zm-235 1h1v1h-1zm4 0h1v1h-1zm6 0h1v1h-1zm4 0h1v1h-1zm218 0h1v1h-1zm-233 1h1v3h-1zm6 0h1v3h-1zm6 0h3v1h-3zm220 1h1v1h-1zm2 0h1v1h-1zm-218 1h1v1h-1zm-15 1h1v1h-1zm4 0h1v1h-1zm10 0h1v1h-1zm216 0h1v1h-1zm-229 1h3v1h-3zm12 0h1v1h-1zm218 0h1v1h-1zm-227 1h1v1h-1zm6 0h3v1h-3zm219 0h1v1h-1zm-224 1h5v1h-5zm223 1h2v1h-2zm-1 2h1v1h-1zm1 1h1v1h-1zm-3 1h1v1h-1zm-1 2h1v1h-1zm2 0h1v1h-1zm-3 2h1v1h-1zm1 1h1v1h-1zm-2 1h1v1h-1zm-1 2h2v1h-2zm-1 2h1v1h-1zm1 1h1v1h-1zm-2 1h1v1h-1zm-1 2h2v1h-2zm-1 2h1v2h-1zm-2 2h1v1h-1zm-1 2h2v1h-2zm-1 2h1v1h-1zm1 1h1v1h-1zm-2 1h1v1h-1zm-1 2h2v1h-2zm-1 2h1v2h-1zm-1 2h1v1h-1zm-1 2h1v1h-1zm-1 2h1v2h-1zm-1 2h1v1h-1zm-2 2h2v1h-2zm-1 2h1v2h-1zm-1 2h1v1h-1zm-1 2h1v1h-1zm-1 2h1v2h-1zm-1 2h1v1h-1zm-1 2h1v1h-1zm-1 2h1v1h-1zm-1 1h1v2h-1zm238 58h1v1h-1zm4 0h1v1h-1zm4 0h1v1h-1zm-7 1h1v1h-1zm2 0h1v1h-1zm2 0h1v1h-1zm2 0h1v1h-1zm2 0h1v1h-1zm-7 1h1v13h-1zm4 0h1v13h-1zm4 0h1v13h-1zm5 9h1v4h-1zm-1 1h1v1h-1zm2 0h1v1h-1zm-5 3h1v1h-1zm3 0h1v1h-1zm-2 1h2v1h-2z"/>
<path fill="#0ff" d="m322 160h1v1h-1zm9 0h1v1h-1zm1 1h1v1h-1zm1 1h1v1h-1zm1 1h1v1h-1zm-8 1h1v1h-1zm9 0h1v1h-1zm1 1h1v1h-1zm1 1h2v1h-2zm-7 1h1v1h-1zm9 0h1v1h-1zm1 1h1v1h-1zm1 1h1v1h-1zm1 1h1v1h-1zm-8 1h1v1h-1zm9 0h1v1h-1zm1 1h1v1h-1zm1 1h1v1h-1zm-7 1h1v1h-1zm8 0h1v1h-1zm1 1h1v1h-1zm1 1h1v1h-1zm24 0h1v2h-1zm-23 1h1v1h-1zm-7 1h1v1h-1zm8 0h1v1h-1zm23 0h1v2h-1zm-22 1h1v1h-1zm1 1h2v1h-2zm26 0h1v1h-1zm-32 1h1v1h-1zm8 0h1v1h-1zm20 0h1v1h-1zm-19 1h1v1h-1zm20 0h1v1h-1zm4 0h1v1h-1zm-23 1h1v1h-1zm20 0h1v2h-1zm-26 1h1v1h-1zm7 0h1v1h-1zm23 0h1v1h-1zm-22 1h1v1h-1zm19 0h1v2h-1zm-18 1h1v1h-1zm22 0h1v1h-1zm-21 1h1v1h-1zm18 0h1v2h-1zm-24 1h1v1h-1zm7 0h1v1h-1zm21 0h1v1h-1zm-20 1h1v1h-1zm17 0h1v1h-1zm-16 1h1v1h-1zm20 0h1v1h-1zm-25 1h1v1h-1zm6 0h1v1h-1zm16 0h1v1h-1zm-15 1h1v1h-1zm16 0h1v2h-1zm4 0h1v1h-1zm-19 1h1v1h-1zm1 1h1v1h-1zm15 0h1v1h-1zm4 0h1v1h-1zm-24 1h1v1h-1zm6 0h2v1h-2zm15 0h1v2h-1zm-13 1h1v1h-1zm17 0h1v1h-1zm-16 1h1v1h-1zm13 0h1v2h-1zm-18 1h1v1h-1zm6 0h1v1h-1zm16 0h1v1h-1zm-15 1h1v1h-1zm12 0h1v2h-1zm-11 1h1v1h-1zm15 0h1v1h-1zm-14 1h1v1h-1zm11 0h1v1h-1zm-16 1h1v1h-1zm6 0h1v1h-1zm11 0h1v2h-1zm3 0h1v1h-1zm-13 1h1v1h-1zm1 1h1v1h-1zm10 0h1v2h-1zm3 0h1v1h-1zm-17 1h1v1h-1zm5 0h1v1h-1zm1 1h1v1h-1zm9 0h1v2h-1zm3 0h1v1h-1zm-11 1h1v1h-1zm-3 1h1v1h-1zm4 0h1v1h-1zm8 0h1v1h-1zm3 0h1v1h-1zm-10 1h2v1h-2zm8 0h1v2h-1zm-6 1h1v1h-1zm9 0h1v1h-1zm-8 1h1v1h-1zm6 0h1v2h-1zm-10 1h1v1h-1zm5 0h1v1h-1zm8 0h1v1h-1zm-7 1h1v1h-1zm5 0h1v2h-1zm-4 1h1v1h-1zm7 0h1v1h-1zm-10 1h1v1h-1zm4 0h1v1h-1zm4 0h1v1h-1zm-3 1h1v1h-1zm4 0h1v2h-1zm3 0h1v1h-1zm-6 1h1v1h-1zm1 1h1v1h-1zm3 0h1v2h-1zm3 0h1v1h-1zm-9 1h1v1h-1zm4 0h1v1h-1zm1 1h1v1h-1zm2 0h1v3h-1zm3 0h1v1h-1zm-4 1h1v1h-1zm-2 1h1v1h-1zm4 0h1v2h-1zm3 0h1v1h-1zm-2 1h1v2h-1zm1 1h1v3h-1zm2 0h1v1h-1zm-1 1h1v1h-1zm-3 1h1v1h-1zm4 0h2v1h-2zm-1 1h1v1h-1zm2 0h1v1h-1zm-1 1h1v2h-1zm2 0h1v1h-1zm1 1h1v2h-1zm-2 1h1v2h-1zm3 0h1v1h-1zm1 1h1v1h-1zm-3 1h1v2h-1zm2 0h1v1h-1zm2 0h1v1h-1zm1 1h1v1h-1zm-4 1h1v1h-1zm2 0h1v1h-1zm3 0h1v1h-1zm-4 1h1v2h-1zm5 0h1v1h-1zm-3 1h1v1h-1zm2 0h1v1h-1zm2 0h1v1h-1zm-5 1h1v2h-1zm6 0h1v1h-1zm-4 1h1v1h-1zm5 0h2v1h-2zm-6 1h1v2h-1zm6 0h1v1h-1zm2 0h1v1h-1zm-5 1h1v1h-1zm6 0h1v1h-1zm-8 1h1v1h-1zm9 0h1v1h-1zm-8 1h1v2h-1zm2 0h1v1h-1zm7 0h1v1h-1zm-1 1h1v1h-1zm2 0h1v1h-1zm-9 1h1v2h-1zm2 0h1v1h-1zm8 0h1v1h-1zm1 1h1v2h-1zm-10 1h1v2h-1zm2 0h1v1h-1zm9 0h1v1h-1zm1 1h1v1h-1zm-11 1h1v1h-1zm2 0h1v1h-1zm10 0h1v1h-1zm-11 1h1v2h-1zm12 0h1v2h-1zm-10 1h1v1h-1zm11 0h1v1h-1zm-12 1h1v2h-1zm13 0h1v1h-1zm-11 1h1v1h-1zm12 0h2v1h-2zm-13 1h1v1h-1zm14 0h2v1h-2zm-13 1h2v1h-2zm15 0h1v1h-1zm-15 1h1v1h-1zm16 0h1v1h-1zm-15 1h2v1h-2zm16 0h1v1h-1zm-16 1h1v1h-1zm17 0h1v1h-1zm-16 1h2v1h-2zm17 0h1v1h-1zm-17 1h1v1h-1zm18 0h1v1h-1zm-17 1h2v1h-2zm1 1h1v2h-1zm1 1h1v3h-1zm2 2h1v1h-1zm-1 1h1v2h-1zm2 1h1v1h-1zm-1 1h1v1h-1zm1 1h2v1h-2zm0 1h1v1h-1zm1 1h2v1h-2zm0 1h1v1h-1zm1 1h2v1h-2zm0 1h1v1h-1zm1 1h2v1h-2zm1 1h1v2h-1zm1 1h1v3h-1zm1 2h1v3h-1zm1 2h1v2h-1zm1 2h1v2h-1zm1 2h1v2h-1zm1 2h1v1h-1zm1 1h1v2h-1zm1 1h1v3h-1zm1 2h1v3h-1zm1 2h1v2h-1zm1 2h1v2h-1zm1 2h1v2h-1zm1 2h1v2h-1zm1 2h1v1h-1zm-287 4h1v2h-1zm1 2h1v1h-1zm1 1h1v2h-1zm1 2h1v2h-1zm1 2h1v1h-1zm1 1h1v2h-1zm1 2h1v1h-1zm1 1h1v2h-1zm1 2h1v2h-1zm1 2h1v1h-1zm1 1h1v2h-1zm1 2h1v1h-1zm1 1h1v2h-1zm1 2h1v2h-1zm1 2h1v1h-1zm1 1h1v2h-1zm1 2h1v1h-1zm1 1h1v2h-1zm1 2h1v2h-1zm1 2h1v1h-1zm1 1h1v2h-1zm1 2h1v1h-1zm1 1h1v2h-1zm1 2h1v2h-1zm1 2h1v1h-1zm1 1h1v2h-1zm1 2h1v1h-1zm1 1h1v2h-1zm1 2h1v2h-1zm1 2h1v1h-1zm1 1h1v2h-1zm1 2h1v1h-1zm1 1h1v2h-1zm1 2h1v2h-1zm1 2h1v1h-1zm1 1h1v2h-1zm1 2h1v1h-1zm1 1h1v2h-1zm1 2h1v2h-1zm1 2h1v1h-1zm1 1h1v2h-1zm1 2h1v1h-1zm1 1h1v2h-1zm1 2h1v2h-1zm1 2h1v1h-1zm1 1h1v2h-1zm1 2h1v1h-1zm1 1h1v2h-1zm1 2h1v2h-1zm1 2h1v1h-1zm1 1h1v2h-1zm1 2h1v1h-1zm1 1h1v2h-1zm1 2h1v2h-1zm1 2h1v1h-1zm1 1h1v2h-1zm1 2h1v1h-1zm1 1h1v2h-1zm1 2h1v2h-1zm1 2h1v1h-1zm1 1h1v2h-1zm1 2h1v1h-1zm1 1h1v2h-1zm1 2h1v2h-1zm1 2h1v1h-1zm1 1h1v2h-1zm1 2h1v1h-1zm1 1h1v2h-1zm1 2h1v2h-1zm1 2h1v1h-1zm1 1h1v2h-1zm1 2h1v1h-1zm1 1h1v2h-1zm1 2h1v2h-1zm1 2h1v1h-1zm1 1h1v2h-1zm1 2h1v1h-1z"/>
<path fill="#ff0" d="m113 100h1v1h-1zm12 0h1v1h-1zm-11 1h1v2h-1zm10 0h1v2h-1zm-9 2h2v1h-2zm7 0h2v1h-2zm-5 1h5v1h-5zm-2 1h2v1h-2zm7 0h2v1h-2zm-8 1h1v2h-1zm10 0h1v2h-1zm-11 2h1v5h-1zm12 0h1v5h-1zm-11 5h1v2h-1zm10 0h1v2h-1zm-9 2h2v1h-2zm7 0h2v1h-2zm-5 1h5v1h-5zm630 1h3v1h-3zm-2 1h2v1h-2zm5 0h2v1h-2zm-6 1h1v1h-1zm5 0h1v2h-1zm3 0h1v2h-1zm-7 1h2v1h-2zm-1 1h1v2h-1zm3 0h1v2h-1zm3 0h2v1h-2zm2 1h1v1h-1zm-7 1h2v1h-2zm5 0h2v1h-2zm-3 1h3v1h-3zm-420 28h1v1h-1zm417 4h1v1h-1zm2 0h1v1h-1zm2 0h1v1h-1zm-428 1h1v1h-1zm425 0h1v7h-1zm2 0h1v7h-1zm2 0h1v7h-1zm-428 1h2v1h-2zm3 0h1v1h-1zm2 0h2v1h-2zm1 1h4v1h-4zm425 3h1v2h-1zm-2 2h2v1h-2zm-379 11h1v1h-1zm2 1h1v1h-1zm2 1h1v1h-1zm2 1h1v1h-1zm4 3h1v1h-1zm4 3h1v1h-1zm4 3h1v1h-1zm355 9h1v1h-1zm8 0h1v1h-1zm-7 1h1v1h-1zm6 0h1v1h-1zm-5 1h1v5h-1zm4 0h1v5h-1zm-6 2h2v1h-2zm3 0h3v1h-3zm4 0h2v1h-2zm-6 3h1v1h-1zm6 0h1v1h-1zm-7 1h1v1h-1zm8 0h1v1h-1zm-204 27h1v9h-1zm6 0h1v3h-1zm4 0h3v1h-3zm-11 1h1v1h-1zm8 0h1v1h-1zm2 0h1v1h-1zm4 0h1v1h-1zm-15 1h1v1h-1zm10 0h1v1h-1zm6 0h1v3h-1zm-9 1h1v1h-1zm2 0h1v1h-1zm-3 1h1v5h-1zm4 0h1v1h-1zm1 1h1v1h-1zm4 0h1v1h-1zm-3 1h3v1h-3zm1 1h1v1h-1zm1 1h1v1h-1zm-11 1h1v1h-1zm2 0h1v1h-1zm10 0h1v1h-1zm-11 1h1v5h-1zm12 0h1v5h-1zm-1 5h1v1h-1zm-1 1h1v1h-1zm187 49h1v8h-1zm-2 1h2v1h-2zm3 0h2v1h-2zm1 2h2v1h-2zm-594 1h1v3h-1zm593 0h1v1h-1zm3 0h1v2h-1zm-1 2h1v2h-1zm1 2h1v1h-1zm-522 127h1v1h-1zm-16 19h1v15h-1zm-4 2h4v1h-4zm5 0h4v1h-4zm3 4h3v1h-3zm-1 1h1v1h-1zm4 0h1v1h-1zm-6 1h2v1h-2zm7 0h1v3h-1zm-1 3h1v1h-1zm-1 1h1v3h-1zm1 3h1v1h-1zm1 1h1v1h-1zm-5 76h1v1h-1zm4 0h1v1h-1zm4 0h1v1h-1zm-7 1h1v1h-1zm2 0h1v1h-1zm2 0h1v1h-1zm2 0h1v1h-1zm2 0h1v1h-1zm-7 1h1v13h-1zm4 0h1v13h-1zm4 0h1v11h-1zm4 0h1v11h-1zm-1 1h1v1h-1zm-1 1h1v1h-1zm-1 1h1v1h-1zm0 8h1v1h-1zm2 0h1v1h-1zm-1 1h1v1h-1zm-1 1h1v1h-1zm2 0h1v1h-1zm-3 1h1v1h-1zm4 0h1v1h-1z"/>
<path fill="#008080" d="m406 148h5v1h-5zm-1 1h1v1h-1zm6 0h1v1h-1zm-7 1h1v1h-1zm8 0h1v1h-1zm-9 1h1v1h-1zm10 0h1v1h-1zm-11 1h1v5h-1zm12 0h1v5h-1zm-11 5h1v1h-1zm10 0h1v1h-1zm-9 1h1v5h-1zm8 0h1v5h-1zm-10 2h2v1h-2zm11 0h2v1h-2zm-12 1h1v1h-1zm14 0h1v1h-1zm-15 1h1v1h-1zm16 0h1v1h-1zm-15 1h1v1h-1zm2 0h1v1h-1zm10 0h1v1h-1zm2 0h1v1h-1zm-13 1h1v1h-1zm12 0h1v1h-1zm-29 13h1v1h-1zm362 159h3v1h-3zm-1 1h1v1h-1zm4 0h1v1h-1zm-5 1h1v3h-1zm6 0h1v3h-1zm-5 3h1v3h-1zm4 0h1v3h-1zm-5 1h1v1h-1zm6 0h1v1h-1zm-7 1h1v1h-1zm8 0h1v1h-1zm-7 1h1v1h-1zm6 0h1v1h-1z"/>
</g>
<g class="hl" filter="url(#t)">
<text class="h" transform="translate(95.05 347) scale(.85 1)" fill="#f00">1</text>
<text class="h" transform="translate(132.05 429) scale(.85 1)" fill="#ff0">2</text>
<text class="h" transform="translate(209.05 493) scale(.85 1)" fill="#0f0">3</text>
<text class="h" transform="translate(321.05 513) scale(.85 1)" fill="#00f">4</text>
<text class="h" transform="translate(436.05 464) scale(.85 1)" fill="#f00">5</text>
<text class="h" transform="translate(502.05 362) scale(.85 1)" fill="#ff0">6</text>
<text class="h" transform="translate(505.05 261) scale(.85 1)" fill="#0f0">7</text>
<text class="h" transform="translate(468.05 179) scale(.85 1)" fill="#00f">8</text>
<text class="h" transform="translate(391.05 115) scale(.85 1)" fill="#f00">9</text>
<text class="h" transform="translate(279.05 95) scale(.85 1)" fill="#ff0">10</text>
<text class="h" transform="translate(164.05 144) scale(.85 1)" fill="#0f0">11</text>
<text class="h" transform="translate(98.05 246) scale(.85 1)" fill="#00f">12</text>
</g>
<g class="ol" filter="url(#t2)">
<text class="o" transform="translate(332.5 131) scale(0.46 1)" fill="#ff0">MC</text>
<text class="o" transform="translate(119.5 304) scale(0.44 1)" fill="#f00">Asc</text>
</g>
<g class="side" filter="url(#t)">
<text x="606" y="14" fill="#fff" xml:space="preserve">Astrolog 5.40</text>
<text x="606" y="24" fill="#c0c0c0" xml:space="preserve">"Project"</text>
<text x="606" y="34" fill="#c0c0c0" xml:space="preserve">Fri March 14, 2008</text>
<text x="606" y="44" fill="#c0c0c0" xml:space="preserve">11:55am (ST +8:00 GMT)</text>
<text x="606" y="54" fill="#c0c0c0" xml:space="preserve">"Taiwan"</text>
<text x="606" y="64" fill="#c0c0c0" xml:space="preserve">120°29E 22°41N</text>
<text x="606" y="74" fill="#c0c0c0" xml:space="preserve">Placidus houses.</text>
<text x="606" y="84" fill="#c0c0c0" xml:space="preserve">Tropical, Geocentric.</text>
<text x="606" y="94" fill="#c0c0c0" xml:space="preserve">Julian Day = 2454539.6632</text>
<text x="606" y="114" fill="#f00" xml:space="preserve"> 1st house: <tspan x="678" fill="#00f"> 1Can40</tspan></text>
<text x="606" y="124" fill="#ff0" xml:space="preserve"> 2nd house: <tspan x="678" fill="#00f">25Can34</tspan></text>
<text x="606" y="134" fill="#0f0" xml:space="preserve"> 3rd house: <tspan x="678" fill="#f00">21Leo03</tspan></text>
<text x="606" y="144" fill="#00f" xml:space="preserve"> 4th house: <tspan x="678" fill="#ff0">20Vir37</tspan></text>
<text x="606" y="154" fill="#f00" xml:space="preserve"> 5th house: <tspan x="678" fill="#0f0">24Lib31</tspan></text>
<text x="606" y="164" fill="#ff0" xml:space="preserve"> 6th house: <tspan x="678" fill="#00f">29Sco25</tspan></text>
<text x="606" y="174" fill="#0f0" xml:space="preserve"> 7th house: <tspan x="678" fill="#ff0"> 1Cap40</tspan></text>
<text x="606" y="184" fill="#00f" xml:space="preserve"> 8th house: <tspan x="678" fill="#ff0">25Cap34</tspan></text>
<text x="606" y="194" fill="#f00" xml:space="preserve"> 9th house: <tspan x="678" fill="#0f0">21Aqu03</tspan></text>
<text x="606" y="204" fill="#ff0" xml:space="preserve">10th house: <tspan x="678" fill="#00f">20Pis37</tspan></text>
<text x="606" y="214" fill="#0f0" xml:space="preserve">11th house: <tspan x="678" fill="#f00">24Ari31</tspan></text>
<text x="606" y="224" fill="#00f" xml:space="preserve">12th house: <tspan x="678" fill="#ff0">29Tau25</tspan></text>
<text x="606" y="244" fill="#f00" xml:space="preserve"> Sun: <tspan x="642" fill="#00f">23Pis57  </tspan><tspan x="696" fill="#c0c0c0">- 0°00'</tspan></text>
<text x="606" y="254" fill="#00f" xml:space="preserve">Moon: <tspan x="642" fill="#0f0">20Gem12  </tspan><tspan x="696" fill="#c0c0c0">+ 4°50'</tspan></text>
<text x="606" y="264" fill="#0f0" xml:space="preserve">Merc: <tspan x="642" fill="#0f0">28Aqu55  </tspan><tspan x="696" fill="#c0c0c0">- 1°44'</tspan></text>
<text x="606" y="274" fill="#0f0" xml:space="preserve">Venu: <tspan x="642" fill="#00f"> 1Pis29  </tspan><tspan x="696" fill="#c0c0c0">- 1°06'</tspan></text>
<text x="606" y="284" fill="#f00" xml:space="preserve">Mars: <tspan x="642" fill="#00f"> 3Can23  </tspan><tspan x="696" fill="#c0c0c0">+ 2°35'</tspan></text>
<text x="606" y="294" fill="#f00" xml:space="preserve">Jupi: <tspan x="642" fill="#ff0">17Cap48  </tspan><tspan x="696" fill="#c0c0c0">+ 0°04'</tspan></text>
<text x="606" y="304" fill="#ff0" xml:space="preserve">Satu: <tspan x="642" fill="#ff0"> 3Vir38</tspan><tspan x="684" fill="#fff">R </tspan><tspan x="696" fill="#c0c0c0">+ 1°51'</tspan></text>
<text x="606" y="314" fill="#0f0" xml:space="preserve">Uran: <tspan x="642" fill="#00f">18Pis57  </tspan><tspan x="696" fill="#c0c0c0">- 0°44'</tspan></text>
<text x="606" y="324" fill="#00f" xml:space="preserve">Nept: <tspan x="642" fill="#0f0">22Aqu53  </tspan><tspan x="696" fill="#c0c0c0">- 0°18'</tspan></text>
<text x="606" y="334" fill="#00f" xml:space="preserve">Plut: <tspan x="642" fill="#ff0"> 1Cap03  </tspan><tspan x="696" fill="#c0c0c0">+ 6°20'</tspan></text>
<text x="606" y="344" fill="#008080" xml:space="preserve">Node: <tspan x="642" fill="#0f0">26Aqu28</tspan><tspan x="684" fill="#fff">R </tspan><tspan x="696" fill="#c0c0c0">+ 0°00'</tspan></text>
<text x="606" y="364" fill="#c0c0c0" xml:space="preserve">Fire: 0, Earth: 3,</text>
<text x="606" y="374" fill="#c0c0c0" xml:space="preserve">Air : 4, Water: 6</text>
<text x="606" y="384" fill="#c0c0c0" xml:space="preserve">Car: 4, Fix: 3, Mut: 6</text>
<text x="606" y="394" fill="#c0c0c0" xml:space="preserve">Yang: 4, Yin: 9</text>
<text x="606" y="404" fill="#c0c0c0" xml:space="preserve">M: 8, N: 3, A: 4, D: 7</text>
<text x="606" y="414" fill="#c0c0c0" xml:space="preserve">Ang: 3, Suc: 0, Cad: 8</text>
<text x="606" y="424" fill="#c0c0c0" xml:space="preserve">Learn: 4, Share: 9</text>
</g>
</svg>
</body></html>
